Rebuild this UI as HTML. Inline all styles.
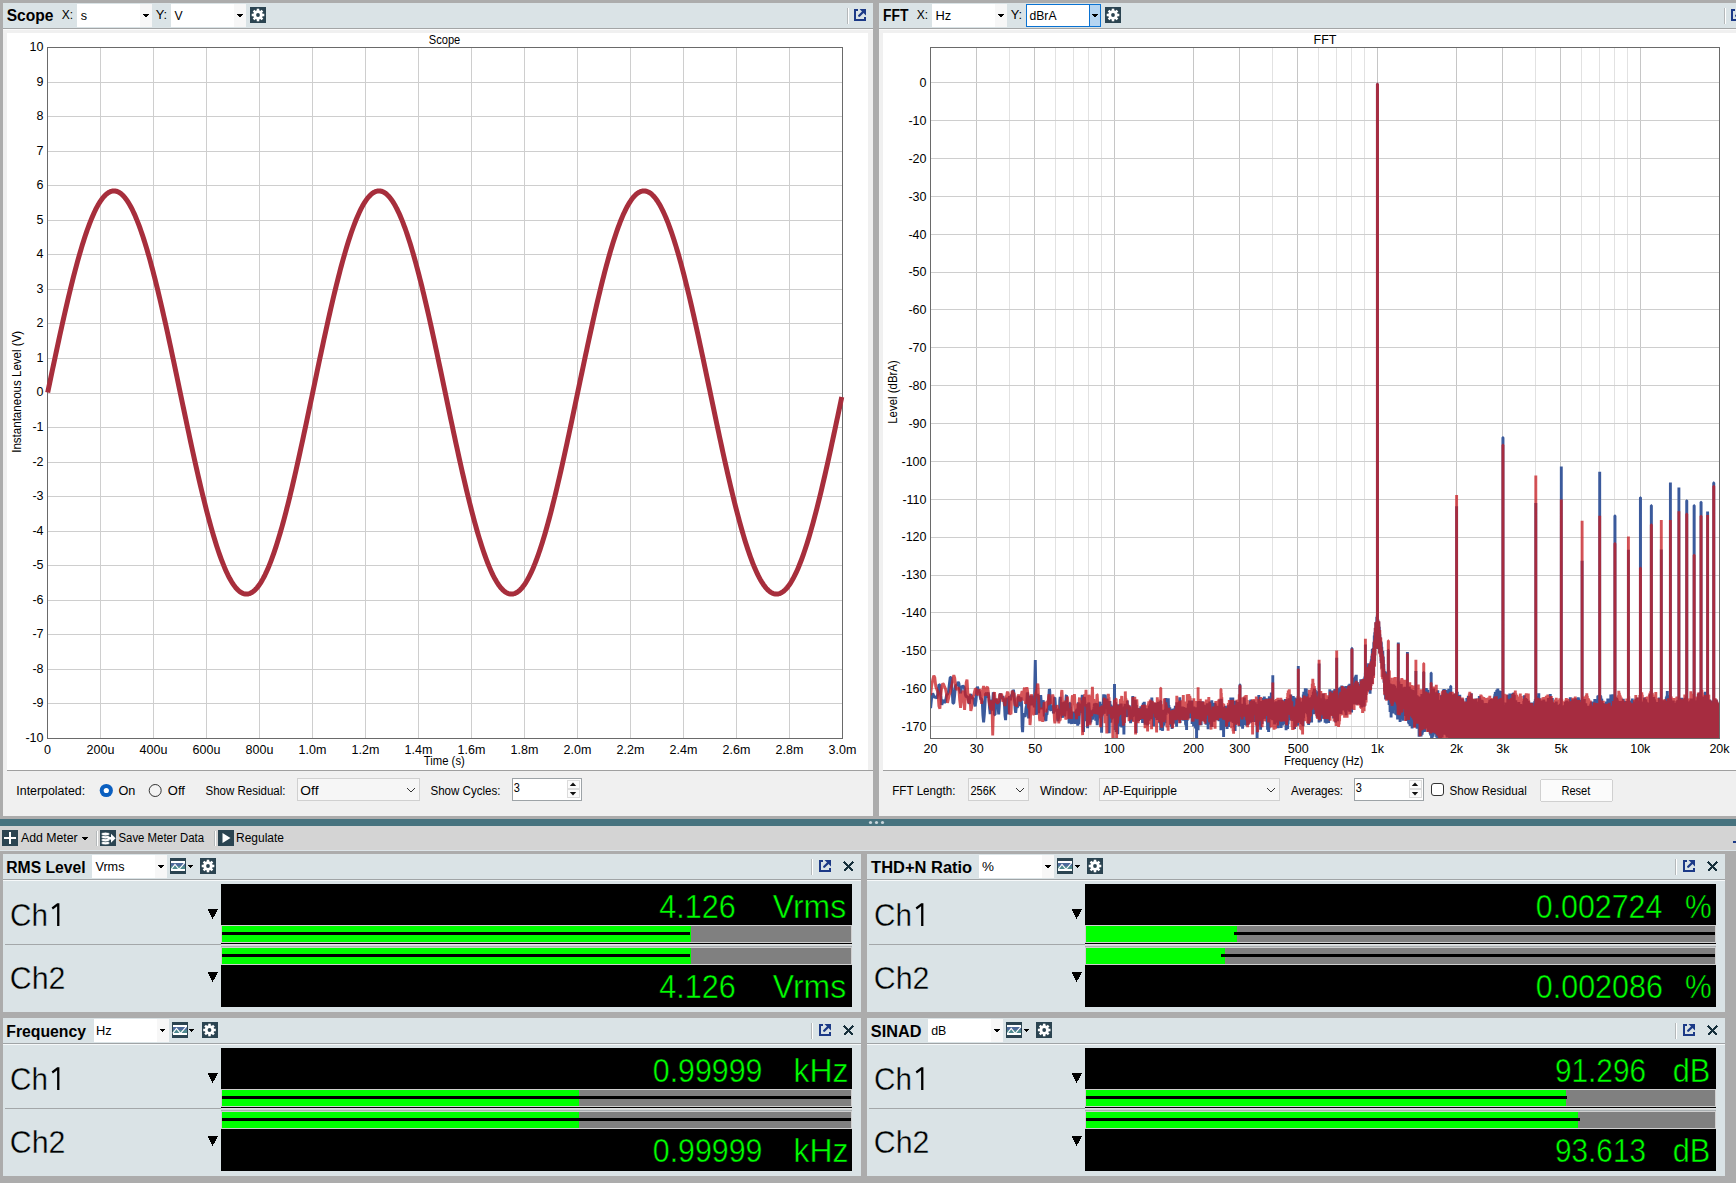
<!DOCTYPE html>
<html><head><meta charset="utf-8"><title>AP</title>
<style>html,body{margin:0;padding:0;overflow:hidden;background:#acacac;} svg{display:block;}</style>
</head><body>
<svg width="1736" height="1183" viewBox="0 0 1736 1183" font-family='"Liberation Sans", sans-serif' shape-rendering="crispEdges">
<rect x="0" y="0" width="1736" height="1183" fill="#acacac" />
<rect x="3" y="3" width="870" height="25" fill="#dae3e6" />
<rect x="3" y="28" width="870" height="1" fill="#a3a5a6" />
<rect x="3" y="29" width="870" height="787" fill="#f0f0f0" />
<rect x="3" y="29" width="870" height="1" fill="#fbfbfb" />
<rect x="7" y="33" width="861" height="737" fill="#ffffff" />
<rect x="7" y="770" width="866" height="1" fill="#a0a0a0" />
<text x="6.65" y="20.9" font-size="16" fill="#000" font-weight="bold" textLength="46.68" lengthAdjust="spacingAndGlyphs" >Scope</text>
<text x="61.72" y="18.8" font-size="12.5" fill="#000" textLength="11.37" lengthAdjust="spacingAndGlyphs" >X:</text>
<rect x="77" y="4" width="75" height="23" fill="#ffffff" />
<rect x="140" y="4" width="12" height="23" fill="#f7f7f7" />
<polygon points="142.5,13.75 149.5,13.75 146.0,17.25" fill="#000"/>
<text x="80.65" y="19.5" font-size="12.5" fill="#000" textLength="6.31" lengthAdjust="spacingAndGlyphs" >s</text>
<text x="155.72" y="18.8" font-size="12.5" fill="#000" textLength="11.45" lengthAdjust="spacingAndGlyphs" >Y:</text>
<rect x="171" y="4" width="75" height="23" fill="#ffffff" />
<rect x="234" y="4" width="12" height="23" fill="#f7f7f7" />
<polygon points="236.5,13.75 243.5,13.75 240.0,17.25" fill="#000"/>
<text x="174.44" y="19.5" font-size="12.5" fill="#000" textLength="8.12" lengthAdjust="spacingAndGlyphs" >V</text>
<rect x="250" y="7" width="16" height="16" fill="#2b4451" />
<g fill="#fff" shape-rendering="geometricPrecision"><circle cx="258.0" cy="15.0" r="4.7"/><rect x="256.75" y="8.7" width="2.5" height="3" transform="rotate(0 258.0 15.0)"/><rect x="256.75" y="8.7" width="2.5" height="3" transform="rotate(45 258.0 15.0)"/><rect x="256.75" y="8.7" width="2.5" height="3" transform="rotate(90 258.0 15.0)"/><rect x="256.75" y="8.7" width="2.5" height="3" transform="rotate(135 258.0 15.0)"/><rect x="256.75" y="8.7" width="2.5" height="3" transform="rotate(180 258.0 15.0)"/><rect x="256.75" y="8.7" width="2.5" height="3" transform="rotate(225 258.0 15.0)"/><rect x="256.75" y="8.7" width="2.5" height="3" transform="rotate(270 258.0 15.0)"/><rect x="256.75" y="8.7" width="2.5" height="3" transform="rotate(315 258.0 15.0)"/><circle cx="258.0" cy="15.0" r="1.9" fill="#2b4451"/></g>
<rect x="847" y="8" width="1" height="16" fill="#b4b8ba" />
<rect x="848" y="8" width="1" height="16" fill="#ffffff" />
<rect x="854" y="9" width="2" height="12" fill="#1c3a87" />
<rect x="854" y="19" width="12" height="2" fill="#1c3a87" />
<rect x="854" y="9" width="4" height="2" fill="#1c3a87" />
<rect x="864" y="17" width="2" height="4" fill="#1c3a87" />
<g shape-rendering="geometricPrecision"><polygon points="859.5,9 866,9 866,15.5" fill="#1c3a87"/><path d="M859.2 15.8L863 12" stroke="#1c3a87" stroke-width="2.3" stroke-linecap="round"/></g>
<rect x="879" y="3" width="857" height="25" fill="#dae3e6" />
<rect x="879" y="28" width="857" height="1" fill="#a3a5a6" />
<rect x="879" y="29" width="857" height="787" fill="#f0f0f0" />
<rect x="879" y="29" width="857" height="1" fill="#fbfbfb" />
<rect x="883" y="33" width="853" height="737" fill="#ffffff" />
<rect x="883" y="770" width="853" height="1" fill="#a0a0a0" />
<text x="883.07" y="20.9" font-size="16" fill="#000" font-weight="bold" textLength="25.37" lengthAdjust="spacingAndGlyphs" >FFT</text>
<text x="916.72" y="18.8" font-size="12.5" fill="#000" textLength="11.37" lengthAdjust="spacingAndGlyphs" >X:</text>
<rect x="932" y="4" width="75" height="23" fill="#ffffff" />
<rect x="995" y="4" width="12" height="23" fill="#f7f7f7" />
<polygon points="997.5,13.75 1004.5,13.75 1001.0,17.25" fill="#000"/>
<text x="935.45" y="19.5" font-size="12.5" fill="#000" textLength="15.7" lengthAdjust="spacingAndGlyphs" >Hz</text>
<text x="1010.72" y="18.8" font-size="12.5" fill="#000" textLength="11.45" lengthAdjust="spacingAndGlyphs" >Y:</text>
<rect x="1026" y="4" width="75" height="23" fill="#ffffff" />
<rect x="1089" y="4" width="12" height="23" fill="#b5d5f2" />
<rect x="1026.5" y="4.5" width="74" height="22" fill="none" stroke="#0a72d2"/>
<rect x="1089" y="4" width="1" height="23" fill="#0a72d2" />
<polygon points="1091.5,13.75 1098.5,13.75 1095.0,17.25" fill="#000"/>
<text x="1029.49" y="19.5" font-size="12.5" fill="#000" textLength="27.04" lengthAdjust="spacingAndGlyphs" >dBrA</text>
<rect x="1105" y="7" width="16" height="16" fill="#2b4451" />
<g fill="#fff" shape-rendering="geometricPrecision"><circle cx="1113.0" cy="15.0" r="4.7"/><rect x="1111.75" y="8.7" width="2.5" height="3" transform="rotate(0 1113.0 15.0)"/><rect x="1111.75" y="8.7" width="2.5" height="3" transform="rotate(45 1113.0 15.0)"/><rect x="1111.75" y="8.7" width="2.5" height="3" transform="rotate(90 1113.0 15.0)"/><rect x="1111.75" y="8.7" width="2.5" height="3" transform="rotate(135 1113.0 15.0)"/><rect x="1111.75" y="8.7" width="2.5" height="3" transform="rotate(180 1113.0 15.0)"/><rect x="1111.75" y="8.7" width="2.5" height="3" transform="rotate(225 1113.0 15.0)"/><rect x="1111.75" y="8.7" width="2.5" height="3" transform="rotate(270 1113.0 15.0)"/><rect x="1111.75" y="8.7" width="2.5" height="3" transform="rotate(315 1113.0 15.0)"/><circle cx="1113.0" cy="15.0" r="1.9" fill="#2b4451"/></g>
<rect x="1724" y="8" width="1" height="16" fill="#b4b8ba" />
<rect x="1725" y="8" width="1" height="16" fill="#ffffff" />
<rect x="1731" y="9" width="2" height="12" fill="#1c3a87" />
<rect x="1731" y="19" width="12" height="2" fill="#1c3a87" />
<rect x="1731" y="9" width="4" height="2" fill="#1c3a87" />
<rect x="1741" y="17" width="2" height="4" fill="#1c3a87" />
<g shape-rendering="geometricPrecision"><polygon points="1736.5,9 1743,9 1743,15.5" fill="#1c3a87"/><path d="M1736.2 15.8L1740 12" stroke="#1c3a87" stroke-width="2.3" stroke-linecap="round"/></g>
<rect x="100" y="47" width="1" height="691" fill="#cecece" />
<rect x="153" y="47" width="1" height="691" fill="#cecece" />
<rect x="206" y="47" width="1" height="691" fill="#cecece" />
<rect x="259" y="47" width="1" height="691" fill="#cecece" />
<rect x="312" y="47" width="1" height="691" fill="#cecece" />
<rect x="365" y="47" width="1" height="691" fill="#cecece" />
<rect x="418" y="47" width="1" height="691" fill="#cecece" />
<rect x="471" y="47" width="1" height="691" fill="#cecece" />
<rect x="524" y="47" width="1" height="691" fill="#cecece" />
<rect x="577" y="47" width="1" height="691" fill="#cecece" />
<rect x="630" y="47" width="1" height="691" fill="#cecece" />
<rect x="683" y="47" width="1" height="691" fill="#cecece" />
<rect x="736" y="47" width="1" height="691" fill="#cecece" />
<rect x="789" y="47" width="1" height="691" fill="#cecece" />
<rect x="47" y="82" width="795" height="1" fill="#cecece" />
<rect x="47" y="116" width="795" height="1" fill="#cecece" />
<rect x="47" y="151" width="795" height="1" fill="#cecece" />
<rect x="47" y="185" width="795" height="1" fill="#cecece" />
<rect x="47" y="220" width="795" height="1" fill="#cecece" />
<rect x="47" y="254" width="795" height="1" fill="#cecece" />
<rect x="47" y="289" width="795" height="1" fill="#cecece" />
<rect x="47" y="323" width="795" height="1" fill="#cecece" />
<rect x="47" y="358" width="795" height="1" fill="#cecece" />
<rect x="47" y="393" width="795" height="1" fill="#cecece" />
<rect x="47" y="427" width="795" height="1" fill="#cecece" />
<rect x="47" y="462" width="795" height="1" fill="#cecece" />
<rect x="47" y="496" width="795" height="1" fill="#cecece" />
<rect x="47" y="531" width="795" height="1" fill="#cecece" />
<rect x="47" y="565" width="795" height="1" fill="#cecece" />
<rect x="47" y="600" width="795" height="1" fill="#cecece" />
<rect x="47" y="634" width="795" height="1" fill="#cecece" />
<rect x="47" y="669" width="795" height="1" fill="#cecece" />
<rect x="47" y="703" width="795" height="1" fill="#cecece" />
<rect x="47.5" y="47.5" width="795" height="691" fill="none" stroke="#6a6a6a" stroke-width="1"/>
<text x="43.5" y="50.9" font-size="12.5" fill="#000" text-anchor="end" >10</text>
<text x="43.5" y="85.5" font-size="12.5" fill="#000" text-anchor="end" >9</text>
<text x="43.5" y="120.0" font-size="12.5" fill="#000" text-anchor="end" >8</text>
<text x="43.5" y="154.6" font-size="12.5" fill="#000" text-anchor="end" >7</text>
<text x="43.5" y="189.1" font-size="12.5" fill="#000" text-anchor="end" >6</text>
<text x="43.5" y="223.7" font-size="12.5" fill="#000" text-anchor="end" >5</text>
<text x="43.5" y="258.2" font-size="12.5" fill="#000" text-anchor="end" >4</text>
<text x="43.5" y="292.8" font-size="12.5" fill="#000" text-anchor="end" >3</text>
<text x="43.5" y="327.3" font-size="12.5" fill="#000" text-anchor="end" >2</text>
<text x="43.5" y="361.8" font-size="12.5" fill="#000" text-anchor="end" >1</text>
<text x="43.5" y="396.4" font-size="12.5" fill="#000" text-anchor="end" >0</text>
<text x="43.5" y="430.9" font-size="12.5" fill="#000" text-anchor="end" >-1</text>
<text x="43.5" y="465.5" font-size="12.5" fill="#000" text-anchor="end" >-2</text>
<text x="43.5" y="500.0" font-size="12.5" fill="#000" text-anchor="end" >-3</text>
<text x="43.5" y="534.6" font-size="12.5" fill="#000" text-anchor="end" >-4</text>
<text x="43.5" y="569.1" font-size="12.5" fill="#000" text-anchor="end" >-5</text>
<text x="43.5" y="603.7" font-size="12.5" fill="#000" text-anchor="end" >-6</text>
<text x="43.5" y="638.2" font-size="12.5" fill="#000" text-anchor="end" >-7</text>
<text x="43.5" y="672.8" font-size="12.5" fill="#000" text-anchor="end" >-8</text>
<text x="43.5" y="707.4" font-size="12.5" fill="#000" text-anchor="end" >-9</text>
<text x="43.5" y="741.9" font-size="12.5" fill="#000" text-anchor="end" >-10</text>
<text x="47.5" y="754" font-size="12.5" fill="#000" text-anchor="middle" >0</text>
<text x="100.5" y="754" font-size="12.5" fill="#000" text-anchor="middle" >200u</text>
<text x="153.5" y="754" font-size="12.5" fill="#000" text-anchor="middle" >400u</text>
<text x="206.5" y="754" font-size="12.5" fill="#000" text-anchor="middle" >600u</text>
<text x="259.5" y="754" font-size="12.5" fill="#000" text-anchor="middle" >800u</text>
<text x="312.5" y="754" font-size="12.5" fill="#000" text-anchor="middle" >1.0m</text>
<text x="365.5" y="754" font-size="12.5" fill="#000" text-anchor="middle" >1.2m</text>
<text x="418.5" y="754" font-size="12.5" fill="#000" text-anchor="middle" >1.4m</text>
<text x="471.5" y="754" font-size="12.5" fill="#000" text-anchor="middle" >1.6m</text>
<text x="524.5" y="754" font-size="12.5" fill="#000" text-anchor="middle" >1.8m</text>
<text x="577.5" y="754" font-size="12.5" fill="#000" text-anchor="middle" >2.0m</text>
<text x="630.5" y="754" font-size="12.5" fill="#000" text-anchor="middle" >2.2m</text>
<text x="683.5" y="754" font-size="12.5" fill="#000" text-anchor="middle" >2.4m</text>
<text x="736.5" y="754" font-size="12.5" fill="#000" text-anchor="middle" >2.6m</text>
<text x="789.5" y="754" font-size="12.5" fill="#000" text-anchor="middle" >2.8m</text>
<text x="842.5" y="754" font-size="12.5" fill="#000" text-anchor="middle" >3.0m</text>
<text x="444.5" y="44" font-size="12.5" fill="#000" text-anchor="middle" textLength="31.5" lengthAdjust="spacingAndGlyphs" >Scope</text>
<text x="444.3" y="764.5" font-size="12.5" fill="#000" text-anchor="middle" textLength="41" lengthAdjust="spacingAndGlyphs" >Time (s)</text>
<text x="0" y="0" font-size="12.5" fill="#000" text-anchor="middle" textLength="122" lengthAdjust="spacingAndGlyphs" transform="translate(20.8 391.8) rotate(-90)">Instantaneous Level (V)</text>
<polyline points="47.70,392.50 48.69,387.76 49.69,383.01 50.68,378.28 51.67,373.55 52.66,368.83 53.66,364.13 54.65,359.44 55.64,354.77 56.63,350.12 57.63,345.49 58.62,340.89 59.61,336.32 60.60,331.78 61.60,327.27 62.59,322.80 63.58,318.37 64.57,313.98 65.57,309.63 66.56,305.33 67.55,301.08 68.54,296.87 69.54,292.72 70.53,288.63 71.52,284.59 72.51,280.61 73.51,276.70 74.50,272.85 75.49,269.06 76.49,265.35 77.48,261.70 78.47,258.13 79.46,254.63 80.46,251.20 81.45,247.86 82.44,244.59 83.43,241.41 84.43,238.31 85.42,235.30 86.41,232.37 87.40,229.53 88.40,226.79 89.39,224.13 90.38,221.57 91.37,219.10 92.37,216.73 93.36,214.45 94.35,212.28 95.34,210.20 96.34,208.23 97.33,206.35 98.32,204.58 99.31,202.92 100.31,201.36 101.30,199.90 102.29,198.55 103.29,197.31 104.28,196.18 105.27,195.16 106.26,194.24 107.26,193.44 108.25,192.74 109.24,192.16 110.23,191.68 111.23,191.32 112.22,191.07 113.21,190.93 114.20,190.90 115.20,190.99 116.19,191.18 117.18,191.49 118.17,191.91 119.17,192.44 120.16,193.08 121.15,193.83 122.14,194.69 123.14,195.66 124.13,196.74 125.12,197.93 126.11,199.23 127.11,200.63 128.10,202.14 129.09,203.75 130.09,205.47 131.08,207.30 132.07,209.22 133.06,211.25 134.06,213.37 135.05,215.60 136.04,217.93 137.03,220.35 138.03,222.86 139.02,225.47 140.01,228.18 141.00,230.97 142.00,233.85 142.99,236.82 143.98,239.88 144.97,243.02 145.97,246.25 146.96,249.55 147.95,252.94 148.94,256.40 149.94,259.94 150.93,263.55 151.92,267.23 152.91,270.98 153.91,274.80 154.90,278.69 155.89,282.63 156.88,286.64 157.88,290.71 158.87,294.83 159.86,299.01 160.86,303.24 161.85,307.52 162.84,311.84 163.83,316.21 164.83,320.62 165.82,325.08 166.81,329.56 167.80,334.09 168.80,338.65 169.79,343.23 170.78,347.85 171.77,352.48 172.77,357.15 173.76,361.83 174.75,366.52 175.74,371.23 176.74,375.96 177.73,380.69 178.72,385.43 179.71,390.17 180.71,394.92 181.70,399.66 182.69,404.40 183.68,409.13 184.68,413.86 185.67,418.57 186.66,423.26 187.66,427.94 188.65,432.60 189.64,437.24 190.63,441.86 191.63,446.44 192.62,451.00 193.61,455.52 194.60,460.01 195.60,464.46 196.59,468.87 197.58,473.24 198.57,477.57 199.57,481.84 200.56,486.07 201.55,490.25 202.54,494.37 203.54,498.44 204.53,502.44 205.52,506.39 206.51,510.27 207.51,514.09 208.50,517.84 209.49,521.52 210.48,525.13 211.48,528.67 212.47,532.13 213.46,535.51 214.46,538.82 215.45,542.04 216.44,545.18 217.43,548.23 218.43,551.20 219.42,554.09 220.41,556.88 221.40,559.58 222.40,562.19 223.39,564.70 224.38,567.12 225.37,569.44 226.37,571.67 227.36,573.79 228.35,575.82 229.34,577.74 230.34,579.56 231.33,581.28 232.32,582.89 233.31,584.40 234.31,585.80 235.30,587.09 236.29,588.28 237.28,589.36 238.28,590.32 239.27,591.18 240.26,591.93 241.26,592.57 242.25,593.10 243.24,593.52 244.23,593.82 245.23,594.01 246.22,594.10 247.21,594.07 248.20,593.93 249.20,593.67 250.19,593.31 251.18,592.83 252.17,592.25 253.17,591.55 254.16,590.74 255.15,589.83 256.14,588.80 257.14,587.66 258.13,586.42 259.12,585.07 260.11,583.61 261.11,582.05 262.10,580.38 263.09,578.61 264.08,576.74 265.08,574.76 266.07,572.68 267.06,570.50 268.06,568.23 269.05,565.85 270.04,563.38 271.03,560.82 272.03,558.16 273.02,555.41 274.01,552.57 275.00,549.64 276.00,546.63 276.99,543.53 277.98,540.34 278.97,537.08 279.97,533.73 280.96,530.31 281.95,526.81 282.94,523.23 283.94,519.58 284.93,515.87 285.92,512.08 286.91,508.23 287.91,504.31 288.90,500.33 289.89,496.29 290.88,492.20 291.88,488.05 292.87,483.84 293.86,479.59 294.86,475.29 295.85,470.94 296.84,466.55 297.83,462.11 298.83,457.64 299.82,453.13 300.81,448.59 301.80,444.02 302.80,439.42 303.79,434.79 304.78,430.14 305.77,425.47 306.77,420.78 307.76,416.08 308.75,411.36 309.74,406.63 310.74,401.89 311.73,397.15 312.72,392.41 313.71,387.66 314.71,382.92 315.70,378.19 316.69,373.46 317.68,368.74 318.68,364.04 319.67,359.35 320.66,354.68 321.66,350.03 322.65,345.40 323.64,340.80 324.63,336.23 325.63,331.69 326.62,327.19 327.61,322.72 328.60,318.28 329.60,313.89 330.59,309.55 331.58,305.25 332.57,300.99 333.57,296.79 334.56,292.64 335.55,288.55 336.54,284.51 337.54,280.54 338.53,276.62 339.52,272.77 340.51,268.99 341.51,265.27 342.50,261.63 343.49,258.06 344.48,254.56 345.48,251.14 346.47,247.80 347.46,244.53 348.45,241.35 349.45,238.25 350.44,235.24 351.43,232.32 352.43,229.48 353.42,226.73 354.41,224.08 355.40,221.52 356.40,219.05 357.39,216.68 358.38,214.41 359.37,212.24 360.37,210.16 361.36,208.19 362.35,206.32 363.34,204.55 364.34,202.89 365.33,201.33 366.32,199.87 367.31,198.53 368.31,197.29 369.30,196.16 370.29,195.14 371.28,194.22 372.28,193.42 373.27,192.73 374.26,192.15 375.25,191.68 376.25,191.32 377.24,191.07 378.23,190.93 379.23,190.90 380.22,190.99 381.21,191.19 382.20,191.50 383.20,191.92 384.19,192.45 385.18,193.09 386.17,193.85 387.17,194.71 388.16,195.68 389.15,196.77 390.14,197.96 391.14,199.25 392.13,200.66 393.12,202.17 394.11,203.79 395.11,205.51 396.10,207.33 397.09,209.26 398.08,211.29 399.08,213.42 400.07,215.64 401.06,217.97 402.05,220.39 403.05,222.91 404.04,225.52 405.03,228.23 406.03,231.02 407.02,233.91 408.01,236.88 409.00,239.94 410.00,243.08 410.99,246.31 411.98,249.62 412.97,253.00 413.97,256.47 414.96,260.01 415.95,263.62 416.94,267.30 417.94,271.06 418.93,274.88 419.92,278.76 420.91,282.71 421.91,286.72 422.90,290.79 423.89,294.91 424.88,299.09 425.88,303.32 426.87,307.60 427.86,311.92 428.85,316.30 429.85,320.71 430.84,325.16 431.83,329.65 432.83,334.18 433.82,338.73 434.81,343.32 435.80,347.94 436.80,352.57 437.79,357.24 438.78,361.92 439.77,366.61 440.77,371.33 441.76,376.05 442.75,380.78 443.74,385.52 444.74,390.26 445.73,395.01 446.72,399.75 447.71,404.49 448.71,409.22 449.70,413.95 450.69,418.66 451.68,423.35 452.68,428.03 453.67,432.69 454.66,437.33 455.65,441.94 456.65,446.53 457.64,451.08 458.63,455.61 459.63,460.10 460.62,464.55 461.61,468.96 462.60,473.33 463.60,477.65 464.59,481.93 465.58,486.15 466.57,490.33 467.57,494.45 468.56,498.51 469.55,502.52 470.54,506.46 471.54,510.35 472.53,514.16 473.52,517.91 474.51,521.59 475.51,525.20 476.50,528.73 477.49,532.19 478.48,535.58 479.48,538.88 480.47,542.10 481.46,545.24 482.45,548.29 483.45,551.26 484.44,554.14 485.43,556.93 486.43,559.63 487.42,562.24 488.41,564.75 489.40,567.17 490.40,569.49 491.39,571.71 492.38,573.83 493.37,575.86 494.37,577.78 495.36,579.60 496.35,581.31 497.34,582.92 498.34,584.43 499.33,585.82 500.32,587.12 501.31,588.30 502.31,589.38 503.30,590.34 504.29,591.20 505.28,591.95 506.28,592.58 507.27,593.11 508.26,593.52 509.25,593.83 510.25,594.02 511.24,594.10 512.23,594.06 513.23,593.92 514.22,593.67 515.21,593.30 516.20,592.82 517.20,592.23 518.19,591.54 519.18,590.73 520.17,589.81 521.17,588.78 522.16,587.64 523.15,586.40 524.14,585.04 525.14,583.59 526.13,582.02 527.12,580.35 528.11,578.58 529.11,576.70 530.10,574.72 531.09,572.64 532.08,570.46 533.08,568.18 534.07,565.81 535.06,563.34 536.05,560.77 537.05,558.11 538.04,555.36 539.03,552.52 540.02,549.59 541.02,546.57 542.01,543.47 543.00,540.28 544.00,537.01 544.99,533.67 545.98,530.24 546.97,526.74 547.97,523.16 548.96,519.51 549.95,515.79 550.94,512.01 551.94,508.15 552.93,504.23 553.92,500.26 554.91,496.22 555.91,492.12 556.90,487.97 557.89,483.76 558.88,479.51 559.88,475.20 560.87,470.85 561.86,466.46 562.85,462.03 563.85,457.56 564.84,453.05 565.83,448.51 566.82,443.93 567.82,439.33 568.81,434.70 569.80,430.05 570.80,425.38 571.79,420.69 572.78,415.99 573.77,411.27 574.77,406.54 575.76,401.80 576.75,397.06 577.74,392.32 578.74,387.57 579.73,382.83 580.72,378.10 581.71,373.37 582.71,368.65 583.70,363.95 584.69,359.26 585.68,354.59 586.68,349.94 587.67,345.31 588.66,340.72 589.65,336.15 590.65,331.61 591.64,327.10 592.63,322.63 593.62,318.20 594.62,313.81 595.61,309.46 596.60,305.16 597.60,300.91 598.59,296.71 599.58,292.56 600.57,288.47 601.57,284.44 602.56,280.46 603.55,276.55 604.54,272.70 605.54,268.92 606.53,265.20 607.52,261.56 608.51,257.99 609.51,254.49 610.50,251.07 611.49,247.73 612.48,244.47 613.48,241.29 614.47,238.20 615.46,235.18 616.45,232.26 617.45,229.43 618.44,226.68 619.43,224.03 620.42,221.47 621.42,219.01 622.41,216.64 623.40,214.37 624.40,212.20 625.39,210.12 626.38,208.15 627.37,206.28 628.37,204.52 629.36,202.86 630.35,201.30 631.34,199.85 632.34,198.50 633.33,197.27 634.32,196.14 635.31,195.12 636.31,194.21 637.30,193.41 638.29,192.72 639.28,192.14 640.28,191.67 641.27,191.31 642.26,191.06 643.25,190.93 644.25,190.91 645.24,190.99 646.23,191.19 647.22,191.51 648.22,191.93 649.21,192.46 650.20,193.11 651.20,193.86 652.19,194.73 653.18,195.70 654.17,196.79 655.17,197.98 656.16,199.28 657.15,200.69 658.14,202.20 659.14,203.82 660.13,205.54 661.12,207.37 662.11,209.30 663.11,211.33 664.10,213.46 665.09,215.69 666.08,218.02 667.08,220.44 668.07,222.96 669.06,225.57 670.05,228.28 671.05,231.08 672.04,233.96 673.03,236.94 674.02,240.00 675.02,243.15 676.01,246.37 677.00,249.68 678.00,253.07 678.99,256.53 679.98,260.07 680.97,263.69 681.97,267.37 682.96,271.13 683.95,274.95 684.94,278.84 685.94,282.79 686.93,286.80 687.92,290.86 688.91,294.99 689.91,299.17 690.90,303.40 691.89,307.68 692.88,312.01 693.88,316.38 694.87,320.79 695.86,325.25 696.85,329.74 697.85,334.26 698.84,338.82 699.83,343.41 700.82,348.02 701.82,352.66 702.81,357.32 703.80,362.01 704.79,366.70 705.79,371.42 706.78,376.14 707.77,380.87 708.77,385.61 709.76,390.36 710.75,395.10 711.74,399.84 712.74,404.58 713.73,409.31 714.72,414.04 715.71,418.75 716.71,423.44 717.70,428.12 718.69,432.78 719.68,437.42 720.68,442.03 721.67,446.62 722.66,451.17 723.65,455.69 724.65,460.18 725.64,464.63 726.63,469.04 727.62,473.41 728.62,477.73 729.61,482.01 730.60,486.23 731.59,490.41 732.59,494.53 733.58,498.59 734.57,502.60 735.57,506.54 736.56,510.42 737.55,514.24 738.54,517.98 739.54,521.66 740.53,525.27 741.52,528.80 742.51,532.26 743.51,535.64 744.50,538.94 745.49,542.16 746.48,545.30 747.48,548.35 748.47,551.32 749.46,554.19 750.45,556.98 751.45,559.68 752.44,562.29 753.43,564.80 754.42,567.21 755.42,569.53 756.41,571.75 757.40,573.87 758.39,575.89 759.39,577.81 760.38,579.63 761.37,581.34 762.37,582.95 763.36,584.45 764.35,585.85 765.34,587.14 766.34,588.32 767.33,589.40 768.32,590.36 769.31,591.21 770.31,591.96 771.30,592.59 772.29,593.12 773.28,593.53 774.28,593.83 775.27,594.02 776.26,594.10 777.25,594.06 778.25,593.92 779.24,593.66 780.23,593.29 781.22,592.81 782.22,592.22 783.21,591.52 784.20,590.71 785.19,589.79 786.19,588.76 787.18,587.62 788.17,586.37 789.17,585.02 790.16,583.56 791.15,581.99 792.14,580.32 793.14,578.54 794.13,576.66 795.12,574.68 796.11,572.60 797.11,570.42 798.10,568.14 799.09,565.76 800.08,563.29 801.08,560.72 802.07,558.06 803.06,555.30 804.05,552.46 805.05,549.53 806.04,546.51 807.03,543.41 808.02,540.22 809.02,536.95 810.01,533.60 811.00,530.17 811.99,526.67 812.99,523.09 813.98,519.44 814.97,515.72 815.97,511.93 816.96,508.08 817.95,504.16 818.94,500.18 819.94,496.14 820.93,492.04 821.92,487.89 822.91,483.68 823.91,479.42 824.90,475.12 825.89,470.77 826.88,466.38 827.88,461.94 828.87,457.47 829.86,452.96 830.85,448.42 831.85,443.84 832.84,439.24 833.83,434.61 834.82,429.96 835.82,425.29 836.81,420.60 837.80,415.90 838.79,411.18 839.79,406.45 840.78,401.71 841.77,396.97" fill="none" stroke="#a72e3c" stroke-width="5" stroke-linejoin="round" shape-rendering="geometricPrecision"/>
<rect x="1009" y="47" width="1" height="691" fill="#e2e2e2" />
<rect x="1055" y="47" width="1" height="691" fill="#e2e2e2" />
<rect x="1073" y="47" width="1" height="691" fill="#e2e2e2" />
<rect x="1088" y="47" width="1" height="691" fill="#e2e2e2" />
<rect x="1101" y="47" width="1" height="691" fill="#e2e2e2" />
<rect x="1272" y="47" width="1" height="691" fill="#e2e2e2" />
<rect x="1318" y="47" width="1" height="691" fill="#e2e2e2" />
<rect x="1336" y="47" width="1" height="691" fill="#e2e2e2" />
<rect x="1351" y="47" width="1" height="691" fill="#e2e2e2" />
<rect x="1364" y="47" width="1" height="691" fill="#e2e2e2" />
<rect x="1535" y="47" width="1" height="691" fill="#e2e2e2" />
<rect x="1581" y="47" width="1" height="691" fill="#e2e2e2" />
<rect x="1599" y="47" width="1" height="691" fill="#e2e2e2" />
<rect x="1614" y="47" width="1" height="691" fill="#e2e2e2" />
<rect x="1627" y="47" width="1" height="691" fill="#e2e2e2" />
<rect x="976" y="47" width="1" height="691" fill="#c6c6c6" />
<rect x="1034" y="47" width="1" height="691" fill="#c6c6c6" />
<rect x="1114" y="47" width="1" height="691" fill="#c6c6c6" />
<rect x="1193" y="47" width="1" height="691" fill="#c6c6c6" />
<rect x="1239" y="47" width="1" height="691" fill="#c6c6c6" />
<rect x="1297" y="47" width="1" height="691" fill="#c6c6c6" />
<rect x="1377" y="47" width="1" height="691" fill="#c6c6c6" />
<rect x="1456" y="47" width="1" height="691" fill="#c6c6c6" />
<rect x="1502" y="47" width="1" height="691" fill="#c6c6c6" />
<rect x="1560" y="47" width="1" height="691" fill="#c6c6c6" />
<rect x="1640" y="47" width="1" height="691" fill="#c6c6c6" />
<rect x="930" y="82" width="789" height="1" fill="#cecece" />
<rect x="930" y="120" width="789" height="1" fill="#cecece" />
<rect x="930" y="158" width="789" height="1" fill="#cecece" />
<rect x="930" y="196" width="789" height="1" fill="#cecece" />
<rect x="930" y="234" width="789" height="1" fill="#cecece" />
<rect x="930" y="272" width="789" height="1" fill="#cecece" />
<rect x="930" y="309" width="789" height="1" fill="#cecece" />
<rect x="930" y="347" width="789" height="1" fill="#cecece" />
<rect x="930" y="385" width="789" height="1" fill="#cecece" />
<rect x="930" y="423" width="789" height="1" fill="#cecece" />
<rect x="930" y="461" width="789" height="1" fill="#cecece" />
<rect x="930" y="499" width="789" height="1" fill="#cecece" />
<rect x="930" y="537" width="789" height="1" fill="#cecece" />
<rect x="930" y="575" width="789" height="1" fill="#cecece" />
<rect x="930" y="612" width="789" height="1" fill="#cecece" />
<rect x="930" y="650" width="789" height="1" fill="#cecece" />
<rect x="930" y="688" width="789" height="1" fill="#cecece" />
<rect x="930" y="726" width="789" height="1" fill="#cecece" />
<rect x="930.5" y="47.5" width="789" height="691" fill="none" stroke="#6a6a6a" stroke-width="1"/>
<text x="926.5" y="87.0" font-size="12.5" fill="#000" text-anchor="end" >0</text>
<text x="926.5" y="124.9" font-size="12.5" fill="#000" text-anchor="end" >-10</text>
<text x="926.5" y="162.7" font-size="12.5" fill="#000" text-anchor="end" >-20</text>
<text x="926.5" y="200.6" font-size="12.5" fill="#000" text-anchor="end" >-30</text>
<text x="926.5" y="238.5" font-size="12.5" fill="#000" text-anchor="end" >-40</text>
<text x="926.5" y="276.3" font-size="12.5" fill="#000" text-anchor="end" >-50</text>
<text x="926.5" y="314.2" font-size="12.5" fill="#000" text-anchor="end" >-60</text>
<text x="926.5" y="352.1" font-size="12.5" fill="#000" text-anchor="end" >-70</text>
<text x="926.5" y="390.0" font-size="12.5" fill="#000" text-anchor="end" >-80</text>
<text x="926.5" y="427.8" font-size="12.5" fill="#000" text-anchor="end" >-90</text>
<text x="926.5" y="465.7" font-size="12.5" fill="#000" text-anchor="end" >-100</text>
<text x="926.5" y="503.6" font-size="12.5" fill="#000" text-anchor="end" >-110</text>
<text x="926.5" y="541.4" font-size="12.5" fill="#000" text-anchor="end" >-120</text>
<text x="926.5" y="579.3" font-size="12.5" fill="#000" text-anchor="end" >-130</text>
<text x="926.5" y="617.2" font-size="12.5" fill="#000" text-anchor="end" >-140</text>
<text x="926.5" y="655.0" font-size="12.5" fill="#000" text-anchor="end" >-150</text>
<text x="926.5" y="692.9" font-size="12.5" fill="#000" text-anchor="end" >-160</text>
<text x="926.5" y="730.8" font-size="12.5" fill="#000" text-anchor="end" >-170</text>
<text x="930.5" y="753.3" font-size="12.5" fill="#000" text-anchor="middle" >20</text>
<text x="976.8" y="753.3" font-size="12.5" fill="#000" text-anchor="middle" >30</text>
<text x="1035.2" y="753.3" font-size="12.5" fill="#000" text-anchor="middle" >50</text>
<text x="1114.3" y="753.3" font-size="12.5" fill="#000" text-anchor="middle" >100</text>
<text x="1193.5" y="753.3" font-size="12.5" fill="#000" text-anchor="middle" >200</text>
<text x="1239.8" y="753.3" font-size="12.5" fill="#000" text-anchor="middle" >300</text>
<text x="1298.2" y="753.3" font-size="12.5" fill="#000" text-anchor="middle" >500</text>
<text x="1377.3" y="753.3" font-size="12.5" fill="#000" text-anchor="middle" >1k</text>
<text x="1456.5" y="753.3" font-size="12.5" fill="#000" text-anchor="middle" >2k</text>
<text x="1502.8" y="753.3" font-size="12.5" fill="#000" text-anchor="middle" >3k</text>
<text x="1561.2" y="753.3" font-size="12.5" fill="#000" text-anchor="middle" >5k</text>
<text x="1640.3" y="753.3" font-size="12.5" fill="#000" text-anchor="middle" >10k</text>
<text x="1719.5" y="753.3" font-size="12.5" fill="#000" text-anchor="middle" >20k</text>
<text x="1325" y="44" font-size="12.5" fill="#000" text-anchor="middle" >FFT</text>
<text x="1323.7" y="764.5" font-size="12.5" fill="#000" text-anchor="middle" textLength="79.5" lengthAdjust="spacingAndGlyphs" >Frequency (Hz)</text>
<text x="0" y="0" font-size="12.5" fill="#000" text-anchor="middle" textLength="63.5" lengthAdjust="spacingAndGlyphs" transform="translate(896.8 392) rotate(-90)">Level (dBrA)</text>
<defs><clipPath id="fftclip"><rect x="931" y="48" width="788" height="690"/></clipPath></defs>
<g clip-path="url(#fftclip)" shape-rendering="geometricPrecision" fill="none" stroke-width="2.9" stroke-linejoin="bevel"><g transform="translate(0.6 0)">
<polyline points="930.0,708.2 931.1,697.0 932.1,693.4 933.2,695.8 934.2,697.7 935.2,696.6 936.3,698.4 937.3,693.1 938.3,684.7 939.3,685.1 940.2,695.9 941.2,704.8 942.2,701.1 943.1,700.4 944.1,702.9 945.0,700.5 946.0,694.9 946.9,694.3 947.8,692.2 948.7,684.7 949.6,677.5 950.5,677.4 951.4,687.8 952.3,703.2 953.2,703.1 954.1,694.5 954.9,685.8 955.8,685.1 956.6,685.6 957.5,681.9 958.3,683.4 959.1,690.5 960.0,693.2 960.8,688.1 961.6,685.9 962.4,686.5 963.2,686.2 964.0,688.8 964.8,694.8 965.6,697.1 966.4,696.6 967.1,697.0 967.9,700.9 968.7,703.8 969.4,698.2 970.2,694.1 971.0,696.5 971.7,698.5 972.4,697.8 973.2,699.4 973.9,703.9 974.6,706.3 975.4,700.6 976.1,690.8 976.8,686.8 977.5,688.9 978.2,690.8 978.9,692.3 979.6,696.7 980.3,699.8 981.0,698.6 981.7,701.7 982.3,715.2 983.0,722.3 983.7,714.9 984.4,704.0 985.0,693.7 985.7,693.5 986.3,697.8 987.0,694.5 987.6,692.5 988.3,696.3 988.9,707.7 989.6,714.2 990.2,700.2 990.8,700.9 991.4,710.6 992.1,701.2 992.7,692.3 993.3,696.3 993.9,714.7 994.5,714.8 995.1,700.1 995.7,698.6 996.3,703.9 996.9,704.9 997.5,707.1 998.1,714.5 998.7,706.0 999.3,695.2 999.9,693.5 1000.5,696.5 1001.0,698.7 1001.6,696.9 1002.2,696.5 1002.7,698.3 1003.3,701.1 1003.9,705.5 1004.4,715.7 1005.0,720.1 1005.5,705.3 1006.1,697.5 1006.6,701.4 1007.2,712.3 1007.7,714.2 1008.3,702.2 1008.8,696.1 1009.3,698.1 1009.9,700.3 1010.4,697.1 1010.9,695.2 1011.5,695.0 1012.0,692.4 1012.5,690.0 1013.0,690.7 1013.5,695.5 1014.1,702.4 1014.6,709.5 1015.1,712.8 1015.6,708.1 1016.1,705.3 1016.6,707.3 1017.1,706.8 1017.6,698.6 1018.1,696.0 1018.6,701.2 1019.1,705.1 1019.6,705.0 1020.1,699.3 1020.5,697.3 1021.0,704.6 1021.5,726.7 1022.0,732.1 1022.5,719.2 1022.9,713.7 1023.4,714.3 1023.9,714.4 1024.4,716.7 1024.8,715.5 1025.3,708.5 1025.8,705.9 1026.2,701.1 1026.7,692.5 1027.1,693.9 1027.6,707.8 1028.0,718.4 1028.5,706.6 1028.9,699.3 1029.4,696.0 1029.8,696.8 1030.3,701.6 1030.7,705.3 1031.2,700.7 1031.6,695.8 1032.1,696.9 1032.5,701.2 1032.9,702.9 1033.4,705.1 1033.8,707.3 1034.2,682.8 1034.7,660.1 1035.1,682.8 1035.5,713.1 1035.9,714.7 1036.4,701.3 1036.8,694.3 1037.2,695.0 1037.6,703.1 1038.0,713.1 1038.4,709.3 1038.9,706.1 1039.3,702.8 1039.7,697.1 1040.1,695.2 1040.5,700.4 1040.9,707.8 1041.3,708.9 1041.7,706.9 1042.1,703.7 1042.5,700.3 1042.9,702.6 1043.3,709.5 1043.7,716.5 1044.1,715.7 1044.5,714.6 1044.9,720.0 1045.3,720.9 1045.7,714.7 1046.1,714.5 1046.4,714.7 1046.8,709.6 1047.2,709.2 1047.6,709.7 1048.0,702.5 1048.4,694.3 1048.7,689.2 1049.1,690.0 1049.5,698.4 1049.9,710.1 1050.2,710.3 1050.6,708.1 1051.0,709.6 1051.4,709.8 1051.7,707.8 1052.1,705.5 1052.5,707.7 1052.8,713.5 1053.2,710.7 1053.6,702.7 1053.9,697.9 1054.3,697.5 1054.6,701.6 1055.0,708.4 1055.4,711.6 1055.7,709.4 1056.1,709.8 1056.4,710.9 1056.8,712.8 1057.1,719.9 1057.5,720.9 1057.8,719.1 1058.2,716.9 1058.5,715.5 1058.9,708.5 1059.2,700.2 1059.6,696.8 1059.9,701.2 1060.3,706.1 1060.6,702.6 1060.9,705.2 1061.3,712.2 1061.6,715.4 1062.0,717.7 1062.3,714.5 1062.6,707.2 1063.0,702.8 1063.3,702.3 1063.6,708.6 1064.0,715.7 1064.3,715.4 1064.6,712.9 1065.0,707.3 1065.3,700.4 1065.6,695.6 1065.9,695.3 1066.3,702.5 1066.6,708.8 1066.9,707.1 1067.2,710.4 1067.6,709.2 1067.9,706.9 1068.2,715.1 1068.5,723.4 1068.8,711.2 1069.1,703.3 1069.5,703.3 1069.8,708.0 1070.1,710.1 1070.4,712.2 1070.7,721.8 1071.0,724.0 1071.3,714.4 1071.7,715.5 1072.0,717.6 1072.3,716.2 1072.6,717.0 1072.9,716.2 1073.2,711.7 1073.5,712.6 1073.8,721.4 1074.1,723.9 1074.4,719.0 1074.7,718.1 1075.0,720.5 1075.3,716.8 1075.6,711.5 1075.9,710.5 1076.2,709.9 1076.5,709.0 1076.8,716.8 1077.1,725.8 1077.4,709.4 1077.7,702.2 1078.0,710.4 1078.3,724.4 1078.6,716.2 1078.9,713.0 1079.1,713.3 1079.4,707.8 1079.7,703.6 1080.0,704.7 1080.3,709.6 1080.6,712.1 1080.9,712.3 1081.2,708.1 1081.4,698.3 1081.7,694.8 1082.0,701.2 1082.3,711.9 1082.6,722.7 1082.9,732.1 1083.1,715.1 1083.4,702.8 1083.7,697.1 1084.0,698.8 1084.3,703.5 1084.5,707.3 1084.8,710.5 1085.1,716.8 1085.4,721.1 1085.6,713.4 1085.9,705.1 1086.2,704.2 1086.5,709.4 1086.7,718.0 1087.0,728.2 1087.3,722.5 1087.5,709.8 1087.8,705.2 1088.1,702.8 1088.3,703.3 1088.6,707.6 1088.9,711.2 1089.1,714.3 1089.4,722.1 1089.7,723.5 1089.9,720.9 1090.2,722.0 1090.5,718.6 1090.7,712.2 1091.0,710.4 1091.2,714.5 1091.5,717.5 1091.8,719.6 1092.0,718.5 1092.3,710.6 1092.5,710.1 1092.8,710.9 1093.1,709.2 1093.3,708.3 1093.6,706.7 1093.8,703.5 1094.1,704.3 1094.3,704.3 1094.6,705.7 1094.8,712.7 1095.1,720.6 1095.4,714.5 1095.6,704.1 1095.9,703.3 1096.1,710.7 1096.4,721.5 1096.6,725.1 1096.9,720.1 1097.1,714.9 1097.3,712.7 1097.6,712.3 1097.8,709.5 1098.1,706.0 1098.3,708.0 1098.6,710.3 1098.8,705.9 1099.1,702.6 1099.3,701.8 1099.6,705.2 1099.8,715.1 1100.0,718.4 1100.3,715.0 1100.5,715.3 1100.8,719.7 1101.0,732.7 1101.2,722.7 1101.5,713.9 1101.7,715.5 1102.0,713.2 1102.2,705.3 1102.4,704.3 1102.7,705.8 1102.9,698.5 1103.1,694.4 1103.4,699.1 1103.6,712.4 1103.8,713.8 1104.1,701.0 1104.3,696.3 1104.5,694.8 1104.8,696.7 1105.0,702.5 1105.2,707.8 1105.5,706.3 1105.7,705.9 1105.9,708.9 1106.2,704.2 1106.4,698.6 1106.6,700.0 1106.8,705.6 1107.1,714.2 1107.3,715.9 1107.5,708.3 1107.7,702.2 1108.0,701.0 1108.2,707.1 1108.4,723.1 1108.6,733.2 1108.9,714.0 1109.1,701.8 1109.3,701.0 1109.5,706.5 1109.8,707.0 1110.0,704.6 1110.2,715.0 1110.4,722.7 1110.6,713.8 1110.9,716.4 1111.1,719.5 1111.3,711.8 1111.5,708.2 1111.7,705.6 1112.0,707.2 1112.2,717.5 1112.4,718.2 1112.6,707.6 1112.8,708.2 1113.0,715.6 1113.3,718.0 1113.5,715.1 1113.7,706.7 1113.9,684.0 1114.1,703.8 1114.3,710.5 1114.5,730.1 1114.8,715.5 1115.0,702.3 1115.2,704.6 1115.4,720.6 1115.6,732.0 1115.8,727.4 1116.0,722.8 1116.2,713.0 1116.4,711.0 1116.6,716.5 1116.9,724.0 1117.1,734.1 1117.3,725.1 1117.5,712.4 1117.7,706.5 1117.9,704.3 1118.1,705.3 1118.3,706.1 1118.5,704.6 1118.7,705.1 1118.9,710.7 1119.1,719.2 1119.3,726.5 1119.5,722.7 1119.7,713.3 1119.9,710.8 1120.1,711.8 1120.3,707.1 1120.6,703.7 1120.8,707.1 1121.0,717.0 1121.2,727.5 1121.4,717.5 1121.6,708.8 1121.8,707.4 1122.0,711.4 1122.2,722.1 1122.4,724.0 1122.6,713.8 1122.8,710.1 1122.9,710.5 1123.1,720.2 1123.3,734.6 1123.5,718.5 1123.7,707.5 1123.9,707.2 1124.1,709.9 1124.3,707.0 1124.5,703.8 1124.7,712.8 1125.0,714.8 1125.2,706.4 1125.5,709.1 1125.7,708.6 1126.0,711.6 1126.2,710.0 1126.5,717.1 1126.7,700.5 1127.0,715.4 1127.2,711.8 1127.5,715.2 1127.7,705.7 1128.0,709.4 1128.2,708.9 1128.5,709.3 1128.7,705.5 1129.0,707.7 1129.2,712.0 1129.5,712.1 1129.7,717.4 1130.0,723.2 1130.2,716.1 1130.5,716.3 1130.7,712.7 1131.0,713.7 1131.2,716.3 1131.5,720.9 1131.7,709.4 1132.0,717.0 1132.2,695.9 1132.5,716.4 1132.7,706.3 1133.0,711.2 1133.2,703.8 1133.5,704.5 1133.7,711.7 1134.0,713.4 1134.2,701.8 1134.5,705.8 1134.7,699.7 1135.0,706.1 1135.2,704.9 1135.5,732.9 1135.7,705.1 1136.0,717.9 1136.2,713.1 1136.5,721.5 1136.7,709.4 1137.0,721.5 1137.2,714.1 1137.5,714.5 1137.7,717.6 1138.0,721.0 1138.2,707.9 1138.5,715.4 1138.7,716.4 1139.0,716.9 1139.2,715.3 1139.5,720.0 1139.7,712.1 1140.0,715.7 1140.2,706.3 1140.5,719.4 1140.7,711.7 1141.0,715.7 1141.2,713.6 1141.5,718.3 1141.7,711.6 1142.0,723.0 1142.2,704.4 1142.5,707.4 1142.7,702.9 1143.0,707.0 1143.2,712.2 1143.5,717.4 1143.7,701.8 1144.0,712.2 1144.2,714.7 1144.5,724.6 1144.7,716.6 1145.0,721.0 1145.2,713.7 1145.5,718.5 1145.7,708.4 1146.0,718.1 1146.2,712.1 1146.5,718.8 1146.7,712.2 1147.0,725.5 1147.2,714.7 1147.5,718.7 1147.7,709.0 1148.0,719.1 1148.2,708.8 1148.5,720.8 1148.7,705.5 1149.0,711.6 1149.2,705.7 1149.5,712.6 1149.7,704.0 1150.0,719.1 1150.2,700.9 1150.5,713.6 1150.7,704.1 1151.0,717.4 1151.2,697.5 1151.5,708.6 1151.7,701.7 1152.0,717.8 1152.2,708.5 1152.5,716.2 1152.7,705.4 1153.0,726.5 1153.2,704.8 1153.5,712.7 1153.7,710.0 1154.0,717.9 1154.2,711.9 1154.5,717.5 1154.7,702.7 1155.0,712.2 1155.2,707.3 1155.5,708.2 1155.7,705.1 1156.0,711.3 1156.2,703.0 1156.5,719.9 1156.7,708.8 1157.0,713.9 1157.2,703.1 1157.5,711.4 1157.7,701.7 1158.0,706.0 1158.2,702.5 1158.5,715.7 1158.7,705.7 1159.0,723.3 1159.2,711.1 1159.5,717.9 1159.7,708.2 1160.0,718.9 1160.1,730.2 1160.1,701.3 1160.2,701.3 1160.2,730.2 1160.2,712.4 1160.5,721.2 1160.7,715.8 1161.0,717.2 1161.2,709.9 1161.5,726.0 1161.7,715.9 1162.0,730.9 1162.2,719.0 1162.5,721.9 1162.7,712.5 1163.0,720.9 1163.2,710.1 1163.5,725.8 1163.7,710.9 1164.0,714.5 1164.2,710.9 1164.5,723.2 1164.7,708.9 1165.0,714.0 1165.2,698.1 1165.5,714.6 1165.7,709.4 1166.0,710.3 1166.2,705.9 1166.5,712.7 1166.7,706.0 1167.0,712.1 1167.2,698.5 1167.5,707.7 1167.7,698.4 1168.0,710.5 1168.2,705.1 1168.5,708.5 1168.7,709.3 1169.0,713.7 1169.2,707.4 1169.5,713.0 1169.7,709.9 1170.0,724.9 1170.2,713.6 1170.5,726.8 1170.7,710.6 1171.0,716.4 1171.2,713.7 1171.5,728.9 1171.7,708.7 1172.0,723.0 1172.2,712.7 1172.5,723.8 1172.7,711.9 1173.0,722.8 1173.2,708.6 1173.5,713.4 1173.7,708.7 1174.0,713.7 1174.2,708.2 1174.5,715.8 1174.7,705.8 1175.0,719.0 1175.2,709.7 1175.5,723.5 1175.7,715.9 1176.0,726.7 1176.2,702.3 1176.5,713.5 1176.7,707.1 1177.0,720.3 1177.2,705.4 1177.5,717.5 1177.7,708.9 1178.0,720.8 1178.2,708.4 1178.5,713.2 1178.7,701.9 1179.0,713.0 1179.2,697.3 1179.5,723.1 1179.7,709.0 1180.0,712.1 1180.2,708.4 1180.5,719.6 1180.7,711.4 1181.0,713.6 1181.2,708.9 1181.5,714.9 1181.7,706.6 1182.0,715.7 1182.2,707.3 1182.5,711.8 1182.7,714.1 1183.0,720.7 1183.2,707.0 1183.5,712.0 1183.7,710.2 1184.0,717.4 1184.2,710.5 1184.5,718.4 1184.7,708.8 1185.0,724.7 1185.2,709.1 1185.5,726.2 1185.7,710.6 1186.0,730.1 1186.2,707.7 1186.5,721.0 1186.7,709.3 1187.0,716.1 1187.2,708.5 1187.5,714.3 1187.7,703.7 1188.0,714.6 1188.2,703.2 1188.5,718.4 1188.7,700.5 1189.0,709.1 1189.2,701.3 1189.5,709.5 1189.7,703.6 1190.0,713.5 1190.2,704.5 1190.5,714.8 1190.7,705.6 1191.0,713.2 1191.2,700.4 1191.5,724.0 1191.7,710.1 1192.0,723.6 1192.2,712.5 1192.5,717.8 1192.7,709.9 1193.0,726.4 1193.2,706.6 1193.5,725.3 1193.7,717.2 1194.0,724.5 1194.2,715.0 1194.5,721.0 1194.7,720.6 1195.0,728.4 1195.2,711.4 1195.5,719.5 1195.7,707.3 1196.0,739.9 1196.2,716.2 1196.5,722.0 1196.7,713.3 1197.0,727.5 1197.2,711.2 1197.5,719.6 1197.5,730.2 1197.5,701.3 1197.5,701.3 1197.5,730.2 1197.7,707.2 1198.0,721.6 1198.2,710.9 1198.5,720.7 1198.7,701.1 1199.0,710.6 1199.2,702.7 1199.5,721.9 1199.7,702.3 1200.0,714.7 1200.2,714.2 1200.5,725.2 1200.7,706.3 1201.0,712.7 1201.2,709.3 1201.5,718.6 1201.7,701.2 1202.0,718.2 1202.2,702.1 1202.5,720.6 1202.7,709.8 1203.0,716.8 1203.2,707.7 1203.5,712.9 1203.7,704.7 1204.0,716.6 1204.2,711.6 1204.5,722.0 1204.7,707.0 1205.0,715.4 1205.2,706.9 1205.5,724.7 1205.7,710.3 1206.0,717.1 1206.2,708.2 1206.5,717.9 1206.7,703.3 1207.0,720.0 1207.2,704.1 1207.5,729.3 1207.7,704.4 1208.0,724.6 1208.2,703.7 1208.5,716.8 1208.7,705.1 1209.0,714.5 1209.2,701.6 1209.5,714.0 1209.7,701.4 1210.0,716.4 1210.2,707.7 1210.5,718.1 1210.7,704.8 1211.0,726.9 1211.2,700.2 1211.5,719.3 1211.7,709.8 1212.0,718.3 1212.2,703.1 1212.5,718.9 1212.7,706.5 1213.0,716.9 1213.2,705.2 1213.5,721.7 1213.7,703.7 1214.0,714.2 1214.2,702.7 1214.5,714.7 1214.7,703.8 1215.0,716.9 1215.2,706.6 1215.5,711.2 1215.7,707.5 1216.0,720.3 1216.2,705.7 1216.5,719.7 1216.7,706.8 1217.0,718.4 1217.2,707.3 1217.5,717.3 1217.7,705.9 1218.0,719.4 1218.2,710.7 1218.5,721.1 1218.7,707.0 1219.0,717.2 1219.2,699.6 1219.5,715.4 1219.7,707.7 1220.0,719.7 1220.2,706.1 1220.3,730.2 1220.3,701.3 1220.4,701.3 1220.4,730.2 1220.5,712.3 1220.7,698.7 1221.0,708.5 1221.2,708.1 1221.5,725.3 1221.7,707.1 1222.0,716.4 1222.2,707.9 1222.5,719.8 1222.7,706.7 1223.0,736.9 1223.2,711.5 1223.5,723.2 1223.7,710.2 1224.0,722.3 1224.2,710.3 1224.5,722.6 1224.7,705.8 1225.0,720.4 1225.2,709.9 1225.5,726.6 1225.7,711.9 1226.0,722.1 1226.2,711.2 1226.5,728.9 1226.7,709.9 1227.0,715.6 1227.2,707.3 1227.5,726.8 1227.7,705.2 1228.0,727.0 1228.2,711.7 1228.5,717.4 1228.7,707.7 1229.0,713.7 1229.2,704.6 1229.5,717.2 1229.7,703.3 1230.0,711.5 1230.2,697.6 1230.5,710.9 1230.7,707.2 1231.0,721.8 1231.2,706.8 1231.5,721.8 1231.7,701.5 1232.0,714.5 1232.2,697.5 1232.5,723.0 1232.7,703.2 1233.0,710.2 1233.2,708.1 1233.5,715.7 1233.7,705.7 1234.0,727.2 1234.2,707.0 1234.5,730.9 1234.7,700.8 1235.0,724.8 1235.2,700.8 1235.5,714.3 1235.7,703.7 1236.0,714.5 1236.2,709.0 1236.5,719.0 1236.7,708.0 1237.0,722.0 1237.2,702.1 1237.5,723.7 1237.7,703.7 1238.0,715.2 1238.2,706.4 1238.5,720.1 1238.7,705.4 1239.0,726.4 1239.2,708.9 1239.3,713.5 1239.3,684.7 1239.4,684.7 1239.4,713.5 1239.5,722.9 1239.7,709.4 1240.0,721.0 1240.2,709.2 1240.5,718.5 1240.7,708.9 1241.0,723.4 1241.2,709.1 1241.5,717.8 1241.7,711.1 1242.0,728.7 1242.2,703.8 1242.5,718.8 1242.7,704.0 1243.0,714.2 1243.2,705.4 1243.5,725.1 1243.7,697.5 1244.0,712.5 1244.2,703.3 1244.5,720.6 1244.7,707.0 1245.0,725.1 1245.2,711.0 1245.5,725.6 1245.7,704.9 1246.0,712.4 1246.2,713.6 1246.5,722.0 1246.7,712.0 1247.0,718.4 1247.2,705.4 1247.5,725.0 1247.7,704.7 1248.0,713.0 1248.2,704.6 1248.5,719.5 1248.7,707.7 1249.0,715.9 1249.2,704.8 1249.5,714.3 1249.7,700.6 1250.0,722.7 1250.2,699.5 1250.5,711.1 1250.7,703.0 1251.0,722.1 1251.2,708.9 1251.5,714.2 1251.7,704.5 1252.0,715.6 1252.2,705.6 1252.5,719.8 1252.7,701.3 1253.0,713.6 1253.2,700.3 1253.5,718.4 1253.7,710.6 1254.0,722.0 1254.2,708.1 1254.5,721.3 1254.7,702.3 1255.0,719.8 1255.2,706.6 1255.5,720.9 1255.7,709.3 1256.0,720.2 1256.2,707.0 1256.5,739.5 1256.7,707.3 1257.0,726.4 1257.2,703.9 1257.5,723.8 1257.7,704.2 1258.0,725.1 1258.2,694.9 1258.5,715.6 1258.7,707.5 1259.0,723.8 1259.2,703.5 1259.5,721.2 1259.7,705.9 1260.0,729.8 1260.2,700.9 1260.5,718.6 1260.7,702.5 1261.0,713.6 1261.2,705.5 1261.5,724.1 1261.7,702.4 1262.0,714.4 1262.2,701.7 1262.5,719.3 1262.7,698.1 1263.0,712.1 1263.2,701.7 1263.5,713.7 1263.7,696.6 1264.0,713.5 1264.2,707.1 1264.5,714.5 1264.7,707.0 1265.0,718.7 1265.2,701.3 1265.5,712.9 1265.7,698.2 1266.0,710.5 1266.2,707.5 1266.5,722.2 1266.7,707.3 1267.0,729.7 1267.2,708.0 1267.5,717.7 1267.7,701.6 1268.0,732.1 1268.2,700.5 1268.5,728.4 1268.7,696.3 1269.0,717.8 1269.2,704.9 1269.5,719.2 1269.7,701.5 1270.0,717.0 1270.2,701.2 1270.5,711.6 1270.7,692.4 1271.0,715.5 1271.2,694.0 1271.5,710.8 1271.7,695.0 1272.0,720.2 1272.2,704.0 1272.2,675.2 1272.2,675.2 1272.2,704.0 1272.2,694.9 1272.5,714.1 1272.7,701.7 1273.0,714.3 1273.2,703.4 1273.5,718.9 1273.7,704.6 1274.0,724.6 1274.2,706.7 1274.5,720.7 1274.7,705.1 1275.0,722.4 1275.2,705.6 1275.5,722.1 1275.7,701.2 1276.0,715.7 1276.2,703.3 1276.5,714.9 1276.7,705.8 1277.0,722.8 1277.2,705.4 1277.5,728.2 1277.7,707.3 1278.0,715.5 1278.2,699.9 1278.5,715.4 1278.7,704.6 1279.0,719.0 1279.2,704.3 1279.5,723.2 1279.7,705.2 1280.0,716.8 1280.2,701.8 1280.5,728.1 1280.7,705.5 1281.0,721.1 1281.2,699.8 1281.5,719.2 1281.7,700.3 1282.0,725.4 1282.2,709.5 1282.5,724.4 1282.7,703.8 1283.0,718.7 1283.2,707.1 1283.5,715.2 1283.7,706.3 1284.0,723.3 1284.2,705.2 1284.5,720.2 1284.7,699.1 1285.0,720.1 1285.2,704.2 1285.5,730.2 1285.7,699.4 1286.0,716.9 1286.2,704.2 1286.5,715.6 1286.7,702.4 1287.0,729.1 1287.2,705.9 1287.5,724.3 1287.7,700.9 1288.0,718.3 1288.2,698.3 1288.5,717.1 1288.7,700.6 1289.0,720.5 1289.2,698.5 1289.5,718.4 1289.7,701.0 1290.0,718.7 1290.2,694.4 1290.5,712.8 1290.7,697.6 1291.0,712.5 1291.2,699.3 1291.5,711.5 1291.7,698.2 1292.0,721.0 1292.2,698.0 1292.5,715.7 1292.7,696.1 1293.0,709.7 1293.2,698.5 1293.5,713.4 1293.7,697.7 1294.0,729.0 1294.2,697.4 1294.5,721.5 1294.7,707.6 1295.0,720.0 1295.2,703.0 1295.5,724.7 1295.7,699.6 1296.0,719.5 1296.2,698.2 1296.5,715.9 1296.7,703.8 1297.0,725.8 1297.2,700.7 1297.5,721.1 1297.7,695.0 1297.7,666.1 1297.7,666.1 1297.7,695.0 1297.7,703.1 1298.0,717.1 1298.2,703.2 1298.5,721.2 1298.7,698.3 1299.0,715.6 1299.2,706.5 1299.5,721.0 1299.7,706.6 1300.0,722.0 1300.2,706.5 1300.5,724.1 1300.7,706.6 1301.0,723.8 1301.2,705.4 1301.5,717.8 1301.7,701.5 1302.0,724.9 1302.2,707.1 1302.5,726.2 1302.7,694.5 1303.0,718.2 1303.2,691.7 1303.5,710.5 1303.7,692.3 1304.0,706.4 1304.2,694.8 1304.5,704.6 1304.7,688.2 1305.0,713.0 1305.2,692.9 1305.5,709.3 1305.7,688.6 1306.0,709.2 1306.2,693.6 1306.5,714.2 1306.7,694.4 1307.0,710.8 1307.2,701.4 1307.5,716.7 1307.7,699.3 1308.0,724.9 1308.2,698.6 1308.5,723.3 1308.7,704.7 1309.0,722.0 1309.2,701.1 1309.5,716.3 1309.7,697.5 1310.0,719.8 1310.2,702.0 1310.5,719.0 1310.7,700.0 1311.0,722.6 1311.2,697.1 1311.5,714.0 1311.7,695.3 1312.0,709.7 1312.2,695.1 1312.5,708.3 1312.7,692.0 1313.0,714.2 1313.2,690.5 1313.5,708.9 1313.7,688.5 1314.0,706.7 1314.2,688.4 1314.5,713.1 1314.7,690.1 1315.0,705.1 1315.2,692.8 1315.5,709.8 1315.7,693.9 1316.0,713.6 1316.2,697.3 1316.5,717.7 1316.7,696.4 1317.0,712.9 1317.2,695.9 1317.5,716.5 1317.7,691.3 1318.0,713.5 1318.2,700.5 1318.5,722.6 1318.5,692.3 1318.5,663.5 1318.5,663.5 1318.5,692.3 1318.7,694.9 1319.0,712.9 1319.2,698.3 1319.5,711.3 1319.7,701.7 1320.0,721.4 1320.2,699.8 1320.5,715.0 1320.7,698.8 1321.0,713.3 1321.2,703.1 1321.5,716.5 1321.7,698.5 1322.0,718.5 1322.2,693.5 1322.5,713.5 1322.7,693.5 1323.0,718.8 1323.2,698.3 1323.5,717.6 1323.7,704.0 1324.0,716.9 1324.2,703.8 1324.5,722.8 1324.7,701.1 1325.0,721.2 1325.2,701.1 1325.5,717.4 1325.7,707.4 1326.0,723.4 1326.2,699.3 1326.5,721.6 1326.7,705.2 1327.0,720.7 1327.2,699.7 1327.5,714.9 1327.7,698.9 1328.0,723.0 1328.2,700.0 1328.5,717.8 1328.7,697.1 1329.0,714.1 1329.2,689.3 1329.5,710.2 1329.7,694.5 1330.0,706.5 1330.2,692.7 1330.5,712.7 1330.7,700.7 1331.0,715.7 1331.2,690.4 1331.5,712.2 1331.7,692.0 1332.0,705.0 1332.2,692.3 1332.5,715.5 1332.7,697.3 1333.0,718.4 1333.2,693.1 1333.5,711.4 1333.7,692.1 1334.0,706.3 1334.2,689.1 1334.5,713.7 1334.7,698.0 1335.0,722.4 1335.2,692.1 1335.5,709.9 1335.7,697.8 1336.0,720.4 1336.1,686.6 1336.1,657.8 1336.1,657.8 1336.1,686.6 1336.2,700.2 1336.5,717.9 1336.7,695.2 1337.0,721.3 1337.2,695.7 1337.5,714.6 1337.7,692.1 1338.0,712.9 1338.2,694.5 1338.5,711.8 1338.7,687.7 1339.0,706.4 1339.2,688.9 1339.5,708.4 1339.7,690.1 1340.0,711.6 1340.2,686.7 1340.5,714.0 1340.7,686.9 1341.0,703.7 1341.2,685.6 1341.5,706.1 1341.7,694.5 1342.0,710.6 1342.2,693.8 1342.5,709.3 1342.7,694.4 1343.0,710.5 1343.2,694.9 1343.5,706.9 1343.7,688.4 1344.0,706.9 1344.2,686.2 1344.5,706.6 1344.7,695.7 1345.0,712.1 1345.2,695.1 1345.5,715.3 1345.7,686.1 1346.0,709.0 1346.2,687.7 1346.5,703.9 1346.7,688.9 1347.0,704.4 1347.2,687.3 1347.5,707.0 1347.7,689.1 1348.0,710.6 1348.2,684.8 1348.5,709.4 1348.7,689.7 1349.0,711.7 1349.2,683.7 1349.5,709.8 1349.7,686.7 1350.0,706.4 1350.2,687.7 1350.5,704.8 1350.7,688.3 1351.0,712.6 1351.2,685.0 1351.3,699.9 1351.3,648.3 1351.4,648.3 1351.4,699.9 1351.5,704.0 1351.7,679.0 1352.0,702.2 1352.2,680.4 1352.5,699.3 1352.7,680.4 1353.0,701.6 1353.2,677.7 1353.5,693.1 1353.7,677.9 1354.0,704.6 1354.2,681.6 1354.5,695.3 1354.7,676.7 1355.0,695.2 1355.2,675.6 1355.5,695.5 1355.7,674.8 1356.0,703.6 1356.2,684.2 1356.5,704.7 1356.7,682.1 1357.0,701.5 1357.2,687.3 1357.5,704.0 1357.7,684.1 1358.0,701.8 1358.2,685.2 1358.5,703.8 1358.7,684.3 1359.0,700.6 1359.2,684.2 1359.5,703.8 1359.7,684.9 1360.0,705.0 1360.2,679.3 1360.5,698.1 1360.7,680.3 1361.0,707.5 1361.2,683.2 1361.5,701.2 1361.7,685.1 1362.0,704.3 1362.2,684.3 1362.5,701.5 1362.7,680.6 1363.0,702.4 1363.2,678.4 1363.5,706.8 1363.7,679.5 1364.0,695.7 1364.2,676.4 1364.5,698.4 1364.7,672.8 1364.8,699.9 1364.8,644.5 1364.8,644.5 1364.8,699.9 1365.0,695.5 1365.2,672.3 1365.5,692.5 1365.7,663.2 1366.0,683.1 1366.2,666.7 1366.5,689.9 1366.7,668.1 1367.0,690.2 1367.2,666.5 1367.5,690.7 1367.7,665.8 1368.0,691.1 1368.2,666.7 1368.5,683.7 1368.7,663.2 1369.0,683.9 1369.2,667.7 1369.5,693.7 1369.7,666.3 1370.0,689.1 1370.2,666.3 1370.5,683.2 1370.7,659.2 1371.0,678.1 1371.2,655.8 1371.5,684.0 1371.7,649.1 1372.0,676.2 1372.2,648.7 1372.5,671.4 1372.7,648.0 1373.0,675.5 1373.2,642.2 1373.5,665.7 1373.7,635.6 1374.0,661.1 1374.2,632.2 1374.5,648.9 1374.7,628.1 1375.0,648.8 1375.2,622.3 1375.5,647.3 1375.7,623.6 1376.0,647.4 1376.2,616.8 1376.5,637.7 1376.7,614.7 1376.8,635.5 1376.8,84.0 1376.9,84.0 1376.9,635.5 1377.0,639.7 1377.2,619.3 1377.5,649.0 1377.7,622.2 1378.0,638.5 1378.2,621.6 1378.5,643.5 1378.7,626.7 1379.0,653.6 1379.2,634.2 1379.5,651.1 1379.7,637.2 1380.0,651.3 1380.2,640.9 1380.5,663.0 1380.7,642.2 1381.0,660.6 1381.2,646.8 1381.5,668.4 1381.7,651.0 1382.0,667.9 1382.2,651.0 1382.5,677.0 1382.7,656.8 1383.0,676.1 1383.2,664.1 1383.5,683.1 1383.7,671.0 1384.0,691.6 1384.2,671.9 1384.5,695.4 1384.7,671.6 1385.0,699.6 1385.2,672.5 1385.5,690.0 1385.7,673.9 1386.0,695.6 1386.2,674.6 1386.5,696.3 1386.7,679.0 1387.0,696.6 1387.2,678.3 1387.5,693.8 1387.7,699.9 1387.7,650.2 1387.8,650.2 1387.8,699.9 1387.7,675.2 1388.0,700.1 1388.2,680.1 1388.5,704.9 1388.7,684.5 1389.0,704.3 1389.2,683.4 1389.5,712.0 1389.7,683.8 1390.0,710.3 1390.2,686.2 1390.5,717.5 1390.7,688.1 1391.0,706.5 1391.2,685.4 1391.5,706.0 1391.7,685.9 1392.0,713.5 1392.2,684.3 1392.5,706.2 1392.7,686.5 1393.0,704.3 1393.2,684.6 1393.5,705.9 1393.7,688.2 1394.0,706.1 1394.2,685.7 1394.5,706.0 1394.7,689.5 1395.0,714.4 1395.2,692.4 1395.5,712.2 1395.7,688.7 1396.0,715.2 1396.2,690.7 1396.5,710.0 1396.7,689.7 1397.0,719.5 1397.2,687.8 1397.5,712.6 1397.7,699.9 1397.7,642.6 1397.7,642.6 1397.7,699.9 1397.7,684.5 1398.0,712.6 1398.2,681.5 1398.5,707.5 1398.7,684.8 1399.0,707.8 1399.2,688.3 1399.5,722.0 1399.7,689.1 1400.0,711.9 1400.2,686.5 1400.5,713.8 1400.7,684.0 1401.0,708.6 1401.2,688.2 1401.5,713.7 1401.7,688.2 1402.0,718.8 1402.2,692.2 1402.5,720.8 1402.7,687.6 1403.0,715.4 1403.2,688.3 1403.5,715.1 1403.7,690.0 1404.0,716.0 1404.2,686.8 1404.5,712.3 1404.7,691.4 1405.0,713.2 1405.2,692.9 1405.5,712.2 1405.7,691.6 1406.0,720.9 1406.2,694.4 1406.5,719.7 1406.7,691.2 1406.8,680.9 1406.8,652.1 1406.8,652.1 1406.8,680.9 1407.0,719.6 1407.2,690.2 1407.5,715.4 1407.7,696.6 1408.0,723.2 1408.2,693.6 1408.5,724.3 1408.7,686.5 1409.0,724.2 1409.2,690.0 1409.5,725.9 1409.7,690.4 1410.0,714.2 1410.2,689.3 1410.5,717.0 1410.7,689.5 1411.0,717.5 1411.2,692.5 1411.5,728.4 1411.7,691.6 1412.0,721.9 1412.2,690.0 1412.5,722.6 1412.7,692.5 1413.0,717.8 1413.2,693.9 1413.5,722.5 1413.7,691.0 1414.0,727.2 1414.2,692.3 1414.5,720.7 1414.7,692.8 1415.0,721.6 1415.2,689.7 1415.3,699.9 1415.3,671.0 1415.3,671.0 1415.3,699.9 1415.5,721.5 1415.7,694.9 1416.0,722.1 1416.2,698.9 1416.5,728.8 1416.7,695.6 1417.0,725.2 1417.2,697.3 1417.5,727.0 1417.7,698.7 1418.0,728.3 1418.2,700.3 1418.5,736.8 1418.7,696.5 1419.0,728.7 1419.2,696.8 1419.5,733.2 1419.7,698.2 1420.0,727.9 1420.2,699.9 1420.5,736.6 1420.7,699.3 1421.0,734.1 1421.2,694.0 1421.5,734.8 1421.7,700.5 1422.0,732.4 1422.2,695.8 1422.5,727.3 1422.7,696.9 1423.0,729.8 1423.1,701.0 1423.1,672.2 1423.2,672.2 1423.2,701.0 1423.2,696.2 1423.5,732.0 1423.7,698.3 1424.0,731.7 1424.2,689.5 1424.5,728.4 1424.7,692.8 1425.0,727.0 1425.2,692.1 1425.5,727.7 1425.7,687.9 1426.0,727.5 1426.2,689.4 1426.5,723.6 1426.7,690.7 1427.0,724.0 1427.2,689.8 1427.5,731.8 1427.7,694.7 1428.0,729.5 1428.2,697.2 1428.5,730.9 1428.7,693.9 1429.0,728.0 1429.2,696.8 1429.5,733.8 1429.7,693.7 1430.0,735.6 1430.2,699.0 1430.5,735.0 1430.5,701.8 1430.5,672.9 1430.6,672.9 1430.6,701.8 1430.7,696.5 1431.0,739.0 1431.2,700.2 1431.5,740.5 1431.7,696.6 1432.0,733.6 1432.2,696.7 1432.5,736.7 1432.7,693.5 1433.0,732.7 1433.2,688.4 1433.5,725.6 1433.7,693.2 1434.0,732.8 1434.2,692.2 1434.5,734.5 1434.7,693.8 1435.0,729.4 1435.2,695.8 1435.5,733.6 1435.7,692.3 1436.0,737.4 1436.2,697.6 1436.5,734.4 1436.7,700.6 1437.0,738.6 1437.2,690.2 1437.5,739.1 1437.7,699.7 1438.0,739.5 1438.2,700.2 1438.5,739.2 1438.7,705.0 1439.0,738.1 1439.2,702.2 1439.5,741.0 1439.7,700.0 1440.0,751.2 1440.2,701.5 1440.5,735.9 1440.7,695.2 1441.0,733.0 1441.2,694.7 1441.5,737.4 1441.7,696.0 1442.0,730.5 1442.2,694.6 1442.5,731.2 1442.7,689.6 1443.0,725.8 1443.2,692.4 1443.5,734.7 1443.7,688.9 1444.0,729.8 1444.2,689.8 1444.5,731.9 1444.7,692.5 1445.0,731.6 1445.2,689.7 1445.5,730.1 1445.7,692.7 1446.0,735.4 1446.2,690.5 1446.5,737.4 1446.7,692.6 1447.0,731.2 1447.2,694.0 1447.5,736.5 1447.7,690.6 1448.0,730.8 1448.2,688.7 1448.5,736.6 1448.7,695.6 1449.0,740.2 1449.2,697.1 1449.5,736.1 1449.7,696.1 1450.0,739.8 1450.1,715.0 1450.1,686.2 1450.2,686.2 1450.2,715.0 1450.2,698.8 1450.5,737.6 1450.7,696.3 1451.0,740.2 1451.2,694.5 1451.5,738.1 1451.7,698.6 1452.0,745.3 1452.2,698.6 1452.5,745.7 1452.7,696.7 1453.0,750.5 1453.2,696.1 1453.5,742.6 1453.7,694.4 1454.0,738.5 1454.2,693.6 1454.5,737.3 1454.7,694.8 1455.0,738.7 1455.2,693.4 1455.5,748.1 1455.7,695.8 1456.0,737.8 1456.0,699.9 1456.0,506.3 1456.0,506.3 1456.0,699.9 1456.2,693.4 1456.5,745.5 1456.7,691.8 1457.0,738.2 1457.2,695.7 1457.5,741.1 1457.7,694.9 1458.0,747.7 1458.2,700.7 1458.5,742.0 1458.7,698.0 1459.0,744.1 1459.2,694.8 1459.5,740.1 1459.7,699.0 1460.0,749.1 1460.2,699.8 1460.5,743.7 1460.7,701.8 1461.0,750.1 1461.2,701.6 1461.5,747.1 1461.7,705.4 1462.0,746.8 1462.2,698.6 1462.5,751.2 1462.7,703.9 1463.0,750.9 1463.2,708.5 1463.5,758.5 1463.7,705.0 1464.0,753.6 1464.2,703.5 1464.5,752.5 1464.7,703.0 1465.0,747.8 1465.2,701.5 1465.5,756.5 1465.7,701.8 1466.0,746.9 1466.2,697.9 1466.5,748.3 1466.7,702.3 1467.0,747.5 1467.2,702.4 1467.5,742.3 1467.7,695.7 1468.0,743.4 1468.2,697.0 1468.5,747.4 1468.7,701.8 1469.0,748.3 1469.2,698.3 1469.5,745.2 1469.7,700.5 1470.0,745.2 1470.2,695.7 1470.5,742.5 1470.7,693.2 1471.0,745.4 1471.2,702.2 1471.5,745.6 1471.7,699.0 1472.0,743.0 1472.2,699.6 1472.5,748.7 1472.7,702.0 1473.0,748.5 1473.2,700.0 1473.5,753.6 1473.7,706.5 1474.0,760.0 1474.2,705.3 1474.5,750.9 1474.7,707.1 1475.0,756.1 1475.2,698.4 1475.5,747.0 1475.7,701.4 1476.0,750.7 1476.2,701.9 1476.5,756.1 1476.7,702.3 1477.0,748.5 1477.2,702.6 1477.5,753.4 1477.7,704.8 1478.0,748.0 1478.2,704.2 1478.5,747.8 1478.7,696.1 1479.0,745.3 1479.2,698.2 1479.5,750.3 1479.7,701.2 1480.0,749.9 1480.2,700.9 1480.5,745.9 1480.7,699.8 1481.0,752.4 1481.2,700.0 1481.5,746.1 1481.7,700.5 1482.0,749.0 1482.2,702.7 1482.5,746.4 1482.7,706.3 1483.0,754.0 1483.2,706.8 1483.5,755.2 1483.7,706.5 1484.0,750.5 1484.2,703.7 1484.5,750.7 1484.7,704.3 1485.0,753.3 1485.2,703.1 1485.5,753.7 1485.7,707.1 1486.0,752.5 1486.2,706.4 1486.5,753.5 1486.7,706.9 1487.0,753.3 1487.2,703.2 1487.5,754.2 1487.7,705.2 1488.0,751.3 1488.2,705.0 1488.5,750.9 1488.7,701.7 1489.0,750.2 1489.2,699.7 1489.5,751.3 1489.7,701.0 1490.0,743.9 1490.2,700.1 1490.5,751.2 1490.7,699.0 1491.0,747.6 1491.2,704.4 1491.5,748.0 1491.7,699.6 1492.0,743.5 1492.2,702.7 1492.5,749.2 1492.7,701.5 1493.0,763.2 1493.2,704.1 1493.5,745.8 1493.7,696.5 1494.0,745.9 1494.2,694.3 1494.5,742.5 1494.7,692.0 1495.0,741.3 1495.2,691.8 1495.5,737.7 1495.7,691.9 1496.0,741.7 1496.2,689.7 1496.5,741.5 1496.7,692.7 1497.0,744.8 1497.2,688.6 1497.5,740.7 1497.7,693.6 1498.0,743.0 1498.2,690.4 1498.5,742.2 1498.7,690.4 1499.0,743.5 1499.2,692.5 1499.5,742.3 1499.7,691.4 1500.0,736.4 1500.2,690.9 1500.5,741.4 1500.7,694.7 1501.0,740.7 1501.2,695.4 1501.5,744.3 1501.7,694.6 1502.0,742.2 1502.2,694.7 1502.3,699.9 1502.3,437.4 1502.4,437.4 1502.4,699.9 1502.5,747.0 1502.7,702.3 1503.0,754.5 1503.2,705.3 1503.5,754.3 1503.7,705.2 1504.0,750.8 1504.2,707.3 1504.5,753.9 1504.7,708.7 1505.0,751.6 1505.2,708.2 1505.5,762.9 1505.7,702.6 1506.0,753.0 1506.2,704.9 1506.5,753.2 1506.7,703.3 1507.0,749.6 1507.2,694.8 1507.5,749.4 1507.7,699.0 1508.0,747.2 1508.2,701.2 1508.5,748.3 1508.7,698.7 1509.0,746.3 1509.2,693.5 1509.5,746.7 1509.7,699.1 1510.0,745.8 1510.2,695.0 1510.5,749.0 1510.7,693.5 1511.0,741.5 1511.2,695.5 1511.5,744.9 1511.7,693.5 1512.0,742.5 1512.2,695.5 1512.5,741.7 1512.7,692.7 1513.0,749.9 1513.2,696.3 1513.5,751.8 1513.7,694.8 1514.0,741.9 1514.2,700.7 1514.5,758.5 1514.7,702.1 1515.0,747.3 1515.2,700.3 1515.5,754.6 1515.7,706.3 1516.0,750.0 1516.2,703.6 1516.5,753.1 1516.7,705.5 1517.0,753.0 1517.2,704.7 1517.5,761.0 1517.7,705.1 1518.0,769.7 1518.2,702.0 1518.5,750.2 1518.7,704.8 1519.0,751.6 1519.2,707.6 1519.5,752.7 1519.7,710.5 1520.0,759.4 1520.2,704.0 1520.5,759.5 1520.7,705.0 1521.0,754.0 1521.2,707.4 1521.5,760.6 1521.7,708.3 1522.0,757.7 1522.2,709.1 1522.5,754.4 1522.7,706.0 1523.0,754.0 1523.2,701.1 1523.5,755.2 1523.7,695.2 1524.0,743.5 1524.2,701.4 1524.5,751.7 1524.7,701.3 1525.0,751.1 1525.2,698.1 1525.5,750.1 1525.7,700.2 1526.0,746.3 1526.2,698.9 1526.5,748.5 1526.7,703.3 1527.0,755.8 1527.2,701.4 1527.5,756.2 1527.7,700.8 1528.0,752.9 1528.2,705.0 1528.5,753.2 1528.7,704.9 1529.0,748.6 1529.2,703.4 1529.5,752.5 1529.7,703.5 1530.0,751.5 1530.2,702.6 1530.5,758.8 1530.7,702.9 1531.0,759.4 1531.2,703.8 1531.5,752.5 1531.7,702.6 1532.0,757.8 1532.2,704.6 1532.5,756.9 1532.7,706.1 1533.0,751.8 1533.2,708.7 1533.5,758.0 1533.7,704.7 1534.0,755.9 1534.2,700.9 1534.5,753.6 1534.7,699.2 1535.0,749.9 1535.2,699.9 1535.2,502.9 1535.2,502.9 1535.2,699.9 1535.2,701.1 1535.5,752.0 1535.7,700.7 1536.0,746.5 1536.2,701.2 1536.5,752.8 1536.7,700.5 1537.0,748.2 1537.2,696.4 1537.5,744.9 1537.7,696.3 1538.0,742.9 1538.2,693.3 1538.5,745.9 1538.7,698.1 1539.0,754.4 1539.2,702.1 1539.5,746.4 1539.7,701.2 1540.0,753.6 1540.2,703.8 1540.5,749.3 1540.7,700.5 1541.0,748.6 1541.2,705.6 1541.5,754.9 1541.7,702.4 1542.0,756.0 1542.2,704.4 1542.5,755.2 1542.7,701.1 1543.0,751.8 1543.2,699.5 1543.5,753.0 1543.7,702.1 1544.0,750.1 1544.2,702.1 1544.5,749.0 1544.7,702.6 1545.0,754.2 1545.2,701.5 1545.5,753.9 1545.7,701.9 1546.0,752.4 1546.2,701.6 1546.5,750.5 1546.7,704.1 1547.0,756.2 1547.2,703.7 1547.5,751.3 1547.7,697.9 1548.0,748.6 1548.2,700.6 1548.5,754.3 1548.7,698.5 1549.0,748.9 1549.2,699.9 1549.5,745.8 1549.7,694.1 1550.0,747.3 1550.2,697.7 1550.5,752.4 1550.7,698.5 1551.0,754.8 1551.2,700.8 1551.5,750.3 1551.7,698.0 1552.0,757.9 1552.2,703.7 1552.5,755.3 1552.7,704.5 1553.0,755.6 1553.2,702.7 1553.5,755.0 1553.7,709.3 1554.0,759.8 1554.2,708.5 1554.5,760.8 1554.7,704.7 1555.0,757.3 1555.2,707.6 1555.5,757.3 1555.7,701.5 1556.0,757.5 1556.2,706.8 1556.5,753.2 1556.7,706.7 1557.0,760.4 1557.2,706.4 1557.5,755.2 1557.7,704.8 1558.0,756.7 1558.2,705.7 1558.5,758.3 1558.7,705.0 1559.0,756.3 1559.2,704.7 1559.5,754.6 1559.7,704.1 1560.0,752.0 1560.2,703.4 1560.5,754.7 1560.7,699.9 1560.7,466.5 1560.7,466.5 1560.7,699.9 1560.7,707.2 1561.0,757.2 1561.2,706.8 1561.5,766.4 1561.7,705.5 1562.0,753.8 1562.2,707.1 1562.5,757.7 1562.7,705.7 1563.0,756.0 1563.2,708.5 1563.5,762.3 1563.7,709.3 1564.0,756.4 1564.2,705.0 1564.5,757.9 1564.7,702.1 1565.0,754.9 1565.2,701.7 1565.5,760.3 1565.7,701.2 1566.0,754.4 1566.2,700.5 1566.5,753.4 1566.7,703.2 1567.0,751.5 1567.2,701.4 1567.5,757.5 1567.7,702.6 1568.0,758.3 1568.2,706.8 1568.5,756.4 1568.7,701.8 1569.0,755.5 1569.2,702.3 1569.5,749.9 1569.7,697.2 1570.0,755.1 1570.2,701.5 1570.5,754.4 1570.7,700.5 1571.0,753.1 1571.2,703.4 1571.5,754.4 1571.7,700.0 1572.0,755.7 1572.2,701.4 1572.5,752.9 1572.7,699.2 1573.0,748.0 1573.2,703.7 1573.5,750.1 1573.7,701.9 1574.0,756.8 1574.2,703.9 1574.5,752.4 1574.7,698.5 1575.0,752.0 1575.2,698.2 1575.5,748.5 1575.7,698.2 1576.0,753.3 1576.2,701.0 1576.5,754.4 1576.7,702.9 1577.0,754.9 1577.2,700.9 1577.5,749.9 1577.7,697.2 1578.0,754.4 1578.2,698.6 1578.5,752.0 1578.7,703.4 1579.0,751.4 1579.2,703.3 1579.5,756.3 1579.7,700.6 1580.0,753.6 1580.2,702.5 1580.5,752.1 1580.7,699.9 1581.0,753.7 1581.2,703.6 1581.5,756.0 1581.5,699.9 1581.5,560.8 1581.5,560.8 1581.5,699.9 1581.7,702.8 1582.0,750.7 1582.2,699.7 1582.5,757.8 1582.7,700.3 1583.0,758.5 1583.2,705.9 1583.5,760.4 1583.7,698.9 1584.0,757.5 1584.2,705.6 1584.5,753.6 1584.7,709.9 1585.0,766.2 1585.2,703.3 1585.5,763.7 1585.7,709.8 1586.0,761.5 1586.2,708.4 1586.5,759.0 1586.7,709.6 1587.0,764.1 1587.2,705.8 1587.5,755.2 1587.7,708.2 1588.0,755.4 1588.2,709.9 1588.5,761.0 1588.7,710.0 1589.0,761.4 1589.2,707.8 1589.5,762.9 1589.7,705.6 1590.0,763.0 1590.2,703.8 1590.5,754.2 1590.7,702.3 1591.0,754.7 1591.2,701.4 1591.5,752.7 1591.7,702.6 1592.0,757.8 1592.2,702.1 1592.5,754.2 1592.7,703.2 1593.0,752.6 1593.2,701.5 1593.5,755.9 1593.7,703.4 1594.0,750.5 1594.2,699.1 1594.5,753.7 1594.7,702.4 1595.0,760.5 1595.2,702.8 1595.5,752.9 1595.7,702.0 1596.0,758.8 1596.2,699.8 1596.5,754.5 1596.7,700.0 1597.0,751.8 1597.2,695.7 1597.5,750.3 1597.7,695.2 1598.0,749.9 1598.2,698.8 1598.5,750.5 1598.7,694.8 1599.0,747.6 1599.1,699.9 1599.1,471.8 1599.1,471.8 1599.1,699.9 1599.2,696.7 1599.5,749.8 1599.7,695.0 1600.0,752.3 1600.2,696.3 1600.5,753.6 1600.7,698.4 1601.0,749.4 1601.2,698.7 1601.5,751.1 1601.7,703.6 1602.0,752.8 1602.2,703.0 1602.5,755.1 1602.7,704.6 1603.0,757.6 1603.2,705.9 1603.5,755.7 1603.7,703.3 1604.0,755.1 1604.2,704.1 1604.5,758.3 1604.7,707.8 1605.0,761.2 1605.2,707.5 1605.5,760.2 1605.7,701.5 1606.0,756.8 1606.2,704.4 1606.5,759.5 1606.7,701.4 1607.0,754.9 1607.2,698.6 1607.5,747.3 1607.7,701.4 1608.0,756.9 1608.2,699.5 1608.5,756.2 1608.7,700.0 1609.0,751.2 1609.2,700.4 1609.5,754.1 1609.7,698.5 1610.0,757.3 1610.2,694.4 1610.5,757.0 1610.7,700.0 1611.0,755.2 1611.2,699.9 1611.5,747.5 1611.7,698.4 1612.0,762.2 1612.2,694.2 1612.5,747.0 1612.7,702.2 1613.0,751.1 1613.2,695.3 1613.5,747.8 1613.7,697.9 1614.0,752.5 1614.2,695.9 1614.3,699.9 1614.3,515.8 1614.4,515.8 1614.4,699.9 1614.5,760.2 1614.7,696.5 1615.0,748.0 1615.2,701.3 1615.5,756.1 1615.7,699.1 1616.0,750.8 1616.2,697.7 1616.5,749.0 1616.7,699.5 1617.0,748.7 1617.2,701.1 1617.5,757.4 1617.7,704.2 1618.0,756.6 1618.2,707.4 1618.5,756.9 1618.7,703.0 1619.0,757.8 1619.2,701.0 1619.5,757.9 1619.7,704.8 1620.0,759.2 1620.2,704.3 1620.5,757.4 1620.7,701.9 1621.0,756.5 1621.2,701.6 1621.5,749.7 1621.7,701.3 1622.0,750.6 1622.2,701.0 1622.5,751.3 1622.7,698.7 1623.0,755.1 1623.2,700.9 1623.5,751.0 1623.7,701.5 1624.0,751.5 1624.2,702.8 1624.5,753.8 1624.7,707.6 1625.0,757.2 1625.2,704.9 1625.5,758.4 1625.7,701.0 1626.0,760.4 1626.2,704.1 1626.5,757.5 1626.7,704.4 1627.0,756.8 1627.2,704.4 1627.5,754.2 1627.7,705.7 1627.8,699.9 1627.8,549.8 1627.8,549.8 1627.8,699.9 1628.0,755.7 1628.2,701.4 1628.5,761.3 1628.7,700.4 1629.0,749.0 1629.2,704.8 1629.5,757.3 1629.7,700.5 1630.0,757.5 1630.2,700.6 1630.5,757.4 1630.7,703.7 1631.0,756.0 1631.2,706.2 1631.5,757.2 1631.7,698.6 1632.0,756.7 1632.2,701.3 1632.5,751.8 1632.7,704.7 1633.0,760.7 1633.2,701.9 1633.5,758.0 1633.7,705.1 1634.0,759.4 1634.2,704.0 1634.5,763.2 1634.7,704.5 1635.0,753.6 1635.2,698.8 1635.5,755.1 1635.7,699.6 1636.0,762.5 1636.2,700.6 1636.5,755.7 1636.7,697.6 1637.0,760.1 1637.2,700.5 1637.5,754.3 1637.7,700.6 1638.0,755.0 1638.2,701.0 1638.5,756.4 1638.7,702.8 1639.0,759.5 1639.2,701.5 1639.5,752.0 1639.7,704.7 1639.8,699.9 1639.8,497.6 1639.9,497.6 1639.9,699.9 1640.0,754.6 1640.2,705.4 1640.5,769.4 1640.7,702.9 1641.0,751.6 1641.2,704.7 1641.5,756.4 1641.7,702.9 1642.0,756.8 1642.2,702.1 1642.5,755.4 1642.7,704.5 1643.0,760.0 1643.2,700.8 1643.5,763.7 1643.7,697.4 1644.0,755.9 1644.2,701.3 1644.5,762.8 1644.7,705.5 1645.0,758.0 1645.2,699.3 1645.5,759.2 1645.7,701.8 1646.0,753.8 1646.2,704.2 1646.5,757.0 1646.7,703.4 1647.0,755.5 1647.2,702.5 1647.5,759.0 1647.7,703.1 1648.0,758.3 1648.2,703.1 1648.5,757.2 1648.7,702.6 1649.0,755.9 1649.2,702.6 1649.5,755.6 1649.7,694.0 1650.0,752.9 1650.2,700.5 1650.5,752.5 1650.7,699.9 1650.7,505.5 1650.8,505.5 1650.8,699.9 1650.7,698.2 1651.0,752.7 1651.2,699.1 1651.5,749.1 1651.7,698.4 1652.0,749.5 1652.2,697.3 1652.5,750.5 1652.7,698.7 1653.0,754.3 1653.2,697.1 1653.5,747.7 1653.7,699.1 1654.0,752.6 1654.2,700.2 1654.5,752.3 1654.7,706.4 1655.0,759.8 1655.2,707.4 1655.5,760.7 1655.7,704.2 1656.0,757.7 1656.2,704.7 1656.5,761.9 1656.7,701.9 1657.0,759.4 1657.2,705.5 1657.5,753.7 1657.7,703.0 1658.0,760.3 1658.2,704.4 1658.5,757.6 1658.7,697.6 1659.0,754.7 1659.2,702.5 1659.5,758.3 1659.7,703.0 1660.0,754.0 1660.2,703.2 1660.5,755.9 1660.7,699.9 1660.7,549.5 1660.7,549.5 1660.7,699.9 1660.7,704.2 1661.0,758.7 1661.2,703.8 1661.5,760.5 1661.7,700.6 1662.0,758.1 1662.2,700.3 1662.5,754.0 1662.7,704.9 1663.0,759.5 1663.2,703.2 1663.5,756.6 1663.7,703.4 1664.0,758.3 1664.2,700.9 1664.5,758.3 1664.7,702.1 1665.0,756.6 1665.2,698.9 1665.5,750.5 1665.7,697.3 1666.0,750.3 1666.2,695.7 1666.5,746.9 1666.7,691.1 1667.0,753.9 1667.2,696.9 1667.5,748.5 1667.7,695.3 1668.0,750.5 1668.2,697.4 1668.5,753.1 1668.7,696.2 1669.0,753.4 1669.2,698.0 1669.5,751.3 1669.7,699.4 1669.8,699.9 1669.8,482.4 1669.8,482.4 1669.8,699.9 1670.0,754.5 1670.2,698.8 1670.5,756.5 1670.7,701.1 1671.0,753.5 1671.2,702.8 1671.5,751.4 1671.7,700.9 1672.0,761.1 1672.2,702.9 1672.5,759.4 1672.7,700.4 1673.0,762.7 1673.2,704.6 1673.5,756.6 1673.7,705.4 1674.0,757.2 1674.2,702.9 1674.5,762.7 1674.7,704.6 1675.0,759.1 1675.2,704.0 1675.5,756.3 1675.7,706.1 1676.0,762.3 1676.2,701.3 1676.5,757.3 1676.7,703.8 1677.0,755.7 1677.2,700.0 1677.5,757.8 1677.7,702.6 1678.0,758.5 1678.2,701.4 1678.3,699.9 1678.3,487.4 1678.3,487.4 1678.3,699.9 1678.5,755.0 1678.7,698.9 1679.0,756.2 1679.2,701.5 1679.5,761.3 1679.7,698.1 1680.0,751.4 1680.2,699.3 1680.5,750.7 1680.7,700.2 1681.0,754.8 1681.2,697.8 1681.5,752.6 1681.7,700.5 1682.0,756.0 1682.2,701.0 1682.5,766.4 1682.7,702.1 1683.0,759.0 1683.2,699.1 1683.5,752.6 1683.7,701.1 1684.0,753.6 1684.2,700.3 1684.5,757.5 1684.7,697.7 1685.0,760.3 1685.2,700.4 1685.5,757.1 1685.7,695.8 1686.0,750.0 1686.1,699.9 1686.1,500.6 1686.2,500.6 1686.2,699.9 1686.2,700.7 1686.5,757.8 1686.7,701.9 1687.0,757.4 1687.2,702.0 1687.5,756.8 1687.7,703.2 1688.0,756.5 1688.2,704.2 1688.5,758.5 1688.7,702.6 1689.0,753.8 1689.2,701.3 1689.5,764.6 1689.7,704.5 1690.0,756.8 1690.2,700.0 1690.5,752.1 1690.7,698.5 1691.0,754.6 1691.2,702.6 1691.5,761.2 1691.7,701.6 1692.0,763.9 1692.2,704.7 1692.5,765.4 1692.7,707.9 1693.0,761.4 1693.2,708.6 1693.5,769.4 1693.5,699.9 1693.5,505.5 1693.6,505.5 1693.6,699.9 1693.7,705.7 1694.0,769.6 1694.2,705.7 1694.5,766.3 1694.7,707.1 1695.0,762.2 1695.2,707.0 1695.5,762.6 1695.7,705.8 1696.0,761.8 1696.2,700.5 1696.5,763.0 1696.7,700.3 1697.0,755.1 1697.2,697.8 1697.5,753.2 1697.7,694.1 1698.0,749.7 1698.2,696.7 1698.5,756.5 1698.7,693.2 1699.0,754.0 1699.2,692.5 1699.5,746.4 1699.7,694.2 1700.0,746.5 1700.2,692.0 1700.4,699.9 1700.4,502.1 1700.5,502.1 1700.5,699.9 1700.5,749.6 1700.7,696.2 1701.0,746.9 1701.2,696.4 1701.5,755.0 1701.7,698.6 1702.0,756.8 1702.2,697.9 1702.5,752.1 1702.7,697.0 1703.0,750.9 1703.2,697.0 1703.5,756.5 1703.7,696.4 1704.0,753.8 1704.2,696.4 1704.5,758.6 1704.7,691.8 1705.0,756.0 1705.2,695.6 1705.5,756.2 1705.7,696.0 1706.0,747.2 1706.2,693.0 1706.5,752.1 1706.7,695.2 1707.0,757.9 1707.0,699.9 1707.0,511.6 1707.0,511.6 1707.0,699.9 1707.2,700.6 1707.5,755.7 1707.7,701.8 1708.0,760.2 1708.2,700.4 1708.5,754.0 1708.7,700.5 1709.0,762.7 1709.2,699.6 1709.5,773.8 1709.7,703.2 1710.0,758.6 1710.2,701.1 1710.5,761.2 1710.7,702.1 1711.0,757.0 1711.2,703.2 1711.5,754.6 1711.7,702.2 1712.0,758.6 1712.2,702.1 1712.5,754.6 1712.7,700.5 1713.0,757.1 1713.1,699.9 1713.1,482.8 1713.2,482.8 1713.2,699.9 1713.2,698.3 1713.5,754.8 1713.7,698.5 1714.0,755.5 1714.2,700.7 1714.5,756.2 1714.7,699.8 1715.0,759.1 1715.2,702.8 1715.5,754.0 1715.7,699.5 1716.0,760.8 1716.2,701.3 1716.5,765.5 1716.7,703.8 1717.0,763.8 1717.2,707.7 1717.5,764.2 1717.7,706.7 1718.0,767.2 1718.2,703.2 1718.5,758.5 1718.7,704.7 1719.0,763.8 1719.2,705.7 1719.5,760.1 1719.7,702.5 1720.0,758.8" stroke="#3b5a9c"/>
<polyline points="930.0,695.2 931.1,685.4 932.1,680.2 933.2,675.5 934.2,677.7 935.2,686.8 936.3,689.4 937.3,692.2 938.3,705.9 939.3,708.7 940.2,695.2 941.2,686.6 942.2,683.4 943.1,684.5 944.1,687.2 945.0,689.2 946.0,694.8 946.9,702.9 947.8,698.9 948.7,694.6 949.6,692.9 950.5,687.8 951.4,684.0 952.3,679.2 953.2,675.1 954.1,677.9 954.9,684.8 955.8,689.1 956.6,689.3 957.5,687.3 958.3,689.4 959.1,700.2 960.0,707.9 960.8,699.9 961.6,693.6 962.4,690.6 963.2,698.4 964.0,710.0 964.8,695.7 965.6,682.7 966.4,679.6 967.1,690.5 967.9,703.3 968.7,694.1 969.4,696.1 970.2,710.9 971.0,707.6 971.7,699.1 972.4,696.5 973.2,695.1 973.9,691.9 974.6,689.2 975.4,688.8 976.1,691.0 976.8,694.4 977.5,694.9 978.2,692.3 978.9,689.6 979.6,690.6 980.3,697.4 981.0,703.9 981.7,697.6 982.3,689.4 983.0,686.1 983.7,689.4 984.4,694.4 985.0,695.5 985.7,691.1 986.3,687.6 987.0,686.9 987.6,690.9 988.3,700.8 988.9,704.3 989.6,706.4 990.2,709.9 990.8,700.4 991.4,704.6 992.1,735.5 992.7,713.0 993.3,693.9 993.9,692.1 994.5,701.2 995.1,702.3 995.7,698.8 996.3,702.3 996.9,703.7 997.5,702.1 998.1,702.6 998.7,698.0 999.3,693.7 999.9,695.5 1000.5,694.6 1001.0,693.7 1001.6,697.6 1002.2,701.6 1002.7,700.5 1003.3,698.0 1003.9,701.5 1004.4,706.2 1005.0,699.1 1005.5,696.0 1006.1,696.1 1006.6,692.8 1007.2,691.7 1007.7,693.9 1008.3,700.3 1008.8,711.7 1009.3,714.3 1009.9,713.5 1010.4,714.2 1010.9,700.6 1011.5,690.9 1012.0,691.5 1012.5,695.2 1013.0,692.9 1013.5,693.8 1014.1,703.6 1014.6,705.8 1015.1,699.6 1015.6,702.9 1016.1,706.8 1016.6,698.9 1017.1,697.2 1017.6,695.7 1018.1,694.7 1018.6,696.4 1019.1,701.1 1019.6,700.6 1020.1,700.3 1020.5,698.7 1021.0,693.5 1021.5,690.9 1022.0,693.8 1022.5,699.8 1022.9,699.6 1023.4,690.1 1023.9,687.5 1024.4,693.7 1024.8,703.9 1025.3,698.4 1025.8,689.1 1026.2,687.3 1026.7,689.4 1027.1,692.4 1027.6,700.2 1028.0,708.5 1028.5,702.7 1028.9,704.0 1029.4,725.0 1029.8,720.8 1030.3,701.4 1030.7,694.4 1031.2,696.0 1031.6,702.4 1032.1,708.3 1032.5,710.2 1032.9,714.3 1033.4,714.7 1033.8,704.4 1034.2,700.2 1034.7,696.8 1035.1,693.6 1035.5,692.6 1035.9,690.8 1036.4,689.0 1036.8,685.7 1037.2,683.6 1037.6,688.8 1038.0,698.9 1038.4,705.8 1038.9,718.4 1039.3,720.9 1039.7,714.9 1040.1,715.8 1040.5,712.1 1040.9,707.6 1041.3,710.8 1041.7,718.0 1042.1,721.8 1042.5,719.0 1042.9,710.9 1043.3,704.9 1043.7,702.3 1044.1,703.0 1044.5,703.7 1044.9,708.1 1045.3,712.3 1045.7,709.8 1046.1,705.5 1046.4,701.9 1046.8,701.7 1047.2,705.4 1047.6,702.8 1048.0,696.4 1048.4,694.3 1048.7,697.4 1049.1,701.2 1049.5,703.2 1049.9,703.4 1050.2,702.4 1050.6,700.3 1051.0,700.4 1051.4,700.9 1051.7,698.2 1052.1,694.5 1052.5,696.8 1052.8,704.8 1053.2,709.7 1053.6,714.7 1053.9,720.5 1054.3,723.3 1054.6,721.0 1055.0,717.7 1055.4,713.9 1055.7,709.5 1056.1,707.9 1056.4,705.1 1056.8,707.0 1057.1,710.7 1057.5,708.7 1057.8,715.7 1058.2,723.4 1058.5,717.2 1058.9,716.3 1059.2,720.2 1059.6,720.1 1059.9,717.4 1060.3,713.9 1060.6,701.4 1060.9,692.7 1061.3,690.0 1061.6,695.2 1062.0,708.7 1062.3,715.6 1062.6,710.9 1063.0,713.9 1063.3,715.6 1063.6,705.1 1064.0,700.6 1064.3,704.4 1064.6,711.1 1065.0,717.1 1065.3,719.6 1065.6,715.2 1065.9,709.7 1066.3,701.6 1066.6,696.6 1066.9,697.7 1067.2,702.6 1067.6,708.0 1067.9,717.6 1068.2,718.4 1068.5,711.8 1068.8,714.2 1069.1,713.8 1069.5,708.9 1069.8,709.6 1070.1,710.0 1070.4,713.0 1070.7,718.9 1071.0,712.8 1071.3,701.9 1071.7,696.4 1072.0,695.4 1072.3,697.4 1072.6,700.9 1072.9,702.4 1073.2,705.0 1073.5,700.8 1073.8,694.0 1074.1,697.9 1074.4,711.8 1074.7,712.8 1075.0,705.6 1075.3,704.9 1075.6,711.1 1075.9,719.3 1076.2,711.3 1076.5,704.6 1076.8,705.3 1077.1,704.7 1077.4,703.8 1077.7,708.3 1078.0,715.9 1078.3,712.5 1078.6,700.6 1078.9,697.5 1079.1,703.7 1079.4,710.6 1079.7,706.8 1080.0,702.1 1080.3,700.4 1080.6,702.0 1080.9,704.2 1081.2,704.9 1081.4,708.4 1081.7,721.6 1082.0,735.1 1082.3,710.5 1082.6,698.2 1082.9,697.8 1083.1,701.7 1083.4,702.6 1083.7,700.3 1084.0,695.5 1084.3,694.4 1084.5,700.7 1084.8,706.2 1085.1,696.4 1085.4,689.7 1085.6,696.2 1085.9,707.4 1086.2,706.4 1086.5,710.0 1086.7,726.4 1087.0,722.5 1087.3,718.8 1087.5,715.0 1087.8,704.1 1088.1,697.4 1088.3,694.8 1088.6,696.6 1088.9,705.0 1089.1,719.3 1089.4,725.3 1089.7,706.1 1089.9,697.7 1090.2,698.2 1090.5,699.8 1090.7,704.0 1091.0,715.8 1091.2,715.0 1091.5,695.8 1091.8,686.8 1092.0,691.9 1092.3,706.9 1092.5,709.9 1092.8,700.9 1093.1,699.0 1093.3,701.5 1093.6,704.7 1093.8,708.2 1094.1,711.8 1094.3,713.8 1094.6,710.7 1094.8,707.2 1095.1,704.5 1095.4,704.0 1095.6,710.2 1095.9,714.2 1096.1,702.3 1096.4,694.5 1096.6,694.6 1096.9,699.9 1097.1,707.8 1097.3,712.5 1097.6,713.7 1097.8,714.1 1098.1,712.6 1098.3,712.6 1098.6,712.9 1098.8,709.3 1099.1,706.8 1099.3,711.0 1099.6,719.1 1099.8,724.1 1100.0,727.2 1100.3,722.2 1100.5,715.5 1100.8,716.9 1101.0,713.9 1101.2,705.8 1101.5,706.5 1101.7,714.2 1102.0,712.2 1102.2,711.4 1102.4,714.3 1102.7,707.6 1102.9,705.6 1103.1,711.2 1103.4,706.6 1103.6,698.6 1103.8,698.4 1104.1,704.1 1104.3,714.8 1104.5,723.2 1104.8,712.4 1105.0,701.6 1105.2,699.3 1105.5,704.6 1105.7,710.1 1105.9,716.8 1106.2,733.5 1106.4,729.7 1106.6,713.6 1106.8,709.9 1107.1,714.0 1107.3,709.2 1107.5,698.0 1107.7,693.9 1108.0,696.7 1108.2,698.1 1108.4,697.3 1108.6,704.5 1108.9,714.0 1109.1,711.7 1109.3,708.6 1109.5,709.0 1109.8,710.2 1110.0,708.5 1110.2,708.6 1110.4,713.0 1110.6,718.4 1110.9,716.0 1111.1,709.9 1111.3,707.0 1111.5,707.4 1111.7,707.0 1112.0,712.4 1112.2,733.8 1112.4,756.6 1112.6,726.1 1112.8,714.4 1113.0,720.1 1113.3,722.7 1113.5,707.7 1113.7,704.7 1113.9,699.9 1114.1,706.3 1114.3,707.1 1114.5,716.1 1114.8,724.5 1115.0,717.7 1115.2,706.7 1115.4,698.8 1115.6,698.7 1115.8,712.5 1116.0,738.0 1116.2,715.3 1116.4,711.0 1116.6,719.0 1116.9,723.3 1117.1,720.5 1117.3,712.4 1117.5,710.6 1117.7,713.9 1117.9,716.4 1118.1,713.1 1118.3,708.3 1118.5,705.3 1118.7,707.3 1118.9,713.1 1119.1,714.9 1119.3,712.3 1119.5,707.7 1119.7,701.6 1119.9,699.1 1120.1,700.8 1120.3,708.0 1120.6,711.3 1120.8,703.8 1121.0,696.8 1121.2,696.1 1121.4,699.6 1121.6,702.0 1121.8,703.7 1122.0,708.6 1122.2,718.2 1122.4,720.7 1122.6,718.0 1122.8,724.6 1122.9,725.6 1123.1,710.0 1123.3,702.5 1123.5,707.7 1123.7,722.2 1123.9,722.9 1124.1,714.9 1124.3,712.1 1124.5,716.7 1124.7,691.4 1125.0,703.0 1125.2,698.0 1125.5,706.1 1125.7,708.7 1126.0,709.0 1126.2,699.9 1126.5,702.8 1126.7,707.8 1127.0,709.2 1127.2,704.3 1127.5,706.9 1127.7,705.7 1128.0,707.0 1128.2,711.1 1128.5,721.3 1128.7,706.4 1129.0,708.7 1129.2,714.2 1129.5,716.1 1129.7,706.9 1130.0,710.9 1130.2,713.3 1130.5,716.2 1130.7,710.4 1131.0,713.8 1131.2,711.6 1131.5,719.8 1131.7,710.2 1132.0,711.5 1132.2,697.1 1132.5,712.9 1132.7,703.2 1133.0,722.0 1133.2,702.9 1133.5,708.3 1133.7,701.9 1134.0,706.6 1134.2,696.9 1134.5,708.2 1134.7,716.9 1135.0,734.6 1135.2,708.4 1135.5,710.0 1135.7,712.1 1136.0,712.9 1136.2,699.4 1136.5,705.0 1136.7,714.6 1137.0,717.8 1137.2,710.5 1137.5,723.2 1137.7,715.5 1138.0,720.7 1138.2,712.6 1138.5,718.8 1138.7,708.4 1139.0,719.7 1139.2,712.9 1139.5,714.7 1139.7,712.3 1140.0,714.8 1140.2,709.2 1140.5,717.1 1140.7,715.6 1141.0,717.7 1141.2,713.1 1141.5,718.9 1141.7,705.0 1142.0,717.8 1142.2,705.6 1142.5,713.6 1142.7,711.3 1143.0,715.8 1143.2,709.9 1143.5,715.1 1143.7,704.6 1144.0,716.4 1144.2,705.2 1144.5,728.2 1144.7,707.0 1145.0,715.0 1145.2,708.5 1145.5,727.7 1145.7,705.3 1146.0,716.4 1146.2,709.5 1146.5,719.1 1146.7,713.5 1147.0,731.6 1147.2,712.2 1147.5,723.8 1147.7,703.4 1148.0,717.7 1148.2,701.2 1148.5,724.2 1148.7,705.5 1149.0,707.0 1149.2,710.4 1149.5,712.4 1149.7,699.5 1150.0,713.7 1150.2,703.6 1150.5,710.0 1150.7,706.7 1151.0,729.3 1151.2,703.4 1151.5,713.2 1151.7,700.7 1152.0,709.6 1152.2,704.7 1152.5,711.7 1152.7,703.9 1153.0,711.7 1153.2,702.4 1153.5,713.7 1153.7,706.6 1154.0,711.5 1154.2,703.5 1154.5,717.3 1154.7,702.6 1155.0,717.1 1155.2,704.9 1155.5,718.8 1155.7,714.5 1156.0,732.6 1156.2,704.8 1156.5,712.3 1156.7,697.3 1157.0,719.2 1157.2,699.4 1157.5,720.4 1157.7,705.0 1158.0,719.2 1158.2,706.1 1158.5,716.5 1158.7,708.0 1159.0,722.1 1159.2,712.3 1159.5,715.0 1159.7,716.9 1160.0,719.8 1160.1,716.9 1160.1,688.1 1160.2,688.1 1160.2,716.9 1160.2,714.9 1160.5,724.8 1160.7,711.4 1161.0,727.8 1161.2,707.0 1161.5,712.1 1161.7,704.4 1162.0,711.8 1162.2,708.2 1162.5,717.4 1162.7,704.9 1163.0,722.2 1163.2,709.4 1163.5,720.1 1163.7,698.4 1164.0,710.6 1164.2,708.8 1164.5,713.6 1164.7,705.8 1165.0,712.3 1165.2,702.2 1165.5,710.1 1165.7,705.3 1166.0,709.3 1166.2,712.9 1166.5,727.5 1166.7,714.0 1167.0,725.3 1167.2,719.0 1167.5,730.7 1167.7,711.8 1168.0,714.2 1168.2,707.7 1168.5,716.4 1168.7,716.7 1169.0,723.4 1169.2,717.4 1169.5,718.1 1169.7,711.6 1170.0,724.3 1170.2,710.5 1170.5,718.6 1170.7,710.5 1171.0,720.4 1171.2,712.6 1171.5,721.9 1171.7,715.2 1172.0,728.2 1172.2,710.1 1172.5,724.7 1172.7,714.2 1173.0,716.3 1173.2,709.8 1173.5,715.9 1173.7,713.8 1174.0,719.9 1174.2,710.1 1174.5,719.1 1174.7,709.2 1175.0,720.3 1175.2,711.3 1175.5,716.6 1175.7,705.7 1176.0,719.8 1176.2,695.8 1176.5,707.4 1176.7,699.5 1177.0,712.6 1177.2,701.6 1177.5,714.7 1177.7,704.2 1178.0,716.2 1178.2,706.7 1178.5,709.6 1178.7,709.3 1179.0,723.3 1179.2,702.7 1179.5,714.0 1179.7,700.8 1180.0,708.7 1180.2,700.7 1180.5,719.9 1180.7,700.6 1181.0,714.4 1181.2,702.5 1181.5,711.1 1181.7,702.8 1182.0,707.8 1182.2,699.9 1182.5,709.6 1182.7,694.9 1183.0,717.8 1183.2,703.3 1183.5,719.9 1183.7,703.3 1184.0,712.3 1184.2,715.5 1184.5,717.9 1184.7,705.9 1185.0,713.1 1185.2,701.4 1185.5,709.9 1185.7,708.5 1186.0,720.0 1186.2,705.2 1186.5,711.0 1186.7,694.3 1187.0,718.9 1187.2,703.3 1187.5,719.8 1187.7,702.4 1188.0,709.5 1188.2,694.1 1188.5,708.8 1188.7,702.4 1189.0,713.4 1189.2,695.8 1189.5,707.9 1189.7,697.7 1190.0,710.9 1190.2,701.2 1190.5,712.7 1190.7,703.2 1191.0,710.0 1191.2,704.1 1191.5,708.4 1191.7,704.1 1192.0,721.5 1192.2,705.2 1192.5,721.6 1192.7,708.1 1193.0,718.0 1193.2,698.3 1193.5,715.5 1193.7,703.5 1194.0,713.2 1194.2,701.5 1194.5,718.5 1194.7,703.9 1195.0,709.0 1195.2,702.8 1195.5,706.5 1195.7,704.1 1196.0,709.6 1196.2,701.0 1196.5,719.2 1196.7,702.6 1197.0,714.1 1197.2,703.9 1197.5,717.4 1197.5,716.2 1197.5,687.3 1197.5,687.3 1197.5,716.2 1197.7,700.9 1198.0,707.1 1198.2,705.6 1198.5,715.9 1198.7,703.4 1199.0,715.0 1199.2,702.2 1199.5,725.2 1199.7,698.9 1200.0,713.1 1200.2,703.7 1200.5,721.4 1200.7,704.7 1201.0,716.0 1201.2,702.4 1201.5,715.9 1201.7,703.7 1202.0,712.5 1202.2,701.9 1202.5,711.0 1202.7,701.6 1203.0,720.9 1203.2,706.7 1203.5,718.0 1203.7,712.4 1204.0,721.8 1204.2,706.1 1204.5,723.8 1204.7,706.1 1205.0,718.9 1205.2,704.2 1205.5,712.4 1205.7,699.4 1206.0,709.4 1206.2,701.2 1206.5,710.7 1206.7,700.1 1207.0,715.2 1207.2,704.4 1207.5,710.1 1207.7,702.4 1208.0,705.3 1208.2,697.0 1208.5,716.0 1208.7,709.1 1209.0,722.2 1209.2,702.9 1209.5,711.6 1209.7,713.6 1210.0,721.7 1210.2,716.0 1210.5,729.6 1210.7,711.9 1211.0,723.9 1211.2,711.0 1211.5,727.1 1211.7,709.4 1212.0,722.4 1212.2,715.0 1212.5,716.8 1212.7,706.6 1213.0,721.9 1213.2,708.2 1213.5,716.1 1213.7,709.5 1214.0,715.5 1214.2,709.8 1214.5,728.8 1214.7,709.3 1215.0,717.1 1215.2,701.0 1215.5,718.8 1215.7,703.7 1216.0,714.0 1216.2,701.8 1216.5,713.6 1216.7,702.4 1217.0,720.3 1217.2,707.1 1217.5,712.4 1217.7,700.9 1218.0,715.9 1218.2,699.4 1218.5,718.3 1218.7,702.2 1219.0,713.2 1219.2,698.8 1219.5,715.6 1219.7,700.3 1220.0,705.6 1220.2,699.1 1220.3,718.1 1220.3,689.2 1220.4,689.2 1220.4,718.1 1220.5,714.0 1220.7,693.1 1221.0,715.1 1221.2,697.4 1221.5,708.8 1221.7,705.6 1222.0,716.7 1222.2,703.4 1222.5,712.8 1222.7,708.7 1223.0,719.7 1223.2,703.8 1223.5,719.3 1223.7,708.4 1224.0,715.7 1224.2,710.6 1224.5,718.7 1224.7,707.9 1225.0,720.3 1225.2,709.3 1225.5,716.2 1225.7,709.7 1226.0,726.6 1226.2,709.6 1226.5,720.2 1226.7,714.3 1227.0,722.2 1227.2,708.8 1227.5,721.1 1227.7,703.0 1228.0,717.0 1228.2,703.4 1228.5,718.5 1228.7,700.0 1229.0,721.6 1229.2,700.4 1229.5,716.5 1229.7,700.1 1230.0,714.2 1230.2,707.5 1230.5,719.2 1230.7,707.0 1231.0,728.2 1231.2,710.6 1231.5,727.8 1231.7,708.3 1232.0,721.1 1232.2,699.7 1232.5,731.2 1232.7,712.5 1233.0,733.7 1233.2,706.3 1233.5,719.9 1233.7,713.1 1234.0,719.1 1234.2,705.0 1234.5,718.7 1234.7,710.6 1235.0,722.8 1235.2,712.2 1235.5,724.7 1235.7,704.5 1236.0,721.2 1236.2,699.8 1236.5,713.2 1236.7,701.3 1237.0,712.7 1237.2,700.8 1237.5,717.6 1237.7,705.5 1238.0,725.8 1238.2,699.3 1238.5,715.2 1238.7,694.2 1239.0,714.8 1239.2,705.6 1239.3,714.7 1239.3,685.8 1239.4,685.8 1239.4,714.7 1239.5,715.6 1239.7,702.1 1240.0,710.0 1240.2,699.9 1240.5,717.0 1240.7,699.1 1241.0,712.5 1241.2,702.8 1241.5,719.5 1241.7,698.2 1242.0,711.9 1242.2,697.6 1242.5,707.3 1242.7,697.4 1243.0,716.2 1243.2,702.9 1243.5,711.4 1243.7,696.5 1244.0,716.7 1244.2,698.1 1244.5,710.0 1244.7,695.6 1245.0,715.4 1245.2,699.1 1245.5,712.1 1245.7,694.9 1246.0,720.3 1246.2,702.6 1246.5,713.7 1246.7,700.0 1247.0,727.2 1247.2,703.7 1247.5,723.6 1247.7,707.2 1248.0,722.5 1248.2,707.5 1248.5,724.0 1248.7,707.2 1249.0,718.6 1249.2,706.0 1249.5,721.7 1249.7,707.7 1250.0,720.2 1250.2,701.0 1250.5,715.3 1250.7,704.7 1251.0,716.1 1251.2,703.4 1251.5,713.8 1251.7,699.5 1252.0,734.6 1252.2,707.6 1252.5,713.2 1252.7,703.5 1253.0,715.3 1253.2,698.9 1253.5,711.6 1253.7,704.2 1254.0,714.2 1254.2,699.3 1254.5,713.4 1254.7,701.4 1255.0,714.8 1255.2,707.8 1255.5,725.4 1255.7,696.5 1256.0,724.1 1256.2,701.5 1256.5,716.5 1256.7,702.6 1257.0,732.3 1257.2,702.2 1257.5,722.6 1257.7,699.0 1258.0,720.2 1258.2,703.6 1258.5,716.0 1258.7,703.0 1259.0,715.5 1259.2,702.3 1259.5,712.3 1259.7,697.1 1260.0,713.3 1260.2,697.0 1260.5,721.3 1260.7,700.9 1261.0,716.8 1261.2,700.8 1261.5,727.3 1261.7,699.9 1262.0,711.5 1262.2,704.4 1262.5,719.0 1262.7,700.7 1263.0,720.4 1263.2,699.9 1263.5,714.8 1263.7,704.4 1264.0,721.3 1264.2,702.0 1264.5,713.5 1264.7,701.6 1265.0,715.9 1265.2,699.0 1265.5,715.9 1265.7,699.1 1266.0,715.0 1266.2,700.1 1266.5,714.5 1266.7,702.1 1267.0,712.5 1267.2,706.8 1267.5,711.9 1267.7,700.9 1268.0,722.6 1268.2,700.6 1268.5,717.0 1268.7,698.5 1269.0,719.1 1269.2,698.6 1269.5,711.4 1269.7,705.6 1270.0,719.5 1270.2,702.8 1270.5,727.6 1270.7,704.0 1271.0,723.8 1271.2,705.5 1271.5,723.2 1271.7,700.1 1272.0,723.1 1272.2,711.2 1272.2,682.4 1272.2,682.4 1272.2,711.2 1272.2,706.4 1272.5,722.8 1272.7,704.4 1273.0,726.6 1273.2,704.8 1273.5,729.8 1273.7,702.4 1274.0,714.6 1274.2,705.0 1274.5,725.6 1274.7,700.1 1275.0,728.8 1275.2,705.2 1275.5,718.5 1275.7,699.1 1276.0,719.9 1276.2,702.2 1276.5,715.0 1276.7,704.8 1277.0,725.6 1277.2,697.7 1277.5,721.0 1277.7,701.8 1278.0,720.6 1278.2,706.6 1278.5,715.6 1278.7,703.6 1279.0,718.2 1279.2,700.0 1279.5,715.1 1279.7,702.6 1280.0,717.2 1280.2,697.7 1280.5,721.7 1280.7,699.6 1281.0,718.9 1281.2,701.0 1281.5,713.4 1281.7,700.6 1282.0,714.4 1282.2,701.6 1282.5,716.8 1282.7,703.2 1283.0,721.4 1283.2,704.9 1283.5,721.2 1283.7,705.4 1284.0,715.7 1284.2,701.2 1284.5,719.7 1284.7,705.4 1285.0,720.4 1285.2,707.6 1285.5,721.5 1285.7,699.6 1286.0,725.2 1286.2,702.3 1286.5,721.5 1286.7,697.1 1287.0,714.6 1287.2,693.0 1287.5,711.9 1287.7,690.6 1288.0,714.9 1288.2,697.7 1288.5,712.1 1288.7,689.3 1289.0,712.8 1289.2,694.2 1289.5,708.8 1289.7,695.3 1290.0,712.6 1290.2,700.7 1290.5,718.0 1290.7,704.7 1291.0,720.8 1291.2,701.2 1291.5,726.6 1291.7,710.9 1292.0,730.0 1292.2,706.5 1292.5,719.9 1292.7,710.5 1293.0,729.6 1293.2,708.2 1293.5,722.1 1293.7,712.8 1294.0,723.2 1294.2,708.2 1294.5,726.2 1294.7,706.5 1295.0,725.5 1295.2,710.1 1295.5,726.9 1295.7,705.0 1296.0,719.7 1296.2,698.9 1296.5,718.2 1296.7,702.6 1297.0,715.8 1297.2,696.3 1297.5,723.1 1297.7,697.6 1297.7,668.8 1297.7,668.8 1297.7,697.6 1297.7,700.2 1298.0,716.7 1298.2,700.6 1298.5,713.9 1298.7,696.9 1299.0,713.9 1299.2,701.8 1299.5,712.9 1299.7,705.3 1300.0,729.3 1300.2,705.0 1300.5,729.5 1300.7,697.7 1301.0,730.2 1301.2,703.8 1301.5,723.0 1301.7,702.2 1302.0,734.5 1302.2,698.2 1302.5,715.7 1302.7,701.3 1303.0,715.2 1303.2,701.7 1303.5,713.3 1303.7,695.4 1304.0,721.2 1304.2,698.5 1304.5,715.0 1304.7,699.6 1305.0,717.2 1305.2,699.9 1305.5,712.7 1305.7,699.0 1306.0,720.9 1306.2,699.8 1306.5,713.3 1306.7,697.1 1307.0,723.2 1307.2,696.3 1307.5,715.7 1307.7,702.1 1308.0,723.7 1308.2,703.8 1308.5,721.4 1308.7,689.7 1309.0,721.7 1309.2,699.0 1309.5,711.5 1309.7,693.9 1310.0,716.5 1310.2,691.5 1310.5,707.8 1310.7,689.7 1311.0,709.7 1311.2,687.9 1311.5,708.5 1311.7,683.7 1312.0,701.8 1312.2,678.8 1312.5,701.3 1312.7,683.1 1313.0,706.2 1313.2,688.0 1313.5,704.3 1313.7,685.9 1314.0,703.6 1314.2,689.6 1314.5,709.9 1314.7,692.7 1315.0,706.1 1315.2,697.9 1315.5,713.8 1315.7,698.6 1316.0,715.6 1316.2,697.8 1316.5,715.8 1316.7,699.8 1317.0,719.1 1317.2,698.1 1317.5,714.7 1317.7,696.4 1318.0,717.1 1318.2,694.7 1318.5,716.8 1318.5,688.5 1318.5,659.7 1318.5,659.7 1318.5,688.5 1318.7,697.8 1319.0,720.3 1319.2,696.9 1319.5,716.5 1319.7,694.4 1320.0,713.0 1320.2,690.9 1320.5,709.7 1320.7,695.3 1321.0,711.9 1321.2,696.4 1321.5,711.0 1321.7,697.3 1322.0,714.7 1322.2,693.3 1322.5,713.5 1322.7,694.4 1323.0,715.5 1323.2,696.7 1323.5,718.9 1323.7,698.0 1324.0,714.0 1324.2,699.4 1324.5,717.8 1324.7,693.0 1325.0,709.2 1325.2,698.8 1325.5,719.0 1325.7,697.4 1326.0,712.0 1326.2,696.7 1326.5,713.6 1326.7,695.2 1327.0,712.8 1327.2,695.6 1327.5,716.0 1327.7,696.8 1328.0,719.1 1328.2,698.5 1328.5,715.3 1328.7,698.9 1329.0,712.8 1329.2,697.4 1329.5,720.7 1329.7,691.6 1330.0,713.4 1330.2,696.6 1330.5,711.6 1330.7,696.1 1331.0,714.9 1331.2,694.5 1331.5,711.3 1331.7,694.4 1332.0,716.0 1332.2,695.6 1332.5,714.7 1332.7,693.1 1333.0,716.4 1333.2,693.7 1333.5,721.6 1333.7,690.5 1334.0,714.4 1334.2,693.1 1334.5,708.5 1334.7,696.6 1335.0,713.3 1335.2,697.6 1335.5,726.0 1335.7,693.2 1336.0,712.8 1336.1,699.9 1336.1,650.6 1336.1,650.6 1336.1,699.9 1336.2,703.3 1336.5,721.1 1336.7,702.3 1337.0,718.3 1337.2,698.9 1337.5,722.4 1337.7,699.7 1338.0,726.9 1338.2,704.7 1338.5,724.6 1338.7,697.9 1339.0,721.3 1339.2,694.7 1339.5,715.7 1339.7,693.1 1340.0,712.0 1340.2,691.7 1340.5,706.5 1340.7,693.6 1341.0,715.2 1341.2,693.4 1341.5,708.4 1341.7,686.0 1342.0,715.1 1342.2,687.2 1342.5,706.2 1342.7,693.7 1343.0,709.4 1343.2,691.7 1343.5,705.2 1343.7,687.5 1344.0,717.7 1344.2,694.4 1344.5,712.1 1344.7,692.1 1345.0,715.6 1345.2,688.8 1345.5,707.9 1345.7,692.8 1346.0,713.4 1346.2,693.7 1346.5,717.8 1346.7,689.1 1347.0,709.5 1347.2,690.9 1347.5,706.1 1347.7,687.2 1348.0,705.5 1348.2,686.0 1348.5,707.5 1348.7,685.6 1349.0,702.5 1349.2,690.3 1349.5,714.4 1349.7,688.4 1350.0,704.7 1350.2,688.0 1350.5,705.7 1350.7,687.5 1351.0,704.6 1351.2,693.9 1351.3,699.9 1351.3,649.4 1351.4,649.4 1351.4,699.9 1351.5,708.9 1351.7,690.3 1352.0,706.9 1352.2,694.6 1352.5,709.2 1352.7,686.7 1353.0,704.9 1353.2,687.0 1353.5,710.0 1353.7,685.2 1354.0,704.5 1354.2,689.0 1354.5,702.4 1354.7,682.9 1355.0,701.4 1355.2,682.3 1355.5,695.2 1355.7,680.8 1356.0,702.1 1356.2,686.2 1356.5,696.4 1356.7,686.9 1357.0,705.6 1357.2,682.6 1357.5,702.7 1357.7,685.7 1358.0,702.9 1358.2,687.1 1358.5,699.0 1358.7,688.9 1359.0,704.9 1359.2,688.0 1359.5,703.4 1359.7,687.0 1360.0,707.8 1360.2,685.7 1360.5,708.3 1360.7,680.6 1361.0,708.9 1361.2,684.3 1361.5,706.3 1361.7,684.2 1362.0,713.1 1362.2,678.9 1362.5,702.2 1362.7,686.2 1363.0,706.6 1363.2,684.6 1363.5,711.3 1363.7,679.9 1364.0,701.1 1364.2,680.1 1364.5,705.8 1364.7,677.4 1364.8,699.9 1364.8,638.8 1364.8,638.8 1364.8,699.9 1365.0,694.7 1365.2,676.8 1365.5,702.5 1365.7,679.0 1366.0,695.0 1366.2,671.2 1366.5,691.5 1366.7,670.8 1367.0,692.3 1367.2,670.0 1367.5,688.6 1367.7,667.0 1368.0,686.7 1368.2,669.3 1368.5,689.7 1368.7,664.4 1369.0,684.7 1369.2,664.0 1369.5,682.5 1369.7,665.8 1370.0,690.2 1370.2,661.6 1370.5,685.9 1370.7,662.4 1371.0,678.3 1371.2,660.9 1371.5,679.3 1371.7,654.1 1372.0,684.2 1372.2,653.1 1372.5,676.8 1372.7,648.5 1373.0,677.9 1373.2,649.1 1373.5,663.9 1373.7,641.3 1374.0,666.7 1374.2,639.5 1374.5,655.6 1374.7,627.7 1375.0,649.1 1375.2,622.3 1375.5,643.3 1375.7,623.3 1376.0,648.0 1376.2,621.4 1376.5,647.2 1376.7,617.0 1376.8,635.5 1376.8,84.0 1376.9,84.0 1376.9,635.5 1377.0,641.5 1377.2,620.0 1377.5,641.2 1377.7,622.5 1378.0,648.8 1378.2,621.3 1378.5,638.3 1378.7,632.3 1379.0,653.2 1379.2,630.0 1379.5,654.6 1379.7,638.0 1380.0,657.1 1380.2,637.5 1380.5,661.1 1380.7,647.2 1381.0,669.5 1381.2,650.2 1381.5,676.9 1381.7,654.1 1382.0,679.2 1382.2,656.1 1382.5,670.7 1382.7,659.9 1383.0,678.7 1383.2,669.2 1383.5,681.7 1383.7,671.9 1384.0,694.8 1384.2,674.5 1384.5,693.5 1384.7,673.5 1385.0,692.5 1385.2,678.1 1385.5,698.9 1385.7,676.6 1386.0,700.8 1386.2,677.2 1386.5,699.7 1386.7,676.7 1387.0,697.7 1387.2,676.6 1387.5,694.9 1387.7,699.9 1387.7,640.7 1387.8,640.7 1387.8,699.9 1387.7,672.8 1388.0,699.9 1388.2,670.2 1388.5,697.4 1388.7,670.5 1389.0,694.4 1389.2,678.4 1389.5,698.2 1389.7,681.3 1390.0,700.9 1390.2,681.3 1390.5,703.4 1390.7,677.7 1391.0,701.9 1391.2,682.3 1391.5,706.0 1391.7,682.2 1392.0,703.9 1392.2,684.4 1392.5,701.9 1392.7,682.2 1393.0,701.8 1393.2,681.5 1393.5,698.9 1393.7,677.6 1394.0,699.8 1394.2,681.0 1394.5,700.2 1394.7,677.1 1395.0,701.3 1395.2,683.7 1395.5,699.2 1395.7,684.8 1396.0,702.6 1396.2,684.9 1396.5,703.4 1396.7,683.2 1397.0,705.2 1397.2,680.8 1397.5,714.8 1397.7,699.9 1397.7,643.8 1397.7,643.8 1397.7,699.9 1397.7,685.3 1398.0,713.4 1398.2,686.4 1398.5,708.4 1398.7,687.7 1399.0,715.3 1399.2,685.7 1399.5,712.9 1399.7,688.7 1400.0,708.2 1400.2,682.0 1400.5,710.6 1400.7,679.5 1401.0,712.4 1401.2,677.9 1401.5,706.0 1401.7,679.2 1402.0,709.2 1402.2,682.0 1402.5,701.3 1402.7,683.1 1403.0,709.1 1403.2,683.1 1403.5,707.5 1403.7,683.2 1404.0,709.1 1404.2,679.8 1404.5,711.9 1404.7,684.3 1405.0,721.1 1405.2,681.8 1405.5,715.3 1405.7,682.8 1406.0,707.6 1406.2,683.7 1406.5,711.3 1406.7,685.9 1406.8,682.5 1406.8,653.6 1406.8,653.6 1406.8,682.5 1407.0,708.4 1407.2,685.4 1407.5,711.2 1407.7,685.1 1408.0,719.9 1408.2,684.9 1408.5,708.8 1408.7,684.8 1409.0,705.9 1409.2,682.3 1409.5,710.3 1409.7,692.2 1410.0,716.6 1410.2,687.5 1410.5,716.5 1410.7,685.1 1411.0,713.5 1411.2,688.8 1411.5,714.5 1411.7,692.9 1412.0,718.1 1412.2,689.0 1412.5,715.7 1412.7,685.4 1413.0,719.5 1413.2,694.8 1413.5,720.2 1413.7,687.5 1414.0,727.7 1414.2,687.2 1414.5,717.6 1414.7,685.7 1415.0,711.7 1415.2,685.3 1415.3,688.5 1415.3,659.7 1415.3,659.7 1415.3,688.5 1415.5,714.9 1415.7,688.0 1416.0,717.9 1416.2,686.6 1416.5,714.5 1416.7,693.2 1417.0,723.8 1417.2,685.0 1417.5,722.3 1417.7,684.4 1418.0,722.7 1418.2,695.5 1418.5,722.4 1418.7,695.2 1419.0,718.5 1419.2,697.1 1419.5,736.3 1419.7,698.3 1420.0,730.8 1420.2,693.2 1420.5,726.9 1420.7,689.3 1421.0,723.8 1421.2,696.5 1421.5,730.2 1421.7,691.6 1422.0,724.0 1422.2,694.1 1422.5,729.1 1422.7,691.0 1423.0,723.9 1423.1,692.3 1423.1,663.5 1423.2,663.5 1423.2,692.3 1423.2,695.3 1423.5,726.6 1423.7,693.0 1424.0,725.0 1424.2,692.0 1424.5,722.8 1424.7,692.9 1425.0,726.4 1425.2,691.5 1425.5,729.5 1425.7,693.4 1426.0,726.3 1426.2,695.7 1426.5,728.4 1426.7,698.0 1427.0,732.0 1427.2,693.5 1427.5,726.8 1427.7,692.4 1428.0,725.5 1428.2,694.7 1428.5,725.2 1428.7,695.5 1429.0,729.1 1429.2,692.6 1429.5,725.6 1429.7,697.5 1430.0,733.6 1430.2,692.7 1430.5,726.5 1430.5,712.0 1430.5,683.1 1430.6,683.1 1430.6,712.0 1430.7,689.0 1431.0,724.9 1431.2,691.1 1431.5,726.8 1431.7,693.7 1432.0,732.0 1432.2,690.6 1432.5,732.8 1432.7,688.8 1433.0,722.9 1433.2,686.5 1433.5,721.5 1433.7,690.1 1434.0,729.1 1434.2,692.8 1434.5,725.9 1434.7,689.3 1435.0,732.7 1435.2,688.0 1435.5,733.7 1435.7,684.7 1436.0,725.8 1436.2,693.8 1436.5,726.4 1436.7,693.1 1437.0,735.6 1437.2,694.7 1437.5,730.1 1437.7,694.7 1438.0,729.6 1438.2,693.0 1438.5,737.1 1438.7,697.7 1439.0,741.4 1439.2,698.1 1439.5,737.6 1439.7,696.6 1440.0,737.5 1440.2,697.0 1440.5,745.0 1440.7,698.8 1441.0,735.4 1441.2,696.0 1441.5,733.1 1441.7,691.3 1442.0,733.0 1442.2,692.4 1442.5,741.6 1442.7,691.8 1443.0,738.0 1443.2,689.9 1443.5,729.5 1443.7,696.0 1444.0,733.9 1444.2,690.0 1444.5,731.3 1444.7,692.3 1445.0,737.7 1445.2,693.1 1445.5,736.7 1445.7,697.0 1446.0,743.8 1446.2,702.5 1446.5,743.8 1446.7,697.7 1447.0,739.0 1447.2,696.6 1447.5,737.0 1447.7,693.5 1448.0,744.1 1448.2,697.1 1448.5,738.4 1448.7,699.8 1449.0,744.9 1449.2,698.4 1449.5,738.9 1449.7,692.2 1450.0,734.3 1450.1,730.2 1450.1,701.3 1450.2,701.3 1450.2,730.2 1450.2,694.2 1450.5,734.3 1450.7,691.8 1451.0,730.5 1451.2,694.6 1451.5,741.6 1451.7,691.8 1452.0,738.1 1452.2,695.1 1452.5,734.6 1452.7,693.9 1453.0,735.6 1453.2,693.5 1453.5,739.4 1453.7,695.7 1454.0,739.7 1454.2,694.2 1454.5,743.9 1454.7,702.5 1455.0,741.3 1455.2,696.2 1455.5,744.1 1455.7,701.3 1456.0,743.6 1456.0,699.9 1456.0,494.9 1456.0,494.9 1456.0,699.9 1456.2,703.9 1456.5,750.6 1456.7,705.2 1457.0,748.4 1457.2,704.6 1457.5,749.5 1457.7,699.5 1458.0,750.1 1458.2,701.0 1458.5,745.8 1458.7,696.0 1459.0,745.4 1459.2,699.6 1459.5,753.4 1459.7,701.6 1460.0,745.8 1460.2,697.9 1460.5,748.9 1460.7,701.6 1461.0,751.2 1461.2,699.9 1461.5,748.8 1461.7,697.4 1462.0,743.5 1462.2,700.1 1462.5,750.3 1462.7,702.1 1463.0,745.9 1463.2,701.5 1463.5,741.1 1463.7,702.8 1464.0,746.5 1464.2,701.7 1464.5,751.1 1464.7,703.0 1465.0,753.0 1465.2,706.0 1465.5,749.7 1465.7,703.1 1466.0,755.9 1466.2,701.6 1466.5,758.0 1466.7,704.4 1467.0,751.6 1467.2,703.1 1467.5,751.9 1467.7,697.1 1468.0,752.1 1468.2,697.0 1468.5,744.4 1468.7,693.4 1469.0,742.4 1469.2,691.8 1469.5,747.1 1469.7,695.4 1470.0,743.6 1470.2,695.1 1470.5,740.1 1470.7,693.4 1471.0,739.7 1471.2,697.9 1471.5,744.5 1471.7,700.3 1472.0,749.1 1472.2,702.2 1472.5,749.4 1472.7,702.5 1473.0,749.0 1473.2,702.1 1473.5,749.9 1473.7,698.8 1474.0,747.6 1474.2,702.6 1474.5,748.5 1474.7,701.8 1475.0,744.3 1475.2,699.1 1475.5,750.4 1475.7,699.0 1476.0,748.5 1476.2,700.5 1476.5,747.2 1476.7,702.9 1477.0,748.7 1477.2,698.3 1477.5,745.8 1477.7,703.5 1478.0,748.4 1478.2,702.2 1478.5,748.8 1478.7,699.9 1479.0,753.7 1479.2,700.2 1479.5,746.2 1479.7,699.7 1480.0,746.4 1480.2,694.4 1480.5,746.9 1480.7,695.2 1481.0,750.1 1481.2,698.9 1481.5,749.5 1481.7,696.6 1482.0,746.0 1482.2,697.2 1482.5,742.3 1482.7,697.0 1483.0,747.6 1483.2,697.0 1483.5,747.0 1483.7,701.1 1484.0,743.0 1484.2,698.2 1484.5,746.2 1484.7,698.8 1485.0,745.6 1485.2,698.0 1485.5,750.8 1485.7,700.4 1486.0,748.7 1486.2,699.0 1486.5,752.8 1486.7,700.0 1487.0,746.6 1487.2,702.7 1487.5,747.7 1487.7,697.5 1488.0,744.1 1488.2,700.2 1488.5,744.6 1488.7,701.9 1489.0,750.8 1489.2,695.7 1489.5,751.1 1489.7,701.2 1490.0,749.4 1490.2,701.3 1490.5,750.7 1490.7,697.9 1491.0,754.1 1491.2,699.0 1491.5,748.7 1491.7,699.7 1492.0,748.9 1492.2,699.3 1492.5,756.0 1492.7,698.4 1493.0,752.9 1493.2,699.7 1493.5,748.9 1493.7,700.6 1494.0,751.9 1494.2,697.8 1494.5,753.1 1494.7,696.6 1495.0,751.0 1495.2,698.7 1495.5,746.1 1495.7,696.3 1496.0,747.4 1496.2,699.8 1496.5,753.0 1496.7,700.0 1497.0,749.0 1497.2,699.3 1497.5,749.0 1497.7,702.2 1498.0,749.9 1498.2,700.5 1498.5,752.4 1498.7,699.6 1499.0,749.6 1499.2,699.1 1499.5,752.5 1499.7,703.7 1500.0,752.4 1500.2,698.1 1500.5,760.9 1500.7,701.0 1501.0,747.9 1501.2,700.7 1501.5,749.8 1501.7,701.3 1502.0,743.3 1502.2,699.1 1502.3,699.9 1502.3,444.9 1502.4,444.9 1502.4,699.9 1502.5,746.6 1502.7,700.2 1503.0,749.0 1503.2,699.0 1503.5,746.3 1503.7,693.7 1504.0,744.6 1504.2,696.0 1504.5,751.1 1504.7,696.0 1505.0,751.8 1505.2,699.0 1505.5,746.2 1505.7,694.5 1506.0,747.3 1506.2,698.8 1506.5,753.2 1506.7,700.6 1507.0,750.1 1507.2,700.6 1507.5,749.2 1507.7,699.2 1508.0,749.0 1508.2,703.7 1508.5,752.7 1508.7,703.8 1509.0,749.4 1509.2,699.9 1509.5,753.3 1509.7,703.8 1510.0,754.2 1510.2,702.4 1510.5,750.7 1510.7,697.9 1511.0,745.6 1511.2,700.5 1511.5,756.3 1511.7,698.6 1512.0,749.5 1512.2,694.1 1512.5,744.4 1512.7,694.1 1513.0,745.5 1513.2,695.3 1513.5,746.2 1513.7,692.5 1514.0,739.8 1514.2,694.6 1514.5,741.9 1514.7,690.5 1515.0,741.1 1515.2,693.3 1515.5,740.9 1515.7,695.3 1516.0,741.4 1516.2,694.8 1516.5,743.7 1516.7,697.7 1517.0,747.2 1517.2,696.9 1517.5,744.5 1517.7,696.5 1518.0,742.9 1518.2,699.0 1518.5,747.5 1518.7,699.4 1519.0,748.1 1519.2,698.4 1519.5,748.9 1519.7,693.4 1520.0,748.2 1520.2,696.7 1520.5,747.5 1520.7,695.9 1521.0,744.3 1521.2,701.8 1521.5,746.5 1521.7,702.0 1522.0,750.2 1522.2,700.5 1522.5,747.0 1522.7,699.3 1523.0,748.8 1523.2,703.7 1523.5,749.6 1523.7,698.6 1524.0,751.7 1524.2,699.1 1524.5,745.5 1524.7,696.5 1525.0,744.6 1525.2,694.4 1525.5,748.4 1525.7,693.2 1526.0,743.0 1526.2,699.6 1526.5,749.3 1526.7,696.2 1527.0,745.2 1527.2,695.9 1527.5,743.7 1527.7,693.6 1528.0,745.8 1528.2,700.5 1528.5,750.6 1528.7,703.5 1529.0,754.7 1529.2,703.1 1529.5,758.2 1529.7,703.1 1530.0,751.8 1530.2,705.2 1530.5,755.0 1530.7,702.9 1531.0,756.3 1531.2,703.3 1531.5,761.9 1531.7,706.1 1532.0,761.6 1532.2,707.4 1532.5,764.1 1532.7,707.0 1533.0,756.6 1533.2,707.0 1533.5,756.9 1533.7,706.9 1534.0,758.7 1534.2,705.8 1534.5,756.7 1534.7,703.5 1535.0,755.0 1535.2,699.9 1535.2,475.6 1535.2,475.6 1535.2,699.9 1535.2,704.0 1535.5,758.6 1535.7,704.2 1536.0,751.6 1536.2,698.9 1536.5,752.7 1536.7,697.8 1537.0,747.9 1537.2,697.7 1537.5,750.0 1537.7,698.9 1538.0,750.7 1538.2,698.6 1538.5,751.9 1538.7,700.0 1539.0,745.2 1539.2,701.3 1539.5,752.5 1539.7,698.6 1540.0,748.4 1540.2,702.2 1540.5,750.4 1540.7,702.5 1541.0,756.1 1541.2,700.1 1541.5,746.5 1541.7,698.4 1542.0,747.9 1542.2,697.4 1542.5,748.2 1542.7,698.3 1543.0,750.2 1543.2,696.9 1543.5,746.5 1543.7,698.6 1544.0,751.3 1544.2,698.4 1544.5,744.2 1544.7,697.7 1545.0,752.4 1545.2,701.1 1545.5,746.9 1545.7,695.7 1546.0,749.7 1546.2,702.2 1546.5,753.1 1546.7,699.0 1547.0,751.2 1547.2,694.6 1547.5,746.2 1547.7,698.6 1548.0,751.3 1548.2,698.0 1548.5,748.8 1548.7,700.9 1549.0,748.6 1549.2,696.4 1549.5,744.4 1549.7,697.6 1550.0,763.3 1550.2,697.1 1550.5,743.2 1550.7,696.0 1551.0,761.0 1551.2,700.1 1551.5,752.7 1551.7,706.5 1552.0,754.1 1552.2,701.8 1552.5,752.1 1552.7,704.6 1553.0,757.4 1553.2,702.3 1553.5,768.7 1553.7,703.4 1554.0,752.3 1554.2,702.9 1554.5,749.3 1554.7,699.4 1555.0,752.8 1555.2,702.9 1555.5,753.0 1555.7,697.8 1556.0,748.9 1556.2,701.6 1556.5,752.0 1556.7,699.8 1557.0,751.5 1557.2,701.9 1557.5,750.9 1557.7,702.2 1558.0,752.9 1558.2,703.2 1558.5,759.1 1558.7,700.6 1559.0,758.2 1559.2,698.3 1559.5,752.5 1559.7,703.6 1560.0,761.8 1560.2,704.9 1560.5,750.5 1560.7,699.9 1560.7,499.5 1560.7,499.5 1560.7,699.9 1560.7,700.2 1561.0,754.8 1561.2,699.3 1561.5,752.1 1561.7,701.4 1562.0,751.2 1562.2,701.3 1562.5,753.0 1562.7,703.0 1563.0,751.7 1563.2,703.1 1563.5,752.3 1563.7,702.2 1564.0,750.6 1564.2,701.9 1564.5,753.1 1564.7,701.7 1565.0,750.5 1565.2,699.7 1565.5,750.4 1565.7,698.1 1566.0,759.9 1566.2,703.1 1566.5,751.0 1566.7,701.5 1567.0,747.1 1567.2,698.7 1567.5,752.6 1567.7,698.9 1568.0,748.7 1568.2,704.6 1568.5,756.2 1568.7,702.6 1569.0,754.1 1569.2,703.9 1569.5,754.8 1569.7,701.5 1570.0,751.7 1570.2,701.3 1570.5,752.8 1570.7,702.9 1571.0,754.3 1571.2,703.1 1571.5,749.1 1571.7,701.0 1572.0,752.6 1572.2,697.7 1572.5,747.0 1572.7,702.1 1573.0,756.6 1573.2,698.7 1573.5,747.9 1573.7,700.6 1574.0,758.5 1574.2,700.9 1574.5,749.8 1574.7,696.5 1575.0,754.2 1575.2,699.3 1575.5,751.2 1575.7,701.9 1576.0,755.1 1576.2,700.2 1576.5,750.4 1576.7,703.3 1577.0,751.9 1577.2,702.4 1577.5,751.5 1577.7,703.7 1578.0,750.8 1578.2,700.0 1578.5,754.4 1578.7,701.7 1579.0,754.8 1579.2,704.5 1579.5,757.3 1579.7,703.1 1580.0,760.4 1580.2,704.9 1580.5,754.4 1580.7,702.0 1581.0,753.2 1581.2,704.3 1581.5,759.1 1581.5,699.9 1581.5,520.7 1581.5,520.7 1581.5,699.9 1581.7,701.8 1582.0,750.6 1582.2,701.6 1582.5,750.7 1582.7,696.4 1583.0,751.3 1583.2,696.7 1583.5,745.0 1583.7,698.5 1584.0,750.7 1584.2,697.2 1584.5,752.3 1584.7,696.7 1585.0,751.6 1585.2,696.3 1585.5,744.5 1585.7,694.9 1586.0,755.4 1586.2,693.3 1586.5,752.3 1586.7,695.7 1587.0,745.0 1587.2,697.9 1587.5,750.0 1587.7,698.3 1588.0,748.1 1588.2,699.2 1588.5,750.4 1588.7,701.2 1589.0,754.2 1589.2,702.6 1589.5,756.4 1589.7,700.5 1590.0,757.7 1590.2,704.3 1590.5,756.4 1590.7,707.8 1591.0,756.7 1591.2,708.3 1591.5,761.2 1591.7,705.8 1592.0,756.7 1592.2,706.7 1592.5,757.6 1592.7,707.0 1593.0,757.3 1593.2,708.5 1593.5,758.8 1593.7,702.5 1594.0,757.8 1594.2,705.8 1594.5,762.2 1594.7,705.3 1595.0,757.9 1595.2,706.3 1595.5,756.0 1595.7,702.9 1596.0,754.3 1596.2,706.2 1596.5,761.9 1596.7,709.2 1597.0,761.0 1597.2,705.2 1597.5,756.9 1597.7,705.0 1598.0,753.9 1598.2,703.2 1598.5,765.5 1598.7,704.5 1599.0,761.4 1599.1,699.9 1599.1,515.8 1599.1,515.8 1599.1,699.9 1599.2,702.5 1599.5,754.5 1599.7,704.8 1600.0,757.7 1600.2,704.6 1600.5,756.1 1600.7,700.5 1601.0,754.9 1601.2,704.3 1601.5,754.4 1601.7,704.1 1602.0,757.6 1602.2,703.2 1602.5,759.7 1602.7,700.7 1603.0,759.5 1603.2,705.5 1603.5,760.7 1603.7,703.8 1604.0,756.0 1604.2,704.4 1604.5,755.0 1604.7,704.3 1605.0,753.9 1605.2,705.4 1605.5,765.7 1605.7,708.9 1606.0,761.4 1606.2,703.7 1606.5,756.4 1606.7,707.8 1607.0,755.9 1607.2,704.6 1607.5,756.4 1607.7,703.7 1608.0,755.1 1608.2,706.1 1608.5,756.0 1608.7,702.8 1609.0,758.8 1609.2,705.7 1609.5,758.6 1609.7,707.8 1610.0,756.9 1610.2,707.8 1610.5,759.1 1610.7,707.3 1611.0,758.8 1611.2,709.3 1611.5,756.0 1611.7,711.0 1612.0,757.3 1612.2,705.5 1612.5,756.8 1612.7,701.0 1613.0,754.8 1613.2,701.1 1613.5,750.1 1613.7,703.3 1614.0,755.1 1614.2,701.9 1614.3,699.9 1614.3,543.4 1614.4,543.4 1614.4,699.9 1614.5,753.4 1614.7,699.4 1615.0,755.6 1615.2,698.4 1615.5,749.5 1615.7,697.3 1616.0,750.3 1616.2,700.0 1616.5,746.8 1616.7,698.7 1617.0,754.9 1617.2,699.2 1617.5,751.2 1617.7,695.3 1618.0,756.2 1618.2,690.7 1618.5,744.2 1618.7,692.7 1619.0,747.0 1619.2,694.8 1619.5,749.1 1619.7,695.7 1620.0,752.0 1620.2,697.8 1620.5,753.4 1620.7,697.6 1621.0,756.4 1621.2,699.9 1621.5,750.9 1621.7,700.1 1622.0,752.3 1622.2,699.4 1622.5,756.6 1622.7,701.3 1623.0,755.5 1623.2,703.3 1623.5,756.6 1623.7,702.4 1624.0,760.8 1624.2,704.5 1624.5,756.9 1624.7,703.0 1625.0,762.1 1625.2,702.7 1625.5,756.3 1625.7,702.0 1626.0,751.5 1626.2,698.6 1626.5,758.3 1626.7,703.8 1627.0,765.7 1627.2,698.4 1627.5,751.8 1627.7,699.4 1627.8,699.9 1627.8,536.6 1627.8,536.6 1627.8,699.9 1628.0,754.3 1628.2,696.3 1628.5,757.9 1628.7,702.9 1629.0,751.5 1629.2,702.0 1629.5,759.6 1629.7,703.4 1630.0,759.0 1630.2,703.8 1630.5,759.1 1630.7,704.0 1631.0,765.6 1631.2,710.4 1631.5,760.9 1631.7,703.3 1632.0,757.0 1632.2,708.5 1632.5,760.8 1632.7,706.8 1633.0,762.2 1633.2,703.4 1633.5,759.1 1633.7,700.0 1634.0,752.8 1634.2,700.6 1634.5,750.5 1634.7,701.9 1635.0,751.0 1635.2,695.1 1635.5,751.2 1635.7,702.2 1636.0,751.6 1636.2,698.8 1636.5,750.8 1636.7,700.3 1637.0,754.6 1637.2,701.2 1637.5,752.6 1637.7,701.3 1638.0,754.0 1638.2,697.5 1638.5,749.4 1638.7,697.5 1639.0,752.9 1639.2,694.9 1639.5,752.8 1639.7,695.9 1639.8,699.9 1639.8,568.0 1639.9,568.0 1639.9,699.9 1640.0,758.2 1640.2,694.3 1640.5,750.3 1640.7,694.9 1641.0,749.5 1641.2,692.3 1641.5,752.0 1641.7,694.8 1642.0,754.2 1642.2,700.4 1642.5,755.0 1642.7,701.3 1643.0,755.1 1643.2,701.2 1643.5,758.0 1643.7,702.8 1644.0,756.1 1644.2,698.9 1644.5,753.6 1644.7,700.1 1645.0,765.9 1645.2,697.0 1645.5,755.3 1645.7,699.0 1646.0,751.7 1646.2,699.5 1646.5,751.3 1646.7,696.5 1647.0,750.8 1647.2,700.5 1647.5,760.9 1647.7,697.0 1648.0,750.7 1648.2,698.3 1648.5,753.3 1648.7,694.8 1649.0,750.9 1649.2,693.3 1649.5,753.7 1649.7,692.6 1650.0,751.1 1650.2,691.1 1650.5,747.6 1650.7,699.9 1650.7,524.8 1650.8,524.8 1650.8,699.9 1650.7,693.6 1651.0,747.0 1651.2,692.7 1651.5,746.5 1651.7,692.8 1652.0,752.3 1652.2,694.6 1652.5,751.5 1652.7,695.9 1653.0,748.9 1653.2,698.0 1653.5,755.6 1653.7,696.2 1654.0,750.8 1654.2,700.4 1654.5,758.7 1654.7,698.2 1655.0,751.2 1655.2,692.1 1655.5,751.0 1655.7,697.7 1656.0,752.1 1656.2,701.1 1656.5,753.6 1656.7,702.6 1657.0,755.1 1657.2,702.9 1657.5,758.6 1657.7,698.2 1658.0,758.6 1658.2,703.1 1658.5,754.8 1658.7,707.1 1659.0,773.0 1659.2,707.0 1659.5,766.2 1659.7,705.7 1660.0,762.5 1660.2,703.9 1660.5,759.6 1660.7,699.9 1660.7,519.9 1660.7,519.9 1660.7,699.9 1660.7,703.5 1661.0,762.6 1661.2,703.7 1661.5,759.8 1661.7,704.9 1662.0,763.7 1662.2,705.0 1662.5,761.3 1662.7,704.6 1663.0,755.7 1663.2,699.6 1663.5,755.4 1663.7,705.7 1664.0,755.6 1664.2,699.2 1664.5,757.0 1664.7,701.1 1665.0,755.5 1665.2,702.8 1665.5,759.3 1665.7,704.9 1666.0,757.0 1666.2,701.7 1666.5,758.7 1666.7,704.5 1667.0,755.1 1667.2,700.9 1667.5,752.2 1667.7,698.3 1668.0,751.6 1668.2,698.2 1668.5,756.7 1668.7,702.4 1669.0,755.6 1669.2,704.0 1669.5,754.8 1669.7,694.9 1669.8,699.9 1669.8,519.9 1669.8,519.9 1669.8,699.9 1670.0,750.6 1670.2,697.6 1670.5,752.7 1670.7,696.4 1671.0,750.2 1671.2,701.3 1671.5,758.7 1671.7,703.4 1672.0,756.4 1672.2,703.2 1672.5,757.5 1672.7,703.0 1673.0,760.0 1673.2,698.0 1673.5,755.4 1673.7,701.6 1674.0,757.8 1674.2,702.1 1674.5,757.3 1674.7,702.8 1675.0,756.5 1675.2,702.3 1675.5,759.7 1675.7,701.0 1676.0,760.6 1676.2,696.8 1676.5,755.5 1676.7,696.6 1677.0,756.1 1677.2,697.9 1677.5,762.7 1677.7,699.1 1678.0,756.4 1678.2,697.8 1678.3,699.9 1678.3,511.2 1678.3,511.2 1678.3,699.9 1678.5,755.2 1678.7,701.0 1679.0,765.4 1679.2,699.6 1679.5,763.1 1679.7,698.6 1680.0,752.4 1680.2,699.0 1680.5,763.5 1680.7,703.2 1681.0,756.6 1681.2,704.4 1681.5,758.9 1681.7,700.3 1682.0,761.6 1682.2,699.9 1682.5,757.3 1682.7,699.6 1683.0,757.3 1683.2,700.0 1683.5,756.4 1683.7,697.9 1684.0,751.5 1684.2,694.4 1684.5,752.6 1684.7,695.6 1685.0,749.5 1685.2,700.7 1685.5,753.2 1685.7,699.9 1686.0,752.6 1686.1,699.9 1686.1,513.9 1686.2,513.9 1686.2,699.9 1686.2,700.6 1686.5,755.3 1686.7,701.9 1687.0,760.1 1687.2,698.5 1687.5,756.4 1687.7,700.8 1688.0,753.5 1688.2,702.6 1688.5,759.4 1688.7,704.2 1689.0,759.0 1689.2,701.7 1689.5,762.3 1689.7,698.2 1690.0,750.7 1690.2,691.3 1690.5,758.4 1690.7,697.9 1691.0,753.3 1691.2,698.4 1691.5,755.1 1691.7,696.4 1692.0,752.3 1692.2,694.3 1692.5,750.0 1692.7,693.7 1693.0,748.4 1693.2,694.0 1693.5,751.1 1693.5,699.9 1693.5,555.1 1693.6,555.1 1693.6,699.9 1693.7,697.1 1694.0,756.5 1694.2,697.4 1694.5,750.9 1694.7,700.1 1695.0,753.7 1695.2,696.6 1695.5,751.2 1695.7,697.3 1696.0,753.6 1696.2,698.7 1696.5,756.5 1696.7,701.2 1697.0,755.8 1697.2,696.6 1697.5,758.0 1697.7,692.5 1698.0,745.8 1698.2,692.7 1698.5,752.2 1698.7,693.0 1699.0,752.2 1699.2,694.8 1699.5,751.7 1699.7,692.6 1700.0,749.2 1700.2,690.7 1700.4,699.9 1700.4,516.1 1700.5,516.1 1700.5,699.9 1700.5,750.5 1700.7,690.9 1701.0,745.5 1701.2,689.7 1701.5,743.8 1701.7,692.6 1702.0,751.2 1702.2,694.8 1702.5,760.2 1702.7,696.0 1703.0,754.1 1703.2,696.1 1703.5,754.4 1703.7,696.3 1704.0,756.1 1704.2,695.1 1704.5,752.1 1704.7,698.9 1705.0,755.5 1705.2,699.8 1705.5,753.6 1705.7,697.4 1706.0,753.4 1706.2,698.1 1706.5,752.8 1706.7,697.9 1707.0,755.4 1707.0,699.9 1707.0,515.0 1707.0,515.0 1707.0,699.9 1707.2,693.7 1707.5,751.3 1707.7,697.8 1708.0,753.7 1708.2,694.8 1708.5,750.2 1708.7,700.8 1709.0,751.1 1709.2,702.8 1709.5,754.7 1709.7,700.2 1710.0,756.3 1710.2,705.6 1710.5,758.8 1710.7,707.4 1711.0,764.4 1711.2,709.0 1711.5,764.4 1711.7,704.4 1712.0,756.5 1712.2,703.5 1712.5,763.2 1712.7,701.5 1713.0,757.3 1713.1,699.9 1713.1,486.2 1713.2,486.2 1713.2,699.9 1713.2,702.3 1713.5,754.8 1713.7,699.5 1714.0,759.9 1714.2,698.5 1714.5,761.5 1714.7,698.3 1715.0,751.5 1715.2,699.7 1715.5,756.0 1715.7,699.8 1716.0,754.9 1716.2,701.7 1716.5,753.2 1716.7,702.5 1717.0,755.5 1717.2,703.4 1717.5,759.9 1717.7,704.3 1718.0,759.3 1718.2,703.7 1718.5,760.3 1718.7,706.4 1719.0,765.5 1719.2,703.1 1719.5,763.0 1719.7,701.9 1720.0,758.1" stroke="#c81e23" stroke-opacity="0.76"/>
</g></g>
<text x="16.36" y="795.2" font-size="12.5" fill="#000" textLength="68.76" lengthAdjust="spacingAndGlyphs" >Interpolated:</text>
<circle cx="106.3" cy="790.5" r="6.6" fill="#0b5fc0" shape-rendering="geometricPrecision"/>
<circle cx="106.3" cy="790.5" r="2.6" fill="#ffffff" shape-rendering="geometricPrecision"/>
<text x="118.4" y="795.2" font-size="12.5" fill="#000" textLength="16.92" lengthAdjust="spacingAndGlyphs" >On</text>
<circle cx="155.2" cy="790.5" r="6" fill="#f3f3f3" stroke="#333" stroke-width="1" shape-rendering="geometricPrecision"/>
<text x="167.89" y="795.2" font-size="12.5" fill="#000" textLength="17.09" lengthAdjust="spacingAndGlyphs" >Off</text>
<text x="205.47" y="795.2" font-size="12.5" fill="#000" textLength="80.08" lengthAdjust="spacingAndGlyphs" >Show Residual:</text>
<rect x="297.5" y="778.5" width="122" height="22" fill="#f6f6f6" stroke="#d0d0d0"/>
<polyline points="407,788.0 411,792.0 415,788.0" fill="none" stroke="#333" stroke-width="1" shape-rendering="geometricPrecision"/>
<text x="300.35" y="795.2" font-size="12.5" fill="#000" textLength="18.13" lengthAdjust="spacingAndGlyphs" >Off</text>
<text x="430.47" y="795.2" font-size="12.5" fill="#000" textLength="70.08" lengthAdjust="spacingAndGlyphs" >Show Cycles:</text>
<rect x="512.5" y="778.5" width="69" height="22" fill="#ffffff" stroke="#9da3a7"/>
<rect x="567.0" y="780.5" width="12" height="8" fill="#fbfbfb" stroke="#dcdcdc"/>
<rect x="567.0" y="789.5" width="12" height="8" fill="#fbfbfb" stroke="#dcdcdc"/>
<polygon points="569.8,786 576.2,786 573.0,782.6" fill="#111" shape-rendering="geometricPrecision"/>
<polygon points="569.8,792 576.2,792 573.0,795.4" fill="#111" shape-rendering="geometricPrecision"/>
<text x="513.78" y="792.2" font-size="12.5" fill="#000" textLength="6.1" lengthAdjust="spacingAndGlyphs" >3</text>
<text x="892.24" y="795.2" font-size="12.5" fill="#000" textLength="63.31" lengthAdjust="spacingAndGlyphs" >FFT Length:</text>
<rect x="968.5" y="778.5" width="60" height="22" fill="#f6f6f6" stroke="#d0d0d0"/>
<polyline points="1016,788.0 1020,792.0 1024,788.0" fill="none" stroke="#333" stroke-width="1" shape-rendering="geometricPrecision"/>
<text x="970.45" y="795.2" font-size="12.5" fill="#000" textLength="25.69" lengthAdjust="spacingAndGlyphs" >256K</text>
<text x="1039.94" y="795.2" font-size="12.5" fill="#000" textLength="47.69" lengthAdjust="spacingAndGlyphs" >Window:</text>
<rect x="1099.5" y="778.5" width="180" height="22" fill="#f6f6f6" stroke="#d0d0d0"/>
<polyline points="1267,788.0 1271,792.0 1275,788.0" fill="none" stroke="#333" stroke-width="1" shape-rendering="geometricPrecision"/>
<text x="1102.98" y="795.2" font-size="12.5" fill="#000" textLength="74.06" lengthAdjust="spacingAndGlyphs" >AP-Equiripple</text>
<text x="1290.98" y="795.2" font-size="12.5" fill="#000" textLength="52.07" lengthAdjust="spacingAndGlyphs" >Averages:</text>
<rect x="1354.5" y="778.5" width="69" height="22" fill="#ffffff" stroke="#9da3a7"/>
<rect x="1409.0" y="780.5" width="12" height="8" fill="#fbfbfb" stroke="#dcdcdc"/>
<rect x="1409.0" y="789.5" width="12" height="8" fill="#fbfbfb" stroke="#dcdcdc"/>
<polygon points="1411.8,786 1418.2,786 1415.0,782.6" fill="#111" shape-rendering="geometricPrecision"/>
<polygon points="1411.8,792 1418.2,792 1415.0,795.4" fill="#111" shape-rendering="geometricPrecision"/>
<text x="1355.78" y="792.2" font-size="12.5" fill="#000" textLength="6.1" lengthAdjust="spacingAndGlyphs" >3</text>
<rect x="1431.5" y="783.5" width="12" height="12" fill="#fff" stroke="#333" rx="2.5" shape-rendering="geometricPrecision"/>
<text x="1449.47" y="795.2" font-size="12.5" fill="#000" textLength="77.31" lengthAdjust="spacingAndGlyphs" >Show Residual</text>
<rect x="1540.5" y="779.5" width="72" height="22" fill="#fbfbfb" stroke="#d0d0d0" rx="2"/>
<text x="1561.39" y="795" font-size="12.5" fill="#000" textLength="28.99" lengthAdjust="spacingAndGlyphs" >Reset</text>
<rect x="0" y="819" width="1736" height="7" fill="#47737f" />
<circle cx="870.5" cy="822.5" r="1.6" fill="#c9d6dc" shape-rendering="geometricPrecision"/>
<circle cx="876.5" cy="822.5" r="1.6" fill="#c9d6dc" shape-rendering="geometricPrecision"/>
<circle cx="882.5" cy="822.5" r="1.6" fill="#c9d6dc" shape-rendering="geometricPrecision"/>
<rect x="0" y="826" width="1736" height="25" fill="#d4d4d4" />
<rect x="0" y="850" width="1736" height="1" fill="#dde5e9" />
<rect x="2" y="830" width="16" height="16" fill="#2b4451" />
<rect x="4" y="837" width="12" height="2" fill="#fff" />
<rect x="9" y="832" width="2" height="12" fill="#fff" />
<text x="20.98" y="842" font-size="12.5" fill="#000" textLength="56.74" lengthAdjust="spacingAndGlyphs" >Add Meter</text>
<polygon points="81.5,836.75 88.5,836.75 85,840.25" fill="#000"/>
<rect x="96" y="831" width="1" height="15" fill="#b4b8ba" />
<rect x="97" y="831" width="1" height="15" fill="#ffffff" />
<rect x="100" y="830" width="16" height="16" fill="#2b4451" />
<g fill="#fff" stroke="#2b4451" stroke-width="0.6" shape-rendering="geometricPrecision"><ellipse cx="105.5" cy="843" rx="4.2" ry="1.8"/><ellipse cx="105.5" cy="840" rx="4.2" ry="1.8"/><ellipse cx="105.5" cy="837" rx="4.2" ry="1.8"/><ellipse cx="105.5" cy="834" rx="4.2" ry="1.8"/><rect x="107.5" y="837" width="4.5" height="2.6" stroke="none"/><polygon points="111,833.8 115.6,838.3 111,842.8" stroke="none"/></g>
<text x="118.48" y="842" font-size="12.5" fill="#000" textLength="85.53" lengthAdjust="spacingAndGlyphs" >Save Meter Data</text>
<rect x="214" y="831" width="1" height="15" fill="#b4b8ba" />
<rect x="215" y="831" width="1" height="15" fill="#ffffff" />
<rect x="218" y="830" width="16" height="16" fill="#2b4451" />
<polygon points="222.5,833 222.5,843 230.5,838" fill="#fff" shape-rendering="geometricPrecision"/>
<text x="236.02" y="842" font-size="12.5" fill="#000" textLength="48.01" lengthAdjust="spacingAndGlyphs" >Regulate</text>
<rect x="1733" y="841" width="3" height="2" fill="#1c3a87" />
<rect x="3" y="854" width="858" height="25" fill="#dae3e6" />
<rect x="3" y="879" width="858" height="1" fill="#a0a4a6" />
<rect x="3" y="880" width="858" height="1" fill="#f6f9fa" />
<rect x="3" y="881" width="858" height="131" fill="#dae3e6" />
<text x="6.25" y="872.8" font-size="16" fill="#000" font-weight="bold" textLength="79.37" lengthAdjust="spacingAndGlyphs" >RMS Level</text>
<rect x="92.0" y="855" width="75" height="23" fill="#ffffff" />
<rect x="155.0" y="855" width="12" height="23" fill="#f7f7f7" />
<polygon points="157.5,864.75 164.5,864.75 161.0,868.25" fill="#000"/>
<text x="95.44" y="870.5" font-size="12.5" fill="#000" textLength="29.02" lengthAdjust="spacingAndGlyphs" >Vrms</text>
<rect x="170.0" y="858" width="16" height="16" fill="#2b4451" />
<rect x="171.0" y="861" width="14" height="2" fill="#ffffff" />
<rect x="171.0" y="863" width="14" height="3" fill="#4d6a9a" />
<rect x="171.0" y="866" width="14" height="3" fill="#4f8a8f" />
<rect x="171.0" y="869" width="14" height="2" fill="#ffffff" />
<polyline points="171.2,869.3 175.0,864.3 179.0,869.3 184.8,862.6" fill="none" stroke="#fff" stroke-width="1.1" shape-rendering="geometricPrecision"/>
<polygon points="187.0,865.0 193.0,865.0 190.0,868.0" fill="#000"/>
<rect x="200.0" y="858" width="16" height="16" fill="#2b4451" />
<g fill="#fff" shape-rendering="geometricPrecision"><circle cx="208.0" cy="866.0" r="4.7"/><rect x="206.75" y="859.7" width="2.5" height="3" transform="rotate(0 208.0 866.0)"/><rect x="206.75" y="859.7" width="2.5" height="3" transform="rotate(45 208.0 866.0)"/><rect x="206.75" y="859.7" width="2.5" height="3" transform="rotate(90 208.0 866.0)"/><rect x="206.75" y="859.7" width="2.5" height="3" transform="rotate(135 208.0 866.0)"/><rect x="206.75" y="859.7" width="2.5" height="3" transform="rotate(180 208.0 866.0)"/><rect x="206.75" y="859.7" width="2.5" height="3" transform="rotate(225 208.0 866.0)"/><rect x="206.75" y="859.7" width="2.5" height="3" transform="rotate(270 208.0 866.0)"/><rect x="206.75" y="859.7" width="2.5" height="3" transform="rotate(315 208.0 866.0)"/><circle cx="208.0" cy="866.0" r="1.9" fill="#2b4451"/></g>
<rect x="811" y="859" width="1" height="16" fill="#b4b8ba" />
<rect x="812" y="859" width="1" height="16" fill="#ffffff" />
<rect x="819" y="860" width="2" height="12" fill="#1c3a87" />
<rect x="819" y="870" width="12" height="2" fill="#1c3a87" />
<rect x="819" y="860" width="4" height="2" fill="#1c3a87" />
<rect x="829" y="868" width="2" height="4" fill="#1c3a87" />
<g shape-rendering="geometricPrecision"><polygon points="824.5,860 831,860 831,866.5" fill="#1c3a87"/><path d="M824.2 866.8L828 863" stroke="#1c3a87" stroke-width="2.3" stroke-linecap="round"/></g>
<path d="M844 862L853 871M853 862L844 871" stroke="#17303c" stroke-width="2.3"/>
<text x="9.99" y="926.1" font-size="31" fill="#000" textLength="37.95" lengthAdjust="spacingAndGlyphs" stroke="#dae3e6" stroke-width="0.35">Ch</text>
<polygon points="51.6,907.4 57.2,903.3 59.4,903.3 59.4,926 57.1,926 57.1,906.2 52.9,909.4" fill="#000" shape-rendering="geometricPrecision"/>
<text x="9.75" y="989.1" font-size="31" fill="#000" textLength="55.68" lengthAdjust="spacingAndGlyphs" stroke="#dae3e6" stroke-width="0.35">Ch2</text>
<polygon points="207.45,909.0 217.95,909.0 212.7,919.0" fill="#000"/>
<polygon points="207.45,972.0 217.95,972.0 212.7,982.0" fill="#000"/>
<rect x="5" y="944" width="216" height="1" fill="#a3a7a9" />
<rect x="221" y="884" width="631" height="123" fill="#000" />
<text x="659.3" y="918" font-size="33" fill="#00ff00" textLength="76.56" lengthAdjust="spacingAndGlyphs" stroke="#000" stroke-width="0.5">4.126</text>
<text x="772.84" y="918" font-size="33" fill="#00ff00" textLength="73.31" lengthAdjust="spacingAndGlyphs" stroke="#000" stroke-width="0.5">Vrms</text>
<text x="659.3" y="998" font-size="33" fill="#00ff00" textLength="76.56" lengthAdjust="spacingAndGlyphs" stroke="#000" stroke-width="0.5">4.126</text>
<text x="772.84" y="998" font-size="33" fill="#00ff00" textLength="73.31" lengthAdjust="spacingAndGlyphs" stroke="#000" stroke-width="0.5">Vrms</text>
<rect x="221.5" y="925.5" width="630" height="17" fill="#808080" stroke="#cfcfcf"/>
<rect x="222" y="926" width="469" height="16" fill="#00ff00" />
<rect x="222" y="932" width="468" height="3" fill="#000" />
<rect x="221.5" y="947.5" width="630" height="17" fill="#808080" stroke="#cfcfcf"/>
<rect x="222" y="948" width="469" height="16" fill="#00ff00" />
<rect x="222" y="954" width="468" height="3" fill="#000" />
<rect x="221" y="944" width="631" height="1" fill="#dfe2e3" />
<rect x="221" y="945" width="631" height="1" fill="#d3d6d7" />
<rect x="221" y="946" width="631" height="1" fill="#a9afb1" />
<rect x="867" y="854" width="858" height="25" fill="#dae3e6" />
<rect x="867" y="879" width="858" height="1" fill="#a0a4a6" />
<rect x="867" y="880" width="858" height="1" fill="#f6f9fa" />
<rect x="867" y="881" width="858" height="131" fill="#dae3e6" />
<text x="871.12" y="872.8" font-size="16" fill="#000" font-weight="bold" textLength="101.03" lengthAdjust="spacingAndGlyphs" >THD+N Ratio</text>
<rect x="979.0" y="855" width="75" height="23" fill="#ffffff" />
<rect x="1042.0" y="855" width="12" height="23" fill="#f7f7f7" />
<polygon points="1044.5,864.75 1051.5,864.75 1048.0,868.25" fill="#000"/>
<text x="982.02" y="870.5" font-size="12.5" fill="#000" textLength="11.96" lengthAdjust="spacingAndGlyphs" >%</text>
<rect x="1057.0" y="858" width="16" height="16" fill="#2b4451" />
<rect x="1058.0" y="861" width="14" height="2" fill="#ffffff" />
<rect x="1058.0" y="863" width="14" height="3" fill="#4d6a9a" />
<rect x="1058.0" y="866" width="14" height="3" fill="#4f8a8f" />
<rect x="1058.0" y="869" width="14" height="2" fill="#ffffff" />
<polyline points="1058.2,869.3 1062.0,864.3 1066.0,869.3 1071.8,862.6" fill="none" stroke="#fff" stroke-width="1.1" shape-rendering="geometricPrecision"/>
<polygon points="1074.0,865.0 1080.0,865.0 1077.0,868.0" fill="#000"/>
<rect x="1087.0" y="858" width="16" height="16" fill="#2b4451" />
<g fill="#fff" shape-rendering="geometricPrecision"><circle cx="1095.0" cy="866.0" r="4.7"/><rect x="1093.75" y="859.7" width="2.5" height="3" transform="rotate(0 1095.0 866.0)"/><rect x="1093.75" y="859.7" width="2.5" height="3" transform="rotate(45 1095.0 866.0)"/><rect x="1093.75" y="859.7" width="2.5" height="3" transform="rotate(90 1095.0 866.0)"/><rect x="1093.75" y="859.7" width="2.5" height="3" transform="rotate(135 1095.0 866.0)"/><rect x="1093.75" y="859.7" width="2.5" height="3" transform="rotate(180 1095.0 866.0)"/><rect x="1093.75" y="859.7" width="2.5" height="3" transform="rotate(225 1095.0 866.0)"/><rect x="1093.75" y="859.7" width="2.5" height="3" transform="rotate(270 1095.0 866.0)"/><rect x="1093.75" y="859.7" width="2.5" height="3" transform="rotate(315 1095.0 866.0)"/><circle cx="1095.0" cy="866.0" r="1.9" fill="#2b4451"/></g>
<rect x="1675" y="859" width="1" height="16" fill="#b4b8ba" />
<rect x="1676" y="859" width="1" height="16" fill="#ffffff" />
<rect x="1683" y="860" width="2" height="12" fill="#1c3a87" />
<rect x="1683" y="870" width="12" height="2" fill="#1c3a87" />
<rect x="1683" y="860" width="4" height="2" fill="#1c3a87" />
<rect x="1693" y="868" width="2" height="4" fill="#1c3a87" />
<g shape-rendering="geometricPrecision"><polygon points="1688.5,860 1695,860 1695,866.5" fill="#1c3a87"/><path d="M1688.2 866.8L1692 863" stroke="#1c3a87" stroke-width="2.3" stroke-linecap="round"/></g>
<path d="M1708 862L1717 871M1717 862L1708 871" stroke="#17303c" stroke-width="2.3"/>
<text x="873.99" y="926.1" font-size="31" fill="#000" textLength="37.95" lengthAdjust="spacingAndGlyphs" stroke="#dae3e6" stroke-width="0.35">Ch</text>
<polygon points="915.6,907.4 921.2,903.3 923.4,903.3 923.4,926 921.1,926 921.1,906.2 916.9,909.4" fill="#000" shape-rendering="geometricPrecision"/>
<text x="873.75" y="989.1" font-size="31" fill="#000" textLength="55.68" lengthAdjust="spacingAndGlyphs" stroke="#dae3e6" stroke-width="0.35">Ch2</text>
<polygon points="1071.45,909.0 1081.95,909.0 1076.7,919.0" fill="#000"/>
<polygon points="1071.45,972.0 1081.95,972.0 1076.7,982.0" fill="#000"/>
<rect x="869" y="944" width="216" height="1" fill="#a3a7a9" />
<rect x="1085" y="884" width="631" height="123" fill="#000" />
<text x="1535.82" y="918" font-size="33" fill="#00ff00" textLength="126.56" lengthAdjust="spacingAndGlyphs" stroke="#000" stroke-width="0.5">0.002724</text>
<text x="1684.92" y="918" font-size="33" fill="#00ff00" textLength="26.63" lengthAdjust="spacingAndGlyphs" stroke="#000" stroke-width="0.5">%</text>
<text x="1535.81" y="998" font-size="33" fill="#00ff00" textLength="127.03" lengthAdjust="spacingAndGlyphs" stroke="#000" stroke-width="0.5">0.002086</text>
<text x="1684.92" y="998" font-size="33" fill="#00ff00" textLength="26.63" lengthAdjust="spacingAndGlyphs" stroke="#000" stroke-width="0.5">%</text>
<rect x="1085.5" y="925.5" width="630" height="17" fill="#808080" stroke="#cfcfcf"/>
<rect x="1086" y="926" width="151" height="16" fill="#00ff00" />
<rect x="1234" y="932" width="481" height="3" fill="#000" />
<rect x="1085.5" y="947.5" width="630" height="17" fill="#808080" stroke="#cfcfcf"/>
<rect x="1086" y="948" width="139" height="16" fill="#00ff00" />
<rect x="1221" y="954" width="494" height="3" fill="#000" />
<rect x="1085" y="944" width="631" height="1" fill="#dfe2e3" />
<rect x="1085" y="945" width="631" height="1" fill="#d3d6d7" />
<rect x="1085" y="946" width="631" height="1" fill="#a9afb1" />
<rect x="3" y="1018" width="858" height="25" fill="#dae3e6" />
<rect x="3" y="1043" width="858" height="1" fill="#a0a4a6" />
<rect x="3" y="1044" width="858" height="1" fill="#f6f9fa" />
<rect x="3" y="1045" width="858" height="131" fill="#dae3e6" />
<text x="6.24" y="1036.8" font-size="16" fill="#000" font-weight="bold" textLength="79.84" lengthAdjust="spacingAndGlyphs" >Frequency</text>
<rect x="93.5" y="1019" width="75" height="23" fill="#ffffff" />
<rect x="156.5" y="1019" width="12" height="23" fill="#f7f7f7" />
<polygon points="159.0,1028.75 166.0,1028.75 162.5,1032.25" fill="#000"/>
<text x="95.95" y="1034.5" font-size="12.5" fill="#000" textLength="15.7" lengthAdjust="spacingAndGlyphs" >Hz</text>
<rect x="171.5" y="1022" width="16" height="16" fill="#2b4451" />
<rect x="172.5" y="1025" width="14" height="2" fill="#ffffff" />
<rect x="172.5" y="1027" width="14" height="3" fill="#4d6a9a" />
<rect x="172.5" y="1030" width="14" height="3" fill="#4f8a8f" />
<rect x="172.5" y="1033" width="14" height="2" fill="#ffffff" />
<polyline points="172.7,1033.3 176.5,1028.3 180.5,1033.3 186.3,1026.6" fill="none" stroke="#fff" stroke-width="1.1" shape-rendering="geometricPrecision"/>
<polygon points="188.5,1029.0 194.5,1029.0 191.5,1032.0" fill="#000"/>
<rect x="201.5" y="1022" width="16" height="16" fill="#2b4451" />
<g fill="#fff" shape-rendering="geometricPrecision"><circle cx="209.5" cy="1030.0" r="4.7"/><rect x="208.25" y="1023.7" width="2.5" height="3" transform="rotate(0 209.5 1030.0)"/><rect x="208.25" y="1023.7" width="2.5" height="3" transform="rotate(45 209.5 1030.0)"/><rect x="208.25" y="1023.7" width="2.5" height="3" transform="rotate(90 209.5 1030.0)"/><rect x="208.25" y="1023.7" width="2.5" height="3" transform="rotate(135 209.5 1030.0)"/><rect x="208.25" y="1023.7" width="2.5" height="3" transform="rotate(180 209.5 1030.0)"/><rect x="208.25" y="1023.7" width="2.5" height="3" transform="rotate(225 209.5 1030.0)"/><rect x="208.25" y="1023.7" width="2.5" height="3" transform="rotate(270 209.5 1030.0)"/><rect x="208.25" y="1023.7" width="2.5" height="3" transform="rotate(315 209.5 1030.0)"/><circle cx="209.5" cy="1030.0" r="1.9" fill="#2b4451"/></g>
<rect x="811" y="1023" width="1" height="16" fill="#b4b8ba" />
<rect x="812" y="1023" width="1" height="16" fill="#ffffff" />
<rect x="819" y="1024" width="2" height="12" fill="#1c3a87" />
<rect x="819" y="1034" width="12" height="2" fill="#1c3a87" />
<rect x="819" y="1024" width="4" height="2" fill="#1c3a87" />
<rect x="829" y="1032" width="2" height="4" fill="#1c3a87" />
<g shape-rendering="geometricPrecision"><polygon points="824.5,1024 831,1024 831,1030.5" fill="#1c3a87"/><path d="M824.2 1030.8L828 1027" stroke="#1c3a87" stroke-width="2.3" stroke-linecap="round"/></g>
<path d="M844 1026L853 1035M853 1026L844 1035" stroke="#17303c" stroke-width="2.3"/>
<text x="9.99" y="1090.1" font-size="31" fill="#000" textLength="37.95" lengthAdjust="spacingAndGlyphs" stroke="#dae3e6" stroke-width="0.35">Ch</text>
<polygon points="51.6,1071.4 57.2,1067.3 59.4,1067.3 59.4,1090 57.1,1090 57.1,1070.2 52.9,1073.4" fill="#000" shape-rendering="geometricPrecision"/>
<text x="9.75" y="1153.1" font-size="31" fill="#000" textLength="55.68" lengthAdjust="spacingAndGlyphs" stroke="#dae3e6" stroke-width="0.35">Ch2</text>
<polygon points="207.45,1073.0 217.95,1073.0 212.7,1083.0" fill="#000"/>
<polygon points="207.45,1136.0 217.95,1136.0 212.7,1146.0" fill="#000"/>
<rect x="5" y="1108" width="216" height="1" fill="#a3a7a9" />
<rect x="221" y="1048" width="631" height="123" fill="#000" />
<text x="652.82" y="1082" font-size="33" fill="#00ff00" textLength="109.6" lengthAdjust="spacingAndGlyphs" stroke="#000" stroke-width="0.5">0.99999</text>
<text x="793.56" y="1082" font-size="33" fill="#00ff00" textLength="55.05" lengthAdjust="spacingAndGlyphs" stroke="#000" stroke-width="0.5">kHz</text>
<text x="652.82" y="1162" font-size="33" fill="#00ff00" textLength="109.6" lengthAdjust="spacingAndGlyphs" stroke="#000" stroke-width="0.5">0.99999</text>
<text x="793.56" y="1162" font-size="33" fill="#00ff00" textLength="55.05" lengthAdjust="spacingAndGlyphs" stroke="#000" stroke-width="0.5">kHz</text>
<rect x="221.5" y="1089.5" width="630" height="17" fill="#808080" stroke="#cfcfcf"/>
<rect x="222" y="1090" width="357" height="16" fill="#00ff00" />
<rect x="222" y="1096" width="629" height="3" fill="#000" />
<rect x="221.5" y="1111.5" width="630" height="17" fill="#808080" stroke="#cfcfcf"/>
<rect x="222" y="1112" width="357" height="16" fill="#00ff00" />
<rect x="222" y="1118" width="629" height="3" fill="#000" />
<rect x="221" y="1108" width="631" height="1" fill="#dfe2e3" />
<rect x="221" y="1109" width="631" height="1" fill="#d3d6d7" />
<rect x="221" y="1110" width="631" height="1" fill="#a9afb1" />
<rect x="867" y="1018" width="858" height="25" fill="#dae3e6" />
<rect x="867" y="1043" width="858" height="1" fill="#a0a4a6" />
<rect x="867" y="1044" width="858" height="1" fill="#f6f9fa" />
<rect x="867" y="1045" width="858" height="131" fill="#dae3e6" />
<text x="870.83" y="1036.8" font-size="16" fill="#000" font-weight="bold" textLength="50.56" lengthAdjust="spacingAndGlyphs" >SINAD</text>
<rect x="928.2" y="1019" width="75" height="23" fill="#ffffff" />
<rect x="991.2" y="1019" width="12" height="23" fill="#f7f7f7" />
<polygon points="993.7,1028.75 1000.7,1028.75 997.2,1032.25" fill="#000"/>
<text x="931.18" y="1034.5" font-size="12.5" fill="#000" textLength="15.18" lengthAdjust="spacingAndGlyphs" >dB</text>
<rect x="1006.2" y="1022" width="16" height="16" fill="#2b4451" />
<rect x="1007.2" y="1025" width="14" height="2" fill="#ffffff" />
<rect x="1007.2" y="1027" width="14" height="3" fill="#4d6a9a" />
<rect x="1007.2" y="1030" width="14" height="3" fill="#4f8a8f" />
<rect x="1007.2" y="1033" width="14" height="2" fill="#ffffff" />
<polyline points="1007.4000000000001,1033.3 1011.2,1028.3 1015.2,1033.3 1021.0,1026.6" fill="none" stroke="#fff" stroke-width="1.1" shape-rendering="geometricPrecision"/>
<polygon points="1023.2,1029.0 1029.2,1029.0 1026.2,1032.0" fill="#000"/>
<rect x="1036.2" y="1022" width="16" height="16" fill="#2b4451" />
<g fill="#fff" shape-rendering="geometricPrecision"><circle cx="1044.2" cy="1030.0" r="4.7"/><rect x="1042.95" y="1023.7" width="2.5" height="3" transform="rotate(0 1044.2 1030.0)"/><rect x="1042.95" y="1023.7" width="2.5" height="3" transform="rotate(45 1044.2 1030.0)"/><rect x="1042.95" y="1023.7" width="2.5" height="3" transform="rotate(90 1044.2 1030.0)"/><rect x="1042.95" y="1023.7" width="2.5" height="3" transform="rotate(135 1044.2 1030.0)"/><rect x="1042.95" y="1023.7" width="2.5" height="3" transform="rotate(180 1044.2 1030.0)"/><rect x="1042.95" y="1023.7" width="2.5" height="3" transform="rotate(225 1044.2 1030.0)"/><rect x="1042.95" y="1023.7" width="2.5" height="3" transform="rotate(270 1044.2 1030.0)"/><rect x="1042.95" y="1023.7" width="2.5" height="3" transform="rotate(315 1044.2 1030.0)"/><circle cx="1044.2" cy="1030.0" r="1.9" fill="#2b4451"/></g>
<rect x="1675" y="1023" width="1" height="16" fill="#b4b8ba" />
<rect x="1676" y="1023" width="1" height="16" fill="#ffffff" />
<rect x="1683" y="1024" width="2" height="12" fill="#1c3a87" />
<rect x="1683" y="1034" width="12" height="2" fill="#1c3a87" />
<rect x="1683" y="1024" width="4" height="2" fill="#1c3a87" />
<rect x="1693" y="1032" width="2" height="4" fill="#1c3a87" />
<g shape-rendering="geometricPrecision"><polygon points="1688.5,1024 1695,1024 1695,1030.5" fill="#1c3a87"/><path d="M1688.2 1030.8L1692 1027" stroke="#1c3a87" stroke-width="2.3" stroke-linecap="round"/></g>
<path d="M1708 1026L1717 1035M1717 1026L1708 1035" stroke="#17303c" stroke-width="2.3"/>
<text x="873.99" y="1090.1" font-size="31" fill="#000" textLength="37.95" lengthAdjust="spacingAndGlyphs" stroke="#dae3e6" stroke-width="0.35">Ch</text>
<polygon points="915.6,1071.4 921.2,1067.3 923.4,1067.3 923.4,1090 921.1,1090 921.1,1070.2 916.9,1073.4" fill="#000" shape-rendering="geometricPrecision"/>
<text x="873.75" y="1153.1" font-size="31" fill="#000" textLength="55.68" lengthAdjust="spacingAndGlyphs" stroke="#dae3e6" stroke-width="0.35">Ch2</text>
<polygon points="1071.45,1073.0 1081.95,1073.0 1076.7,1083.0" fill="#000"/>
<polygon points="1071.45,1136.0 1081.95,1136.0 1076.7,1146.0" fill="#000"/>
<rect x="869" y="1108" width="216" height="1" fill="#a3a7a9" />
<rect x="1085" y="1048" width="631" height="123" fill="#000" />
<text x="1555.0" y="1082" font-size="33" fill="#00ff00" textLength="91.03" lengthAdjust="spacingAndGlyphs" stroke="#000" stroke-width="0.5">91.296</text>
<text x="1672.71" y="1082" font-size="33" fill="#00ff00" textLength="37.52" lengthAdjust="spacingAndGlyphs" stroke="#000" stroke-width="0.5">dB</text>
<text x="1555.0" y="1162" font-size="33" fill="#00ff00" textLength="91.03" lengthAdjust="spacingAndGlyphs" stroke="#000" stroke-width="0.5">93.613</text>
<text x="1672.71" y="1162" font-size="33" fill="#00ff00" textLength="37.52" lengthAdjust="spacingAndGlyphs" stroke="#000" stroke-width="0.5">dB</text>
<rect x="1085.5" y="1089.5" width="630" height="17" fill="#808080" stroke="#cfcfcf"/>
<rect x="1086" y="1090" width="480" height="16" fill="#00ff00" />
<rect x="1086" y="1096" width="481" height="3" fill="#000" />
<rect x="1085.5" y="1111.5" width="630" height="17" fill="#808080" stroke="#cfcfcf"/>
<rect x="1086" y="1112" width="492" height="16" fill="#00ff00" />
<rect x="1086" y="1118" width="494" height="3" fill="#000" />
<rect x="1085" y="1108" width="631" height="1" fill="#dfe2e3" />
<rect x="1085" y="1109" width="631" height="1" fill="#d3d6d7" />
<rect x="1085" y="1110" width="631" height="1" fill="#a9afb1" />
</svg>
</body></html>
